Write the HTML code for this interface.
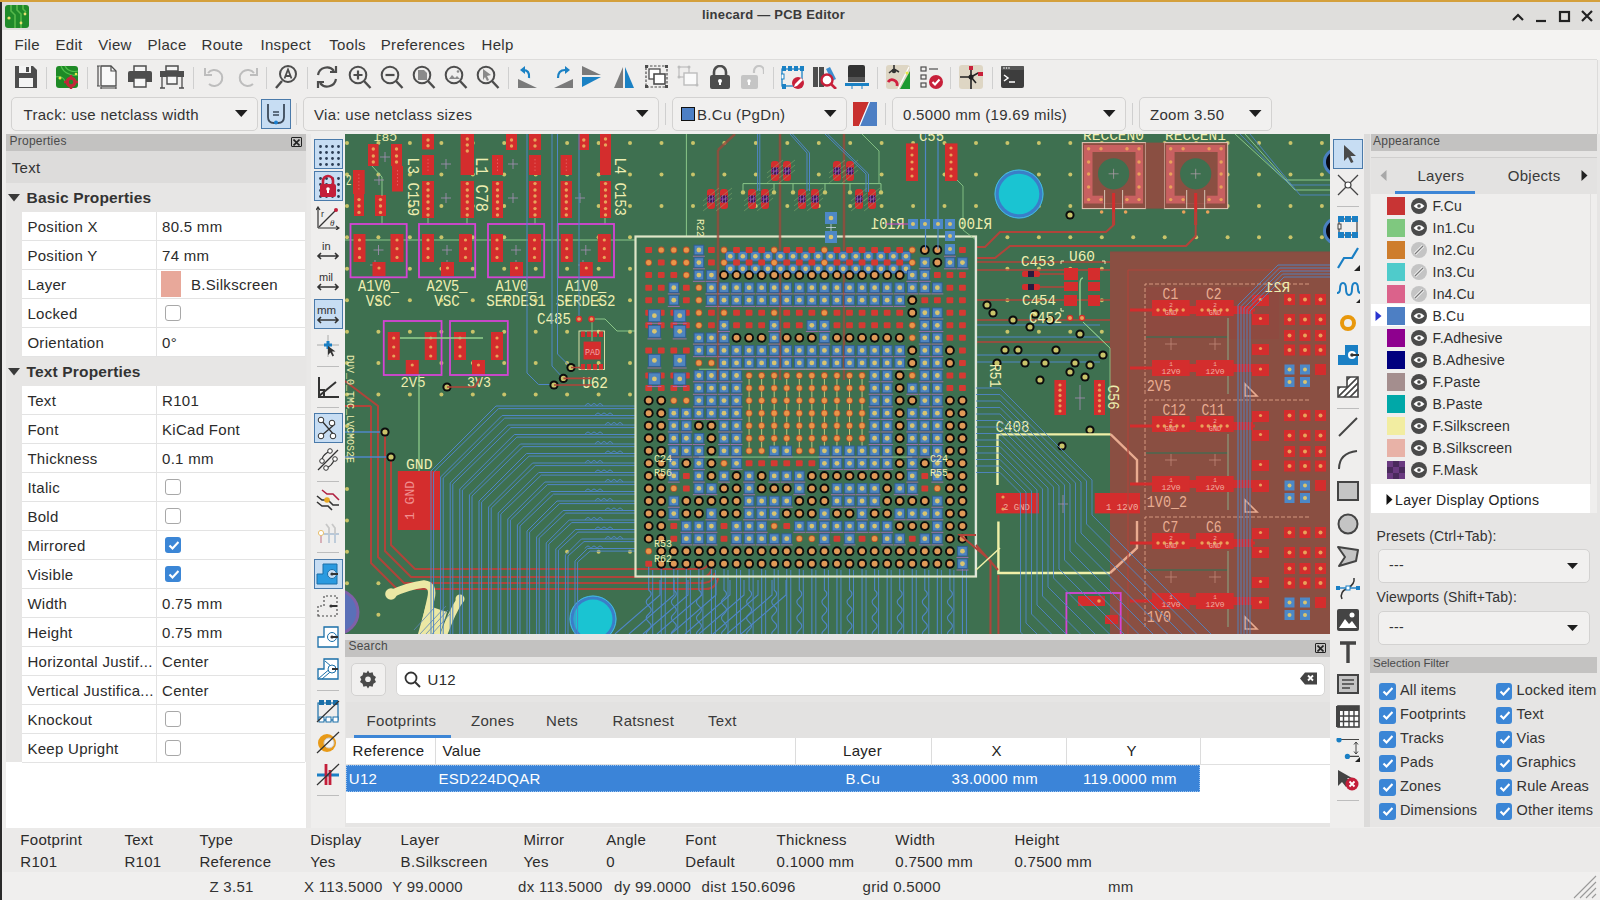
<!DOCTYPE html>
<html><head><meta charset="utf-8">
<style>
*{box-sizing:border-box;margin:0;padding:0}
html,body{width:1600px;height:900px;overflow:hidden;background:#efeeed;font-family:"Liberation Sans",sans-serif;color:#2e3436;position:relative}
.a{position:absolute}
.t{position:absolute;white-space:nowrap;line-height:1.2}
svg{position:absolute;overflow:hidden}
</style></head><body>

<div class="a" style="left:0px;top:0px;width:1600px;height:2px;background:#d4a03c;"></div>
<div class="a" style="left:0px;top:2px;width:1600px;height:28px;background:#dfdedc;"></div>
<div class="a" style="left:0px;top:2px;width:2px;height:898px;background:#2a2a2a;"></div>
<div class="t" style="left:702px;top:7px;font-size:13px;color:#3a3a3a;font-weight:bold;letter-spacing:0.2px;">linecard — PCB Editor</div>
<svg style="left:5px;top:5px" width="24" height="23" viewBox="0 0 24 23">
<rect x="0" y="0" width="24" height="23" rx="3" fill="#1f8a2a"/>
<path d="M6 0 v6 l4 4 v13 M12 0 v5 l4 4 v14 M18 0 v4 l3 3" stroke="#56b84a" stroke-width="1.6" fill="none"/>
<circle cx="4" cy="13" r="1.6" fill="#e8e070"/><circle cx="20" cy="9" r="1.4" fill="#e8e070"/><circle cx="16" cy="18" r="1.4" fill="#e8e070"/>
</svg>
<svg style="left:1508px;top:8px" width="90" height="18" viewBox="0 0 90 18">
<path d="M5 12 l5 -5 l5 5" stroke="#222" stroke-width="2.2" fill="none"/>
<path d="M28 13 h10" stroke="#222" stroke-width="2.2"/>
<rect x="52" y="4" width="9" height="9" stroke="#222" stroke-width="2.2" fill="none"/>
<path d="M74 3 l10 10 M84 3 l-10 10" stroke="#222" stroke-width="2.2"/>
</svg>
<div class="a" style="left:3px;top:30px;width:1597px;height:30px;background:#f4f3f2;"></div>
<div class="a" style="left:5px;top:59px;width:1592px;height:1px;background:#dddcdb;"></div>
<div class="t" style="left:14.5px;top:36px;font-size:15px;color:#333;font-weight:normal;letter-spacing:0.3px;">File</div>
<div class="t" style="left:55.5px;top:36px;font-size:15px;color:#333;font-weight:normal;letter-spacing:0.3px;">Edit</div>
<div class="t" style="left:98.3px;top:36px;font-size:15px;color:#333;font-weight:normal;letter-spacing:0.3px;">View</div>
<div class="t" style="left:147.5px;top:36px;font-size:15px;color:#333;font-weight:normal;letter-spacing:0.3px;">Place</div>
<div class="t" style="left:201.5px;top:36px;font-size:15px;color:#333;font-weight:normal;letter-spacing:0.3px;">Route</div>
<div class="t" style="left:260.5px;top:36px;font-size:15px;color:#333;font-weight:normal;letter-spacing:0.3px;">Inspect</div>
<div class="t" style="left:329.3px;top:36px;font-size:15px;color:#333;font-weight:normal;letter-spacing:0.3px;">Tools</div>
<div class="t" style="left:380.8px;top:36px;font-size:15px;color:#333;font-weight:normal;letter-spacing:0.3px;">Preferences</div>
<div class="t" style="left:481.5px;top:36px;font-size:15px;color:#333;font-weight:normal;letter-spacing:0.3px;">Help</div>
<div class="a" style="left:5px;top:60px;width:1592px;height:74px;background:#efeeed;"></div>
<div class="a" style="left:46px;top:67px;width:1px;height:22px;background:#cfcfcf;"></div>
<div class="a" style="left:87px;top:67px;width:1px;height:22px;background:#cfcfcf;"></div>
<div class="a" style="left:193px;top:67px;width:1px;height:22px;background:#cfcfcf;"></div>
<div class="a" style="left:266px;top:67px;width:1px;height:22px;background:#cfcfcf;"></div>
<div class="a" style="left:307px;top:67px;width:1px;height:22px;background:#cfcfcf;"></div>
<div class="a" style="left:508px;top:67px;width:1px;height:22px;background:#cfcfcf;"></div>
<div class="a" style="left:773px;top:67px;width:1px;height:22px;background:#cfcfcf;"></div>
<div class="a" style="left:877px;top:67px;width:1px;height:22px;background:#cfcfcf;"></div>
<div class="a" style="left:950px;top:67px;width:1px;height:22px;background:#cfcfcf;"></div>
<div class="a" style="left:992px;top:67px;width:1px;height:22px;background:#cfcfcf;"></div>
<svg style="left:15px;top:65px" width="24" height="24" viewBox="0 0 24 24"><path d="M0 1 h18 l4 4 v18 h-22z" fill="#4d4d4d"/><rect x="4" y="1" width="12" height="7" fill="#f4f4f4"/><rect x="11" y="2" width="3" height="5" fill="#4d4d4d"/><rect x="4" y="13" width="14" height="9" fill="#f4f4f4"/></svg>
<svg style="left:56px;top:65px" width="24" height="24" viewBox="0 0 24 24"><rect x="0" y="1" width="22" height="22" rx="3" fill="#1e8a26"/><path d="M5 1 q2 6 8 8 q4 2 9 1 M9 1 q2 4 6 5 q3 1 7 0 M0 12 q6 -2 9 4" stroke="#4fc04a" stroke-width="1.2" fill="none"/><circle cx="4" cy="13" r="1.5" fill="#e6e64a"/><circle cx="20" cy="9" r="1.3" fill="#e6e64a"/><circle cx="15" cy="17" r="5.5" fill="#c0283a"/><circle cx="15" cy="17" r="2.2" fill="#1e8a26"/><path d="M15 10 v3 M15 21 v3 M8 17 h3 M19 17 h3" stroke="#c0283a" stroke-width="2.5"/></svg>
<svg style="left:97px;top:65px" width="24" height="24" viewBox="0 0 24 24"><path d="M4 1 h10 l5 5 v15 h-15z" fill="#f8f8f8" stroke="#4d4d4d" stroke-width="1.3"/><path d="M14 1 v5 h5" fill="none" stroke="#4d4d4d" stroke-width="1.2"/><path d="M1 1 v20 M0 1 h3 M0 21 h3 M4 23 h15 M4 22 v2 M19 22 v2" stroke="#4d4d4d" stroke-width="1.2"/></svg>
<svg style="left:128px;top:65px" width="24" height="24" viewBox="0 0 24 24"><rect x="6" y="1" width="12" height="6" fill="#f4f4f4" stroke="#4d4d4d" stroke-width="1.5"/><path d="M0 8 q0 -2 2 -2 h20 q2 0 2 2 v9 h-24z" fill="#4d4d4d"/><path d="M6 13 h12 v9 h-12z" fill="#f6f6f6" stroke="#4d4d4d" stroke-width="1.4"/></svg>
<svg style="left:160px;top:65px" width="24" height="24" viewBox="0 0 24 24"><rect x="6" y="1" width="12" height="5" fill="#f4f4f4" stroke="#4d4d4d" stroke-width="1.5"/><path d="M0 6 h24 v6 h-24z" fill="#4d4d4d"/><path d="M7 11 h10 v8 h-10z" fill="#f6f6f6" stroke="#4d4d4d" stroke-width="1.4"/><path d="M2 12 v11 M22 12 v11 M0 23 h5 M19 23 h5" stroke="#4d4d4d" stroke-width="1.3"/></svg>
<svg style="left:202px;top:65px" width="24" height="24" viewBox="0 0 24 24"><path d="M6 8 a8 8 0 1 1 1 11" stroke="#bdbdbd" stroke-width="2" fill="none"/><path d="M3 3 v7 h7" stroke="#bdbdbd" stroke-width="2" fill="none"/></svg>
<svg style="left:236px;top:65px" width="24" height="24" viewBox="0 0 24 24"><path d="M18 8 a8 8 0 1 0 -1 11" stroke="#bdbdbd" stroke-width="2" fill="none"/><path d="M21 3 v7 h-7" stroke="#bdbdbd" stroke-width="2" fill="none"/></svg>
<svg style="left:275px;top:65px" width="24" height="24" viewBox="0 0 24 24"><circle cx="13" cy="9" r="8" fill="none" stroke="#4d4d4d" stroke-width="2"/><path d="M7 16 l-6 7" stroke="#4d4d4d" stroke-width="2.4"/><path d="M9.5 13.5 l3.5 -9 l3.5 9 M10.5 11 h5" stroke="#4d4d4d" stroke-width="1.8" fill="none"/></svg>
<svg style="left:315px;top:65px" width="24" height="24" viewBox="0 0 24 24"><path d="M3 10 a9 9 0 0 1 16 -4 M21 14 a9 9 0 0 1 -16 4" stroke="#4d4d4d" stroke-width="2.2" fill="none"/><path d="M21 1 v6 h-6 M3 23 v-6 h6" stroke="#4d4d4d" stroke-width="2.2" fill="none"/></svg>
<svg style="left:348px;top:65px" width="24" height="24" viewBox="0 0 24 24"><circle cx="10" cy="10" r="8.3" fill="none" stroke="#4d4d4d" stroke-width="2"/><path d="M16 16 l6.5 7" stroke="#4d4d4d" stroke-width="2.4"/><path d="M10 5.5 v9 M5.5 10 h9" stroke="#4d4d4d" stroke-width="2.2"/></svg>
<svg style="left:380px;top:65px" width="24" height="24" viewBox="0 0 24 24"><circle cx="10" cy="10" r="8.3" fill="none" stroke="#4d4d4d" stroke-width="2"/><path d="M16 16 l6.5 7" stroke="#4d4d4d" stroke-width="2.4"/><path d="M5.5 10 h9" stroke="#4d4d4d" stroke-width="2.2"/></svg>
<svg style="left:412px;top:65px" width="24" height="24" viewBox="0 0 24 24"><circle cx="10" cy="10" r="8.3" fill="none" stroke="#4d4d4d" stroke-width="2"/><path d="M16 16 l6.5 7" stroke="#4d4d4d" stroke-width="2.4"/><path d="M6 5 h6 l3 3 v7 h-9z" fill="#8a8a8a"/></svg>
<svg style="left:444px;top:65px" width="24" height="24" viewBox="0 0 24 24"><circle cx="10" cy="10" r="8.3" fill="none" stroke="#4d4d4d" stroke-width="2"/><path d="M16 16 l6.5 7" stroke="#4d4d4d" stroke-width="2.4"/><path d="M5 14 l3 -4 l3 3 l2 -2 l3 3z" fill="#8a8a8a"/><circle cx="14" cy="6.5" r="1.3" fill="#8a8a8a"/></svg>
<svg style="left:476px;top:65px" width="24" height="24" viewBox="0 0 24 24"><circle cx="10" cy="10" r="8.3" fill="none" stroke="#4d4d4d" stroke-width="2"/><path d="M16 16 l6.5 7" stroke="#4d4d4d" stroke-width="2.4"/><path d="M7 4 l8 6 l-4 1 l2 4 l-2 1 l-2 -4 l-2 3z" fill="#8a8a8a"/></svg>
<svg style="left:517px;top:65px" width="24" height="24" viewBox="0 0 24 24"><path d="M1 23 v-9 l19 9z" fill="#7a7a7a"/><path d="M12 13 q1 -8 -6 -8" stroke="#1a81c4" stroke-width="2.2" fill="none"/><path d="M8 1 l-5 4 l5 4z" fill="#1a81c4"/></svg>
<svg style="left:550px;top:65px" width="24" height="24" viewBox="0 0 24 24"><path d="M23 23 v-9 l-19 9z" fill="#7a7a7a"/><path d="M8 13 q0 -8 7 -8" stroke="#1a81c4" stroke-width="2.2" fill="none"/><path d="M15 1 l5 4 l-5 4z" fill="#1a81c4"/></svg>
<svg style="left:582px;top:65px" width="24" height="24" viewBox="0 0 24 24"><path d="M0 1 l19 9 h-19z" fill="#7a7a7a"/><path d="M0 12 h19 l-19 10z" fill="#1a81c4"/></svg>
<svg style="left:614px;top:65px" width="24" height="24" viewBox="0 0 24 24"><path d="M9 2 v21 h-9z" fill="#7a7a7a"/><path d="M11 2 l9 21 h-9z" fill="#1a81c4"/></svg>
<svg style="left:645px;top:65px" width="24" height="24" viewBox="0 0 24 24"><rect x="1" y="1" width="21" height="21" fill="none" stroke="#4d4d4d" stroke-width="1.2" stroke-dasharray="2.5 1.5"/><rect x="0" y="0" width="3" height="3" fill="#4d4d4d"/><rect x="20" y="0" width="3" height="3" fill="#4d4d4d"/><rect x="0" y="20" width="3" height="3" fill="#4d4d4d"/><rect x="20" y="20" width="3" height="3" fill="#4d4d4d"/><rect x="4" y="4" width="11" height="10" fill="#fff" stroke="#4d4d4d" stroke-width="1.3"/><rect x="9" y="9" width="11" height="10" fill="#fff" stroke="#4d4d4d" stroke-width="1.6"/></svg>
<svg style="left:677px;top:65px" width="24" height="24" viewBox="0 0 24 24"><rect x="2" y="2" width="10" height="10" fill="none" stroke="#bdbdbd" stroke-width="1.2"/><rect x="7" y="8" width="13" height="12" fill="#fafafa" stroke="#bdbdbd" stroke-width="1.4"/><circle cx="2" cy="2" r="1.5" fill="#bdbdbd"/><circle cx="12" cy="2" r="1.5" fill="#bdbdbd"/><circle cx="2" cy="12" r="1.5" fill="#bdbdbd"/><circle cx="20" cy="20" r="1.5" fill="#bdbdbd"/></svg>
<svg style="left:709px;top:65px" width="24" height="24" viewBox="0 0 24 24"><path d="M5 11 v-4 a6 6 0 0 1 12 0 v4" stroke="#4d4d4d" stroke-width="2.6" fill="none"/><rect x="1" y="10" width="20" height="14" rx="2" fill="#4d4d4d"/><circle cx="11" cy="16" r="2" fill="#fff"/><rect x="10" y="16" width="2" height="4" fill="#fff"/></svg>
<svg style="left:740px;top:65px" width="24" height="24" viewBox="0 0 24 24"><path d="M14 8 v-2 a5 5 0 0 1 10 0 v3" stroke="#c5c5c5" stroke-width="2.2" fill="none"/><rect x="1" y="10" width="17" height="14" rx="2" fill="#c5c5c5"/><circle cx="9" cy="16" r="1.8" fill="#fff"/><rect x="8" y="16" width="2" height="4" fill="#fff"/></svg>
<svg style="left:781px;top:65px" width="24" height="24" viewBox="0 0 24 24"><rect x="1" y="4" width="20" height="17" fill="none" stroke="#1a81c4" stroke-width="1.3"/><rect x="1" y="1" width="4" height="5" fill="#1a81c4"/><rect x="7" y="1" width="4" height="5" fill="#1a81c4"/><rect x="13" y="1" width="4" height="5" fill="#1a81c4"/><rect x="19" y="1" width="4" height="5" fill="#1a81c4"/><rect x="0" y="9" width="3" height="5" fill="#fff" stroke="#1a81c4"/><rect x="1" y="19" width="4" height="5" fill="#1a81c4"/><circle cx="17" cy="18" r="6" fill="#c8203a"/><path d="M13 22 l1 -3 l6 -6 l2 2 l-6 6z" fill="#fff"/></svg>
<svg style="left:813px;top:65px" width="24" height="24" viewBox="0 0 24 24"><rect x="0" y="2" width="5" height="20" fill="#4d4d4d"/><rect x="6" y="2" width="5" height="20" fill="#4d4d4d"/><path d="M13 4 l4 -2 l6 12 l-4 2z" fill="#3d8fd0"/><circle cx="14" cy="15" r="5.5" fill="#fff" stroke="#c8203a" stroke-width="2.4"/><path d="M18 19 l5 5" stroke="#c8203a" stroke-width="2.6"/></svg>
<svg style="left:845px;top:65px" width="24" height="24" viewBox="0 0 24 24"><rect x="3" y="0" width="17" height="14" rx="2" fill="#333"/><rect x="3" y="12" width="17" height="5" fill="#555"/><rect x="0" y="18" width="24" height="3" fill="#1a81c4"/><path d="M7 21 v3 M17 21 v3" stroke="#1a81c4" stroke-width="1"/></svg>
<svg style="left:886px;top:65px" width="24" height="24" viewBox="0 0 24 24"><rect x="0" y="0" width="24" height="24" rx="3" fill="#ded6c4"/><path d="M14 24 l10 -18 v18z" fill="#1e9a30"/><path d="M12 24 l11 -22" stroke="#fff" stroke-width="1.2"/><circle cx="21" cy="8" r="1.5" fill="#e6e64a"/><path d="M8 0 v4 M3 8 l5 -4 l5 3" stroke="#333" stroke-width="1.6" fill="none"/><circle cx="8" cy="6" r="2.2" fill="#333"/><path d="M2 17 a5 5 0 0 1 9 4" stroke="#d02040" stroke-width="2.8" fill="none"/></svg>
<svg style="left:920px;top:65px" width="24" height="24" viewBox="0 0 24 24"><rect x="1" y="2" width="5" height="4" fill="none" stroke="#4d4d4d" stroke-width="1.2"/><rect x="1" y="10" width="5" height="4" fill="none" stroke="#4d4d4d" stroke-width="1.2"/><rect x="1" y="18" width="5" height="4" fill="none" stroke="#4d4d4d" stroke-width="1.2"/><path d="M9 4 h9" stroke="#4d4d4d" stroke-width="1.2"/><circle cx="16" cy="17" r="7" fill="#c8203a"/><path d="M12.5 17 l2.5 2.5 l4.5 -5" stroke="#fff" stroke-width="2" fill="none"/></svg>
<svg style="left:959px;top:65px" width="24" height="24" viewBox="0 0 24 24"><rect x="0" y="0" width="24" height="24" rx="3" fill="#ded6c4"/><path d="M12 2 v22 M1 12 h11 M12 12 l7 -4 h5 M12 12 l5 6" stroke="#222" stroke-width="1.6" fill="none"/><circle cx="12" cy="12" r="2.5" fill="#222"/><rect x="10" y="1" width="4" height="4" fill="#c8203a"/><rect x="19" y="7" width="5" height="4" fill="#c8203a"/></svg>
<svg style="left:1001px;top:65px" width="24" height="24" viewBox="0 0 24 24"><rect x="0" y="1" width="23" height="22" rx="2" fill="#3d3d3d"/><rect x="0" y="1" width="23" height="4" rx="1" fill="#555"/><circle cx="3" cy="3" r="0.8" fill="#fff"/><circle cx="5.5" cy="3" r="0.8" fill="#fff"/><circle cx="8" cy="3" r="0.8" fill="#fff"/><path d="M3 10 l4 3 l-4 3 M8 17 h6" stroke="#fff" stroke-width="1.5" fill="none"/></svg>
<div class="a" style="left:11px;top:97px;width:247px;height:34px;border:1px solid #d3d2d1;border-radius:5px;background:#f1f0ef"></div>
<div class="t" style="left:23.5px;top:105.8px;font-size:15px;color:#333;font-weight:normal;letter-spacing:0.3px;">Track: use netclass width</div>
<svg style="left:235px;top:110px" width="13" height="8" viewBox="0 0 13 8"><path d="M0 0 h12.5 l-6.25 7z" fill="#1e1e1e"/></svg>
<div class="a" style="left:261px;top:99px;width:30px;height:30px;background:#c7ddf3;border:1px solid #4a7aaa"></div>
<svg style="left:265px;top:103px" width="22" height="24" viewBox="0 0 22 24"><path d="M3 1 v13 q0 6 6 6 h4 q6 0 6 -6 v-13" stroke="#3c4a5a" stroke-width="1.8" fill="none"/><path d="M8 9 h6 M8 12 h6" stroke="#3c4a5a" stroke-width="1.4"/><circle cx="11" cy="19.5" r="2" fill="#1a7fd0"/></svg>
<div class="a" style="left:296px;top:103px;width:1px;height:22px;background:#cfcfcf;"></div>
<div class="a" style="left:303px;top:97px;width:356px;height:34px;border:1px solid #d3d2d1;border-radius:5px;background:#f1f0ef"></div>
<div class="t" style="left:314px;top:105.8px;font-size:15px;color:#333;font-weight:normal;letter-spacing:0.3px;">Via: use netclass sizes</div>
<svg style="left:636px;top:110px" width="13" height="8" viewBox="0 0 13 8"><path d="M0 0 h12.5 l-6.25 7z" fill="#1e1e1e"/></svg>
<div class="a" style="left:665px;top:103px;width:1px;height:22px;background:#cfcfcf;"></div>
<div class="a" style="left:672px;top:97px;width:175px;height:34px;border:1px solid #d3d2d1;border-radius:5px;background:#f1f0ef"></div>
<div class="t" style="left:697px;top:105.8px;font-size:15px;color:#333;font-weight:normal;letter-spacing:0.3px;">B.Cu (PgDn)</div>
<svg style="left:824px;top:110px" width="13" height="8" viewBox="0 0 13 8"><path d="M0 0 h12.5 l-6.25 7z" fill="#1e1e1e"/></svg>
<div class="a" style="left:681px;top:107px;width:14px;height:14px;background:#4d7fc4;border:1px solid #111"></div>
<svg style="left:853px;top:102px" width="24" height="24" viewBox="0 0 24 24"><rect x="0" y="0" width="24" height="24" fill="#4d7fc4"/><path d="M0 0 h16 l-10 24 h-6z" fill="#c8302e"/><path d="M16.5 0 l-10 24" stroke="#fff" stroke-width="1.2"/></svg>
<div class="a" style="left:885px;top:103px;width:1px;height:22px;background:#cfcfcf;"></div>
<div class="a" style="left:892px;top:97px;width:234px;height:34px;border:1px solid #d3d2d1;border-radius:5px;background:#f1f0ef"></div>
<div class="t" style="left:903px;top:105.8px;font-size:15px;color:#333;font-weight:normal;letter-spacing:0.3px;">0.5000 mm (19.69 mils)</div>
<svg style="left:1103px;top:110px" width="13" height="8" viewBox="0 0 13 8"><path d="M0 0 h12.5 l-6.25 7z" fill="#1e1e1e"/></svg>
<div class="a" style="left:1132px;top:103px;width:1px;height:22px;background:#cfcfcf;"></div>
<div class="a" style="left:1139px;top:97px;width:133px;height:34px;border:1px solid #d3d2d1;border-radius:5px;background:#f1f0ef"></div>
<div class="t" style="left:1150px;top:105.8px;font-size:15px;color:#333;font-weight:normal;letter-spacing:0.3px;">Zoom 3.50</div>
<svg style="left:1249px;top:110px" width="13" height="8" viewBox="0 0 13 8"><path d="M0 0 h12.5 l-6.25 7z" fill="#1e1e1e"/></svg>
<div class="a" style="left:1597px;top:60px;width:1px;height:74px;background:#dcdbda;"></div>
<div class="a" style="left:6px;top:134px;width:300px;height:17px;background:#c3c2c1;"></div>
<div class="t" style="left:9.5px;top:133.8px;font-size:12px;color:#4a4a4a;font-weight:normal;letter-spacing:0.25px;">Properties</div>
<div class="a" style="left:291px;top:137px;width:11px;height:10px;border:1.3px solid #222;border-radius:1px"></div>
<svg style="left:293px;top:139px" width="7" height="7" viewBox="0 0 7 7"><path d="M0.5 0.5 l6 6 M6.5 0.5 l-6 6" stroke="#222" stroke-width="1.6"/></svg>
<div class="a" style="left:6px;top:151px;width:300px;height:611px;background:#e7e6e5;"></div>
<div class="a" style="left:6px;top:151px;width:300px;height:31.6px;background:#dddcdb;"></div>
<div class="a" style="left:6px;top:762px;width:300px;height:66px;background:#ffffff;"></div>
<div class="a" style="left:306px;top:134px;width:3px;height:694px;background:#e8e7e6;"></div>
<div class="t" style="left:11.7px;top:159px;font-size:15px;color:#333;font-weight:normal;letter-spacing:0.3px;">Text</div>
<svg style="left:8px;top:193.6px" width="13" height="8" viewBox="0 0 13 8"><path d="M0 0 h12 l-6 7.5z" fill="#3a3a3a"/></svg>
<div class="t" style="left:26.6px;top:188.79999999999998px;font-size:15.5px;color:#333;font-weight:bold;letter-spacing:0.15px;">Basic Properties</div>
<div class="a" style="left:22px;top:211.6px;width:283px;height:29px;background:#ffffff;"></div>
<div class="a" style="left:22px;top:239.6px;width:283px;height:1px;background:#e3e3e3;"></div>
<div class="a" style="left:156px;top:211.6px;width:1px;height:29px;background:#e3e3e3;"></div>
<div class="t" style="left:27.4px;top:217.79999999999998px;font-size:15px;color:#2b2b2b;font-weight:normal;letter-spacing:0.3px;">Position X</div>
<div class="t" style="left:162px;top:217.79999999999998px;font-size:15px;color:#2b2b2b;font-weight:normal;letter-spacing:0.3px;">80.5 mm</div>
<div class="a" style="left:22px;top:240.6px;width:283px;height:29px;background:#ffffff;"></div>
<div class="a" style="left:22px;top:268.6px;width:283px;height:1px;background:#e3e3e3;"></div>
<div class="a" style="left:156px;top:240.6px;width:1px;height:29px;background:#e3e3e3;"></div>
<div class="t" style="left:27.4px;top:246.79999999999998px;font-size:15px;color:#2b2b2b;font-weight:normal;letter-spacing:0.3px;">Position Y</div>
<div class="t" style="left:162px;top:246.79999999999998px;font-size:15px;color:#2b2b2b;font-weight:normal;letter-spacing:0.3px;">74 mm</div>
<div class="a" style="left:22px;top:269.6px;width:283px;height:29px;background:#ffffff;"></div>
<div class="a" style="left:22px;top:297.6px;width:283px;height:1px;background:#e3e3e3;"></div>
<div class="a" style="left:156px;top:269.6px;width:1px;height:29px;background:#e3e3e3;"></div>
<div class="t" style="left:27.4px;top:275.8px;font-size:15px;color:#2b2b2b;font-weight:normal;letter-spacing:0.3px;">Layer</div>
<div class="a" style="left:161px;top:271.1px;width:20px;height:26px;background:#e8a89a;"></div>
<div class="t" style="left:191px;top:275.8px;font-size:15px;color:#2b2b2b;font-weight:normal;letter-spacing:0.3px;">B.Silkscreen</div>
<div class="a" style="left:22px;top:298.6px;width:283px;height:29px;background:#ffffff;"></div>
<div class="a" style="left:22px;top:326.6px;width:283px;height:1px;background:#e3e3e3;"></div>
<div class="a" style="left:156px;top:298.6px;width:1px;height:29px;background:#e3e3e3;"></div>
<div class="t" style="left:27.4px;top:304.8px;font-size:15px;color:#2b2b2b;font-weight:normal;letter-spacing:0.3px;">Locked</div>
<div class="a" style="left:165px;top:305.1px;width:16px;height:16px;border:1px solid #a8a8a8;border-radius:3px;background:#fff"></div>
<div class="a" style="left:22px;top:327.6px;width:283px;height:29px;background:#ffffff;"></div>
<div class="a" style="left:22px;top:355.6px;width:283px;height:1px;background:#e3e3e3;"></div>
<div class="a" style="left:156px;top:327.6px;width:1px;height:29px;background:#e3e3e3;"></div>
<div class="t" style="left:27.4px;top:333.8px;font-size:15px;color:#2b2b2b;font-weight:normal;letter-spacing:0.3px;">Orientation</div>
<div class="t" style="left:162px;top:333.8px;font-size:15px;color:#2b2b2b;font-weight:normal;letter-spacing:0.3px;">0°</div>
<svg style="left:8px;top:367.6px" width="13" height="8" viewBox="0 0 13 8"><path d="M0 0 h12 l-6 7.5z" fill="#3a3a3a"/></svg>
<div class="t" style="left:26.6px;top:362.8px;font-size:15.5px;color:#333;font-weight:bold;letter-spacing:0.15px;">Text Properties</div>
<div class="a" style="left:22px;top:385.6px;width:283px;height:29px;background:#ffffff;"></div>
<div class="a" style="left:22px;top:413.6px;width:283px;height:1px;background:#e3e3e3;"></div>
<div class="a" style="left:156px;top:385.6px;width:1px;height:29px;background:#e3e3e3;"></div>
<div class="t" style="left:27.4px;top:391.8px;font-size:15px;color:#2b2b2b;font-weight:normal;letter-spacing:0.3px;">Text</div>
<div class="t" style="left:162px;top:391.8px;font-size:15px;color:#2b2b2b;font-weight:normal;letter-spacing:0.3px;">R101</div>
<div class="a" style="left:22px;top:414.6px;width:283px;height:29px;background:#ffffff;"></div>
<div class="a" style="left:22px;top:442.6px;width:283px;height:1px;background:#e3e3e3;"></div>
<div class="a" style="left:156px;top:414.6px;width:1px;height:29px;background:#e3e3e3;"></div>
<div class="t" style="left:27.4px;top:420.8px;font-size:15px;color:#2b2b2b;font-weight:normal;letter-spacing:0.3px;">Font</div>
<div class="t" style="left:162px;top:420.8px;font-size:15px;color:#2b2b2b;font-weight:normal;letter-spacing:0.3px;">KiCad Font</div>
<div class="a" style="left:22px;top:443.6px;width:283px;height:29px;background:#ffffff;"></div>
<div class="a" style="left:22px;top:471.6px;width:283px;height:1px;background:#e3e3e3;"></div>
<div class="a" style="left:156px;top:443.6px;width:1px;height:29px;background:#e3e3e3;"></div>
<div class="t" style="left:27.4px;top:449.8px;font-size:15px;color:#2b2b2b;font-weight:normal;letter-spacing:0.3px;">Thickness</div>
<div class="t" style="left:162px;top:449.8px;font-size:15px;color:#2b2b2b;font-weight:normal;letter-spacing:0.3px;">0.1 mm</div>
<div class="a" style="left:22px;top:472.6px;width:283px;height:29px;background:#ffffff;"></div>
<div class="a" style="left:22px;top:500.6px;width:283px;height:1px;background:#e3e3e3;"></div>
<div class="a" style="left:156px;top:472.6px;width:1px;height:29px;background:#e3e3e3;"></div>
<div class="t" style="left:27.4px;top:478.8px;font-size:15px;color:#2b2b2b;font-weight:normal;letter-spacing:0.3px;">Italic</div>
<div class="a" style="left:165px;top:479.1px;width:16px;height:16px;border:1px solid #a8a8a8;border-radius:3px;background:#fff"></div>
<div class="a" style="left:22px;top:501.6px;width:283px;height:29px;background:#ffffff;"></div>
<div class="a" style="left:22px;top:529.6px;width:283px;height:1px;background:#e3e3e3;"></div>
<div class="a" style="left:156px;top:501.6px;width:1px;height:29px;background:#e3e3e3;"></div>
<div class="t" style="left:27.4px;top:507.8px;font-size:15px;color:#2b2b2b;font-weight:normal;letter-spacing:0.3px;">Bold</div>
<div class="a" style="left:165px;top:508.1px;width:16px;height:16px;border:1px solid #a8a8a8;border-radius:3px;background:#fff"></div>
<div class="a" style="left:22px;top:530.6px;width:283px;height:29px;background:#ffffff;"></div>
<div class="a" style="left:22px;top:558.6px;width:283px;height:1px;background:#e3e3e3;"></div>
<div class="a" style="left:156px;top:530.6px;width:1px;height:29px;background:#e3e3e3;"></div>
<div class="t" style="left:27.4px;top:536.8000000000001px;font-size:15px;color:#2b2b2b;font-weight:normal;letter-spacing:0.3px;">Mirrored</div>
<div class="a" style="left:165px;top:537.1px;width:16px;height:16px;border-radius:3px;background:#3b86d6"></div>
<svg style="left:167px;top:539.1px" width="12" height="12" viewBox="0 0 12 12"><path d="M2.5 6.5 l3 3 l6 -6.5" stroke="#fff" stroke-width="2.2" fill="none"/></svg>
<div class="a" style="left:22px;top:559.6px;width:283px;height:29px;background:#ffffff;"></div>
<div class="a" style="left:22px;top:587.6px;width:283px;height:1px;background:#e3e3e3;"></div>
<div class="a" style="left:156px;top:559.6px;width:1px;height:29px;background:#e3e3e3;"></div>
<div class="t" style="left:27.4px;top:565.8000000000001px;font-size:15px;color:#2b2b2b;font-weight:normal;letter-spacing:0.3px;">Visible</div>
<div class="a" style="left:165px;top:566.1px;width:16px;height:16px;border-radius:3px;background:#3b86d6"></div>
<svg style="left:167px;top:568.1px" width="12" height="12" viewBox="0 0 12 12"><path d="M2.5 6.5 l3 3 l6 -6.5" stroke="#fff" stroke-width="2.2" fill="none"/></svg>
<div class="a" style="left:22px;top:588.6px;width:283px;height:29px;background:#ffffff;"></div>
<div class="a" style="left:22px;top:616.6px;width:283px;height:1px;background:#e3e3e3;"></div>
<div class="a" style="left:156px;top:588.6px;width:1px;height:29px;background:#e3e3e3;"></div>
<div class="t" style="left:27.4px;top:594.8000000000001px;font-size:15px;color:#2b2b2b;font-weight:normal;letter-spacing:0.3px;">Width</div>
<div class="t" style="left:162px;top:594.8000000000001px;font-size:15px;color:#2b2b2b;font-weight:normal;letter-spacing:0.3px;">0.75 mm</div>
<div class="a" style="left:22px;top:617.6px;width:283px;height:29px;background:#ffffff;"></div>
<div class="a" style="left:22px;top:645.6px;width:283px;height:1px;background:#e3e3e3;"></div>
<div class="a" style="left:156px;top:617.6px;width:1px;height:29px;background:#e3e3e3;"></div>
<div class="t" style="left:27.4px;top:623.8000000000001px;font-size:15px;color:#2b2b2b;font-weight:normal;letter-spacing:0.3px;">Height</div>
<div class="t" style="left:162px;top:623.8000000000001px;font-size:15px;color:#2b2b2b;font-weight:normal;letter-spacing:0.3px;">0.75 mm</div>
<div class="a" style="left:22px;top:646.6px;width:283px;height:29px;background:#ffffff;"></div>
<div class="a" style="left:22px;top:674.6px;width:283px;height:1px;background:#e3e3e3;"></div>
<div class="a" style="left:156px;top:646.6px;width:1px;height:29px;background:#e3e3e3;"></div>
<div class="t" style="left:27.4px;top:652.8000000000001px;font-size:15px;color:#2b2b2b;font-weight:normal;letter-spacing:0.3px;">Horizontal Justif...</div>
<div class="t" style="left:162px;top:652.8000000000001px;font-size:15px;color:#2b2b2b;font-weight:normal;letter-spacing:0.3px;">Center</div>
<div class="a" style="left:22px;top:675.6px;width:283px;height:29px;background:#ffffff;"></div>
<div class="a" style="left:22px;top:703.6px;width:283px;height:1px;background:#e3e3e3;"></div>
<div class="a" style="left:156px;top:675.6px;width:1px;height:29px;background:#e3e3e3;"></div>
<div class="t" style="left:27.4px;top:681.8000000000001px;font-size:15px;color:#2b2b2b;font-weight:normal;letter-spacing:0.3px;">Vertical Justifica...</div>
<div class="t" style="left:162px;top:681.8000000000001px;font-size:15px;color:#2b2b2b;font-weight:normal;letter-spacing:0.3px;">Center</div>
<div class="a" style="left:22px;top:704.6px;width:283px;height:29px;background:#ffffff;"></div>
<div class="a" style="left:22px;top:732.6px;width:283px;height:1px;background:#e3e3e3;"></div>
<div class="a" style="left:156px;top:704.6px;width:1px;height:29px;background:#e3e3e3;"></div>
<div class="t" style="left:27.4px;top:710.8000000000001px;font-size:15px;color:#2b2b2b;font-weight:normal;letter-spacing:0.3px;">Knockout</div>
<div class="a" style="left:165px;top:711.1px;width:16px;height:16px;border:1px solid #a8a8a8;border-radius:3px;background:#fff"></div>
<div class="a" style="left:22px;top:733.6px;width:283px;height:29px;background:#ffffff;"></div>
<div class="a" style="left:22px;top:761.6px;width:283px;height:1px;background:#e3e3e3;"></div>
<div class="a" style="left:156px;top:733.6px;width:1px;height:29px;background:#e3e3e3;"></div>
<div class="t" style="left:27.4px;top:739.8000000000001px;font-size:15px;color:#2b2b2b;font-weight:normal;letter-spacing:0.3px;">Keep Upright</div>
<div class="a" style="left:165px;top:740.1px;width:16px;height:16px;border:1px solid #a8a8a8;border-radius:3px;background:#fff"></div>
<div class="a" style="left:309px;top:134px;width:36px;height:694px;background:#efeeed;"></div>
<div class="a" style="left:307px;top:134px;width:4px;height:694px;background:#e9e8e7;"></div>
<div class="a" style="left:313.5px;top:139.0px;width:29.5px;height:29.5px;background:#c7ddf3;border:1px solid #4a7aaa"></div>
<div class="a" style="left:313.5px;top:171.0px;width:29.5px;height:29.5px;background:#c7ddf3;border:1px solid #4a7aaa"></div>
<div class="a" style="left:313.5px;top:299.3px;width:29.5px;height:29.5px;background:#c7ddf3;border:1px solid #4a7aaa"></div>
<div class="a" style="left:313.5px;top:413.3px;width:29.5px;height:29.5px;background:#c7ddf3;border:1px solid #4a7aaa"></div>
<div class="a" style="left:313.5px;top:559.3px;width:29.5px;height:29.5px;background:#c7ddf3;border:1px solid #4a7aaa"></div>
<svg style="left:316px;top:141.7px" width="24" height="24" viewBox="0 0 24 24"><g transform="translate(1.5,1.5)"><circle cx="3" cy="3" r="1.4" fill="#2c3e55"/><circle cx="9" cy="3" r="1.4" fill="#2c3e55"/><circle cx="15" cy="3" r="1.4" fill="#2c3e55"/><circle cx="21" cy="3" r="1.4" fill="#2c3e55"/><circle cx="3" cy="9" r="1.4" fill="#2c3e55"/><circle cx="9" cy="9" r="1.4" fill="#2c3e55"/><circle cx="15" cy="9" r="1.4" fill="#2c3e55"/><circle cx="21" cy="9" r="1.4" fill="#2c3e55"/><circle cx="3" cy="15" r="1.4" fill="#2c3e55"/><circle cx="9" cy="15" r="1.4" fill="#2c3e55"/><circle cx="15" cy="15" r="1.4" fill="#2c3e55"/><circle cx="21" cy="15" r="1.4" fill="#2c3e55"/><circle cx="3" cy="21" r="1.4" fill="#2c3e55"/><circle cx="9" cy="21" r="1.4" fill="#2c3e55"/><circle cx="15" cy="21" r="1.4" fill="#2c3e55"/><circle cx="21" cy="21" r="1.4" fill="#2c3e55"/></g></svg>
<svg style="left:316px;top:173.7px" width="24" height="24" viewBox="0 0 24 24"><g transform="translate(1.5,1.5)"><circle cx="3" cy="3" r="1.4" fill="#2c3e55"/><circle cx="9" cy="3" r="1.4" fill="#2c3e55"/><circle cx="15" cy="3" r="1.4" fill="#2c3e55"/><circle cx="21" cy="3" r="1.4" fill="#2c3e55"/><circle cx="3" cy="9" r="1.4" fill="#2c3e55"/><circle cx="9" cy="9" r="1.4" fill="#2c3e55"/><circle cx="15" cy="9" r="1.4" fill="#2c3e55"/><circle cx="21" cy="9" r="1.4" fill="#2c3e55"/><circle cx="3" cy="15" r="1.4" fill="#2c3e55"/><circle cx="9" cy="15" r="1.4" fill="#2c3e55"/><circle cx="15" cy="15" r="1.4" fill="#2c3e55"/><circle cx="21" cy="15" r="1.4" fill="#2c3e55"/><circle cx="3" cy="21" r="1.4" fill="#2c3e55"/><circle cx="9" cy="21" r="1.4" fill="#2c3e55"/><circle cx="15" cy="21" r="1.4" fill="#2c3e55"/><circle cx="21" cy="21" r="1.4" fill="#2c3e55"/></g><path d="M7 11 v-4 a5 5 0 0 1 10 0 v4" stroke="#c41e3a" stroke-width="2.6" fill="none"/><rect x="4" y="10" width="16" height="13" rx="2" fill="#c41e3a"/><circle cx="12" cy="15" r="1.8" fill="#fff"/><rect x="11" y="15" width="2" height="4" fill="#fff"/></svg>
<svg style="left:316px;top:206px" width="24" height="24" viewBox="0 0 24 24"><path d="M2 22 h20 M2 22 v-20 M0 4 l2 -3 l2 3 M20 20 l3 2 l-3 2" stroke="#333" stroke-width="1.2" fill="none"/><path d="M3 21 l17 -17" stroke="#333" stroke-width="1.2"/><circle cx="20" cy="4" r="2" fill="#c41e3a"/><text x="5" y="11" font-size="9" font-family="Liberation Sans" fill="#333">r</text><text x="14" y="20" font-size="9" font-style="italic" font-family="Liberation Serif" fill="#333">θ</text></svg>
<svg style="left:316px;top:238px" width="24" height="24" viewBox="0 0 24 24"><text x="6" y="12" font-size="11" font-family="Liberation Sans" fill="#333">in</text><path d="M2 18 h20 M5 15 l-3 3 l3 3 M19 15 l3 3 l-3 3" stroke="#333" stroke-width="1.6" fill="none"/></svg>
<svg style="left:316px;top:269px" width="24" height="24" viewBox="0 0 24 24"><text x="3" y="12" font-size="11" font-family="Liberation Sans" fill="#333">mil</text><path d="M2 18 h20 M5 15 l-3 3 l3 3 M19 15 l3 3 l-3 3" stroke="#333" stroke-width="1.6" fill="none"/></svg>
<svg style="left:316px;top:302px" width="24" height="24" viewBox="0 0 24 24"><text x="1" y="12" font-size="11.5" font-family="Liberation Sans" fill="#333">mm</text><path d="M2 18 h20 M5 15 l-3 3 l3 3 M19 15 l3 3 l-3 3" stroke="#333" stroke-width="1.6" fill="none"/></svg>
<svg style="left:316px;top:334px" width="24" height="24" viewBox="0 0 24 24"><path d="M12 1 v22 M1 11 h22" stroke="#999" stroke-width="0.8"/><path d="M12 7 v8 M8 11 h8" stroke="#1a7fc4" stroke-width="3"/><path d="M12 12 l0 9 l2.5 -2.5 l2 4 l1.5 -1 l-2 -4 l3.5 0z" fill="#333"/></svg>
<div class="a" style="left:317px;top:366px;width:22px;height:1px;background:#bdbdbd;"></div>
<svg style="left:316px;top:375px" width="24" height="24" viewBox="0 0 24 24"><path d="M3 2 v20 h20 M3 21 l17 -14 M3 15 h5 v6" stroke="#333" stroke-width="2" fill="none"/></svg>
<div class="a" style="left:317px;top:406.6px;width:22px;height:1px;background:#bdbdbd;"></div>
<svg style="left:316px;top:416px" width="24" height="24" viewBox="0 0 24 24"><path d="M5 4 l14 16 M5 20 l14 -12" stroke="#333" stroke-width="1.3"/><circle cx="5" cy="4" r="2.8" fill="#fff" stroke="#333"/><circle cx="16" cy="7" r="2.8" fill="#fff" stroke="#333"/><circle cx="5" cy="20" r="2.8" fill="#fff" stroke="#333"/><circle cx="17" cy="20" r="2.8" fill="#fff" stroke="#333"/></svg>
<svg style="left:316px;top:447.5px" width="24" height="24" viewBox="0 0 24 24"><path d="M2 22 l20 -20" stroke="#333" stroke-width="1.3"/><path d="M6 12 q0 -4 6 -8 M10 20 q6 -2 8 -8" stroke="#333" stroke-width="1.1" fill="none"/><circle cx="6" cy="13" r="2.3" fill="#fff" stroke="#333"/><circle cx="14" cy="3" r="2.3" fill="#fff" stroke="#333"/><circle cx="10" cy="20" r="2.3" fill="#fff" stroke="#333"/><circle cx="19" cy="11" r="2.3" fill="#fff" stroke="#333"/></svg>
<div class="a" style="left:317px;top:481px;width:22px;height:1px;background:#bdbdbd;"></div>
<svg style="left:316px;top:487.3px" width="24" height="24" viewBox="0 0 24 24"><path d="M1 9 l5 4 h6 l5 5 h6 M1 15 l5 4 h6 l4 4" stroke="#333" stroke-width="1.6" fill="none"/><path d="M6 3 l5 4 h6 l6 6" stroke="#b02040" stroke-width="1.6" fill="none"/><circle cx="11" cy="13" r="2.8" fill="#e8a820"/></svg>
<svg style="left:316px;top:521px" width="24" height="24" viewBox="0 0 24 24"><path d="M5 22 v-9 M13 22 v-9 M19 22 v-9 M7 13 h16" stroke="#b9c8d8" stroke-width="1.8" fill="none"/><path d="M13 13 v-6 l-3 -4 M19 13 v-6 l-3 -4" stroke="#c8c8c8" stroke-width="1.8" fill="none"/><path d="M5 22 v-9" stroke="#d8b0b8" stroke-width="2"/><circle cx="5" cy="12" r="2.6" fill="#fff" stroke="#e8c070"/></svg>
<div class="a" style="left:317px;top:552px;width:22px;height:1px;background:#bdbdbd;"></div>
<svg style="left:316px;top:562px" width="24" height="24" viewBox="0 0 24 24"><path d="M1 22 v-10 h6 v-10 h14 v20z" fill="#2a9ae0" stroke="#1a6fa8" stroke-width="1"/><circle cx="16" cy="12" r="4.5" fill="#c7ddf3" stroke="#1a6fa8"/><path d="M16 12 h6" stroke="#333" stroke-width="2"/><circle cx="16" cy="12" r="1.6" fill="#333"/></svg>
<svg style="left:316px;top:593.6px" width="24" height="24" viewBox="0 0 24 24"><path d="M2 22 v-10 h6 v-10 h13 v20z" fill="none" stroke="#444" stroke-width="1.1" stroke-dasharray="2 2"/><path d="M15 12 h6" stroke="#333" stroke-width="2"/><circle cx="15" cy="12" r="1.6" fill="#333"/></svg>
<svg style="left:316px;top:625px" width="24" height="24" viewBox="0 0 24 24"><path d="M2 22 v-10 h6 v-10 h14 v20z" fill="#fff" stroke="#1a6fa8" stroke-width="1.3"/><circle cx="16" cy="12" r="4.5" fill="#fff" stroke="#1a6fa8"/><path d="M16 12 h6" stroke="#333" stroke-width="2"/><circle cx="16" cy="12" r="1.6" fill="#333"/></svg>
<svg style="left:316px;top:657px" width="24" height="24" viewBox="0 0 24 24"><path d="M2 22 v-10 h6 v-10 h14 v20z" fill="#fff" stroke="#1a6fa8" stroke-width="1.3"/><path d="M2 22 l14 -12 M6 22 l14 -12 M9 4 l7 6" stroke="#1a6fa8" stroke-width="1"/><circle cx="16" cy="12" r="4" fill="#fff" stroke="#1a6fa8"/><path d="M16 12 h6" stroke="#333" stroke-width="2"/></svg>
<div class="a" style="left:317px;top:690px;width:22px;height:1px;background:#bdbdbd;"></div>
<svg style="left:316px;top:698.5px" width="24" height="24" viewBox="0 0 24 24"><rect x="2" y="4" width="20" height="17" fill="none" stroke="#1a6fa8" stroke-width="1.2"/><rect x="3" y="1" width="5" height="5" fill="#1a6fa8"/><rect x="10" y="1" width="5" height="5" fill="#1a6fa8"/><rect x="17" y="1" width="5" height="5" fill="#1a6fa8"/><rect x="3" y="18" width="5" height="5" fill="#fff" stroke="#1a6fa8"/><rect x="10" y="18" width="5" height="5" fill="#fff" stroke="#1a6fa8"/><rect x="17" y="18" width="5" height="5" fill="#fff" stroke="#1a6fa8"/><path d="M1 23 l22 -21" stroke="#333" stroke-width="1.2"/></svg>
<svg style="left:316px;top:730px" width="24" height="24" viewBox="0 0 24 24"><circle cx="11" cy="13" r="9" fill="#e89a18"/><circle cx="13" cy="13" r="5" fill="#f4f4f4" stroke="#ccc"/><path d="M1 23 l22 -21" stroke="#333" stroke-width="1.2"/></svg>
<svg style="left:316px;top:762px" width="24" height="24" viewBox="0 0 24 24"><path d="M1 13 h22" stroke="#1a7fc4" stroke-width="3"/><path d="M10 2 v21 M14 8 v15" stroke="#c41e3a" stroke-width="2.8"/><path d="M1 23 l22 -21" stroke="#333" stroke-width="1.2"/></svg>
<div class="a" style="left:317px;top:795px;width:22px;height:1px;background:#bdbdbd;"></div>
<div class="a" style="left:1330px;top:134px;width:35px;height:693px;background:#efeeed;"></div>
<div class="a" style="left:1364px;top:134px;width:6px;height:693px;background:#dcdbda;"></div>
<div class="a" style="left:1333.4px;top:139px;width:29.6px;height:29.6px;background:#c7ddf3;border:1px solid #4a7aaa"></div>
<svg style="left:1336px;top:142px" width="24" height="24" viewBox="0 0 24 24"><path d="M8 3 l0 16 l4 -4 l3 6 l2.5 -1 l-3 -6 l5.5 0z" fill="#4a4a4a"/></svg>
<svg style="left:1336px;top:173px" width="24" height="24" viewBox="0 0 24 24"><path d="M2 2 l20 20 M22 2 l-20 20" stroke="#444" stroke-width="1.3"/><circle cx="12" cy="12" r="3" fill="#fff" stroke="#444" stroke-width="1.2"/></svg>
<div class="a" style="left:1337px;top:206px;width:22px;height:1px;background:#bdbdbd;"></div>
<svg style="left:1336px;top:214.5px" width="24" height="24" viewBox="0 0 24 24"><rect x="3" y="4" width="18" height="16" fill="none" stroke="#444" stroke-width="1.2"/><rect x="2" y="9" width="3" height="5" fill="#efeeed" stroke="#444" stroke-width="1"/><rect x="2" y="1" width="6" height="6" fill="#1a7fc4"/><rect x="2" y="17" width="6" height="6" fill="#1a7fc4"/><rect x="9" y="1" width="6" height="6" fill="#1a7fc4"/><rect x="9" y="17" width="6" height="6" fill="#1a7fc4"/><rect x="16" y="1" width="6" height="6" fill="#1a7fc4"/><rect x="16" y="17" width="6" height="6" fill="#1a7fc4"/></svg>
<svg style="left:1336px;top:247px" width="24" height="24" viewBox="0 0 24 24"><path d="M2 21 l6 -10 h8 l6 -10" stroke="#1a7fc4" stroke-width="2.2" fill="none"/><path d="M24 24 v-6 l-6 6z" fill="#222"/></svg>
<svg style="left:1336px;top:279px" width="24" height="24" viewBox="0 0 24 24"><path d="M1 14 q3 0 3 -4 q0 -6 3 -6 q3 0 3 6 q0 6 3 6 q3 0 3 -6 q0 -6 3 -6 q3 0 3 6 q0 4 3 4" stroke="#1a7fc4" stroke-width="2" fill="none"/><path d="M24 26 v-6 l-6 6z" fill="#222"/></svg>
<svg style="left:1336px;top:311px" width="24" height="24" viewBox="0 0 24 24"><circle cx="12" cy="12" r="6" fill="none" stroke="#e8980c" stroke-width="4"/></svg>
<svg style="left:1336px;top:343px" width="24" height="24" viewBox="0 0 24 24"><path d="M2 22 v-10 h7 v-10 h13 v20z" fill="#1a7fc4"/><circle cx="16" cy="12" r="4" fill="#fff"/><path d="M16 12 h7" stroke="#333" stroke-width="2"/><circle cx="16" cy="12" r="1.8" fill="#333"/></svg>
<svg style="left:1336px;top:375px" width="24" height="24" viewBox="0 0 24 24"><defs><clipPath id="zc"><path d="M2 22 v-10 h9 v-10 h11 v20z"/></clipPath></defs><path d="M2 22 v-10 h9 v-10 h11 v20z" fill="#fff" stroke="#444" stroke-width="1.6"/><g clip-path="url(#zc)" stroke="#444" stroke-width="1.6"><path d="M-4 20 l20 -20 M0 24 l24 -24 M5 25 l20 -20 M10 26 l16 -16 M-6 14 l14 -14"/></g></svg>
<div class="a" style="left:1337px;top:407.5px;width:22px;height:1px;background:#bdbdbd;"></div>
<svg style="left:1336px;top:415px" width="24" height="24" viewBox="0 0 24 24"><path d="M3 21 l18 -18" stroke="#444" stroke-width="2"/></svg>
<svg style="left:1336px;top:447px" width="24" height="24" viewBox="0 0 24 24"><path d="M3 22 q0 -16 18 -18" stroke="#444" stroke-width="2" fill="none"/></svg>
<svg style="left:1336px;top:479px" width="24" height="24" viewBox="0 0 24 24"><rect x="2" y="3" width="20" height="18" fill="#c4c4c4" stroke="#444" stroke-width="2"/></svg>
<svg style="left:1336px;top:512px" width="24" height="24" viewBox="0 0 24 24"><circle cx="12" cy="12" r="9.5" fill="#c4c4c4" stroke="#444" stroke-width="2"/></svg>
<svg style="left:1336px;top:544px" width="24" height="24" viewBox="0 0 24 24"><path d="M2 3 l20 3 l-2 11 l-17 5 l6 -9z" fill="#c4c4c4" stroke="#444" stroke-width="2" stroke-linejoin="round"/></svg>
<svg style="left:1336px;top:576px" width="24" height="24" viewBox="0 0 24 24"><path d="M6 23 q-3 -7 6 -11 q7 -4 6 -10" stroke="#333" stroke-width="1.5" fill="none"/><path d="M2 12 h20" stroke="#1a7fc4" stroke-width="1.4"/><rect x="0" y="10" width="4" height="4" fill="#1a7fc4"/><rect x="20" y="10" width="4" height="4" fill="#1a7fc4"/><rect x="10" y="10" width="4" height="4" fill="#fff" stroke="#1a7fc4"/></svg>
<svg style="left:1336px;top:608px" width="24" height="24" viewBox="0 0 24 24"><rect x="1" y="1" width="22" height="22" rx="2" fill="#444"/><path d="M3 20 l6 -9 l4 5 l3 -3 l5 7z" fill="#fff"/><circle cx="16" cy="7" r="2.5" fill="#fff"/></svg>
<svg style="left:1336px;top:640px" width="24" height="24" viewBox="0 0 24 24"><path d="M4 3 h16 M12 3 v20" stroke="#444" stroke-width="3.4"/></svg>
<svg style="left:1336px;top:672px" width="24" height="24" viewBox="0 0 24 24"><rect x="2" y="3" width="20" height="18" fill="#c4c4c4" stroke="#444" stroke-width="2"/><path d="M6 8 h12 M6 12 h12 M6 16 h8" stroke="#444" stroke-width="1.3"/></svg>
<svg style="left:1336px;top:704px" width="24" height="24" viewBox="0 0 24 24"><rect x="2" y="2" width="21" height="21" fill="#fff" stroke="#444" stroke-width="1.6"/><rect x="2" y="2" width="21" height="5" fill="#444"/><path d="M2 12 h21 M2 17.5 h21 M7.5 2 v21 M13 2 v21 M18 2 v21" stroke="#444" stroke-width="1.4"/><path d="M2 2 v21" stroke="#444" stroke-width="4"/></svg>
<svg style="left:1336px;top:738px" width="24" height="24" viewBox="0 0 24 24"><path d="M3 1.5 h20 M11.4 18.4 h11.6" stroke="#444" stroke-width="1.2" fill="none"/><path d="M20 4 v12 M18 6.5 l2 -2.5 l2 2.5 M18 13.5 l2 2.5 l2 -2.5" stroke="#444" stroke-width="1" fill="none"/><circle cx="3" cy="1.8" r="2.6" fill="#1a7fc4"/><circle cx="11.4" cy="18.4" r="2.6" fill="#1a7fc4"/><path d="M26 17 v8 h-8z" fill="#222"/></svg>
<svg style="left:1336px;top:768px" width="24" height="24" viewBox="0 0 24 24"><path d="M2 2 l0 16 l4 -4 l4 5 l5 -5 l-4 -4 h5z" fill="#444"/><circle cx="16" cy="16" r="6.5" fill="#c41e3a"/><path d="M13.5 13.5 l5 5 M18.5 13.5 l-5 5" stroke="#fff" stroke-width="1.8"/></svg>
<div class="a" style="left:1337px;top:800px;width:22px;height:1px;background:#bdbdbd;"></div>
<div class="a" style="left:1370px;top:134px;width:227px;height:693px;background:#e6e5e4;"></div>
<div class="a" style="left:1371px;top:134px;width:226px;height:17px;background:#c3c2c1;"></div>
<div class="t" style="left:1373px;top:133.8px;font-size:12px;color:#4a4a4a;font-weight:normal;letter-spacing:0.25px;">Appearance</div>
<div class="a" style="left:1371px;top:157px;width:226px;height:1px;background:#d0cfce;"></div>
<div class="a" style="left:1371px;top:158px;width:226px;height:36px;background:#e3e2e1;"></div>
<svg style="left:1380px;top:170px" width="7" height="12" viewBox="0 0 7 12"><path d="M6.5 0 v11 l-6 -5.5z" fill="#a8a8a8"/></svg>
<svg style="left:1581px;top:170px" width="7" height="12" viewBox="0 0 7 12"><path d="M0.5 0 v11 l6 -5.5z" fill="#222"/></svg>
<div class="t" style="left:1417.4px;top:167px;font-size:15px;color:#3a3a3a;font-weight:normal;letter-spacing:0.3px;">Layers</div>
<div class="t" style="left:1507.7px;top:167px;font-size:15px;color:#3a3a3a;font-weight:normal;letter-spacing:0.3px;">Objects</div>
<div class="a" style="left:1395px;top:190.5px;width:80px;height:3px;background:#3d86d6;"></div>
<div class="a" style="left:1371px;top:194px;width:226px;height:319px;background:#efeeed;"></div>
<div class="a" style="left:1590px;top:194px;width:1px;height:290px;background:#e0dfde;"></div>
<div class="a" style="left:1387px;top:196.9px;width:18px;height:18px;background:#c83434;"></div>
<svg style="left:1411px;top:197.9px" width="16" height="16" viewBox="0 0 16 16"><circle cx="8" cy="8" r="8" fill="#4a4a4a"/><path d="M2.5 8 q5.5 -6 11 0 q-5.5 6 -11 0z" fill="#fff"/><circle cx="8" cy="8" r="1.8" fill="#4a4a4a"/></svg>
<div class="t" style="left:1432.6px;top:197.6px;font-size:14px;color:#2e2e2e;font-weight:normal;letter-spacing:0.15px;">F.Cu</div>
<div class="a" style="left:1387px;top:218.9px;width:18px;height:18px;background:#7fc87f;"></div>
<svg style="left:1411px;top:219.9px" width="16" height="16" viewBox="0 0 16 16"><circle cx="8" cy="8" r="8" fill="#4a4a4a"/><path d="M2.5 8 q5.5 -6 11 0 q-5.5 6 -11 0z" fill="#fff"/><circle cx="8" cy="8" r="1.8" fill="#4a4a4a"/></svg>
<div class="t" style="left:1432.6px;top:219.6px;font-size:14px;color:#2e2e2e;font-weight:normal;letter-spacing:0.15px;">In1.Cu</div>
<div class="a" style="left:1387px;top:240.9px;width:18px;height:18px;background:#ce7d2c;"></div>
<svg style="left:1411px;top:241.9px" width="16" height="16" viewBox="0 0 16 16"><circle cx="8" cy="8" r="8" fill="#c4c4c4"/><path d="M4 12 l8 -8" stroke="#fff" stroke-width="3"/><path d="M4 12 l8 -8" stroke="#777" stroke-width="1.2"/></svg>
<div class="t" style="left:1432.6px;top:241.6px;font-size:14px;color:#2e2e2e;font-weight:normal;letter-spacing:0.15px;">In2.Cu</div>
<div class="a" style="left:1387px;top:262.9px;width:18px;height:18px;background:#4fcbcb;"></div>
<svg style="left:1411px;top:263.9px" width="16" height="16" viewBox="0 0 16 16"><circle cx="8" cy="8" r="8" fill="#c4c4c4"/><path d="M4 12 l8 -8" stroke="#fff" stroke-width="3"/><path d="M4 12 l8 -8" stroke="#777" stroke-width="1.2"/></svg>
<div class="t" style="left:1432.6px;top:263.59999999999997px;font-size:14px;color:#2e2e2e;font-weight:normal;letter-spacing:0.15px;">In3.Cu</div>
<div class="a" style="left:1387px;top:284.9px;width:18px;height:18px;background:#db628b;"></div>
<svg style="left:1411px;top:285.9px" width="16" height="16" viewBox="0 0 16 16"><circle cx="8" cy="8" r="8" fill="#c4c4c4"/><path d="M4 12 l8 -8" stroke="#fff" stroke-width="3"/><path d="M4 12 l8 -8" stroke="#777" stroke-width="1.2"/></svg>
<div class="t" style="left:1432.6px;top:285.59999999999997px;font-size:14px;color:#2e2e2e;font-weight:normal;letter-spacing:0.15px;">In4.Cu</div>
<div class="a" style="left:1371px;top:304.4px;width:219px;height:22px;background:#ffffff;"></div>
<svg style="left:1375px;top:310.9px" width="7" height="11" viewBox="0 0 7 11"><path d="M0.5 0 v10 l6 -5z" fill="#2a35d0"/></svg>
<div class="a" style="left:1387px;top:306.9px;width:18px;height:18px;background:#4d7fc4;"></div>
<svg style="left:1411px;top:307.9px" width="16" height="16" viewBox="0 0 16 16"><circle cx="8" cy="8" r="8" fill="#4a4a4a"/><path d="M2.5 8 q5.5 -6 11 0 q-5.5 6 -11 0z" fill="#fff"/><circle cx="8" cy="8" r="1.8" fill="#4a4a4a"/></svg>
<div class="t" style="left:1432.6px;top:307.59999999999997px;font-size:14px;color:#2e2e2e;font-weight:normal;letter-spacing:0.15px;">B.Cu</div>
<div class="a" style="left:1387px;top:328.9px;width:18px;height:18px;background:#8e008e;"></div>
<svg style="left:1411px;top:329.9px" width="16" height="16" viewBox="0 0 16 16"><circle cx="8" cy="8" r="8" fill="#4a4a4a"/><path d="M2.5 8 q5.5 -6 11 0 q-5.5 6 -11 0z" fill="#fff"/><circle cx="8" cy="8" r="1.8" fill="#4a4a4a"/></svg>
<div class="t" style="left:1432.6px;top:329.59999999999997px;font-size:14px;color:#2e2e2e;font-weight:normal;letter-spacing:0.15px;">F.Adhesive</div>
<div class="a" style="left:1387px;top:350.9px;width:18px;height:18px;background:#00007f;"></div>
<svg style="left:1411px;top:351.9px" width="16" height="16" viewBox="0 0 16 16"><circle cx="8" cy="8" r="8" fill="#4a4a4a"/><path d="M2.5 8 q5.5 -6 11 0 q-5.5 6 -11 0z" fill="#fff"/><circle cx="8" cy="8" r="1.8" fill="#4a4a4a"/></svg>
<div class="t" style="left:1432.6px;top:351.59999999999997px;font-size:14px;color:#2e2e2e;font-weight:normal;letter-spacing:0.15px;">B.Adhesive</div>
<div class="a" style="left:1387px;top:372.9px;width:18px;height:18px;background:#a48e8e;"></div>
<svg style="left:1411px;top:373.9px" width="16" height="16" viewBox="0 0 16 16"><circle cx="8" cy="8" r="8" fill="#4a4a4a"/><path d="M2.5 8 q5.5 -6 11 0 q-5.5 6 -11 0z" fill="#fff"/><circle cx="8" cy="8" r="1.8" fill="#4a4a4a"/></svg>
<div class="t" style="left:1432.6px;top:373.59999999999997px;font-size:14px;color:#2e2e2e;font-weight:normal;letter-spacing:0.15px;">F.Paste</div>
<div class="a" style="left:1387px;top:394.9px;width:18px;height:18px;background:#00a8a8;"></div>
<svg style="left:1411px;top:395.9px" width="16" height="16" viewBox="0 0 16 16"><circle cx="8" cy="8" r="8" fill="#4a4a4a"/><path d="M2.5 8 q5.5 -6 11 0 q-5.5 6 -11 0z" fill="#fff"/><circle cx="8" cy="8" r="1.8" fill="#4a4a4a"/></svg>
<div class="t" style="left:1432.6px;top:395.59999999999997px;font-size:14px;color:#2e2e2e;font-weight:normal;letter-spacing:0.15px;">B.Paste</div>
<div class="a" style="left:1387px;top:416.9px;width:18px;height:18px;background:#f2eda1;"></div>
<svg style="left:1411px;top:417.9px" width="16" height="16" viewBox="0 0 16 16"><circle cx="8" cy="8" r="8" fill="#4a4a4a"/><path d="M2.5 8 q5.5 -6 11 0 q-5.5 6 -11 0z" fill="#fff"/><circle cx="8" cy="8" r="1.8" fill="#4a4a4a"/></svg>
<div class="t" style="left:1432.6px;top:417.59999999999997px;font-size:14px;color:#2e2e2e;font-weight:normal;letter-spacing:0.15px;">F.Silkscreen</div>
<div class="a" style="left:1387px;top:438.9px;width:18px;height:18px;background:#e8b2a7;"></div>
<svg style="left:1411px;top:439.9px" width="16" height="16" viewBox="0 0 16 16"><circle cx="8" cy="8" r="8" fill="#4a4a4a"/><path d="M2.5 8 q5.5 -6 11 0 q-5.5 6 -11 0z" fill="#fff"/><circle cx="8" cy="8" r="1.8" fill="#4a4a4a"/></svg>
<div class="t" style="left:1432.6px;top:439.59999999999997px;font-size:14px;color:#2e2e2e;font-weight:normal;letter-spacing:0.15px;">B.Silkscreen</div>
<svg style="left:1387px;top:460.9px" width="18" height="18" viewBox="0 0 18 18"><rect width="18" height="18" fill="#4a2a5c"/><rect x="0" y="0" width="6" height="6" fill="#6a3a80"/><rect x="12" y="0" width="6" height="6" fill="#6a3a80"/><rect x="6" y="6" width="6" height="6" fill="#6a3a80"/><rect x="0" y="12" width="6" height="6" fill="#6a3a80"/><rect x="12" y="12" width="6" height="6" fill="#6a3a80"/></svg>
<svg style="left:1411px;top:461.9px" width="16" height="16" viewBox="0 0 16 16"><circle cx="8" cy="8" r="8" fill="#4a4a4a"/><path d="M2.5 8 q5.5 -6 11 0 q-5.5 6 -11 0z" fill="#fff"/><circle cx="8" cy="8" r="1.8" fill="#4a4a4a"/></svg>
<div class="t" style="left:1432.6px;top:461.59999999999997px;font-size:14px;color:#2e2e2e;font-weight:normal;letter-spacing:0.15px;">F.Mask</div>
<div class="a" style="left:1371px;top:484px;width:219px;height:29px;background:#ffffff;"></div>
<svg style="left:1386px;top:494px" width="7" height="12" viewBox="0 0 7 12"><path d="M0.5 0 v11 l6 -5.5z" fill="#111"/></svg>
<div class="t" style="left:1395px;top:492px;font-size:14px;color:#222;font-weight:normal;letter-spacing:0.35px;">Layer Display Options</div>
<div class="t" style="left:1376.6px;top:527.5px;font-size:14px;color:#333;font-weight:normal;letter-spacing:0.15px;">Presets (Ctrl+Tab):</div>
<div class="a" style="left:1377.5px;top:549px;width:212px;height:34px;border:1px solid #d3d2d1;border-radius:5px;background:#f1f0ef"></div>
<div class="t" style="left:1389px;top:557px;font-size:14px;color:#333;font-weight:normal;letter-spacing:0.3px;">---</div>
<svg style="left:1567px;top:563.0px" width="11" height="7" viewBox="0 0 11 7"><path d="M0 0 h11 l-5.5 6z" fill="#1e1e1e"/></svg>
<div class="t" style="left:1376.6px;top:588.7px;font-size:14px;color:#333;font-weight:normal;letter-spacing:0.15px;">Viewports (Shift+Tab):</div>
<div class="a" style="left:1377.5px;top:611px;width:212px;height:34px;border:1px solid #d3d2d1;border-radius:5px;background:#f1f0ef"></div>
<div class="t" style="left:1389px;top:619px;font-size:14px;color:#333;font-weight:normal;letter-spacing:0.3px;">---</div>
<svg style="left:1567px;top:625.0px" width="11" height="7" viewBox="0 0 11 7"><path d="M0 0 h11 l-5.5 6z" fill="#1e1e1e"/></svg>
<div class="a" style="left:1370px;top:656.7px;width:228px;height:16.5px;background:#c3c2c1;"></div>
<div class="t" style="left:1373px;top:657px;font-size:11.5px;color:#4a4a4a;font-weight:normal;letter-spacing:0px;">Selection Filter</div>
<div class="a" style="left:1370px;top:673px;width:227px;height:154px;background:#e6e5e4;"></div>
<div class="a" style="left:1379px;top:683px;width:16.5px;height:16.5px;border-radius:3px;background:#3b86d6"></div>
<svg style="left:1381px;top:685px" width="12" height="12" viewBox="0 0 12 12"><path d="M2.5 6.5 l3 3 l6 -6.5" stroke="#fff" stroke-width="2.2" fill="none"/></svg>
<div class="t" style="left:1400px;top:681.5px;font-size:14.5px;color:#333;font-weight:normal;letter-spacing:0.15px;">All items</div>
<div class="a" style="left:1495.6px;top:683px;width:16.5px;height:16.5px;border-radius:3px;background:#3b86d6"></div>
<svg style="left:1497.6px;top:685px" width="12" height="12" viewBox="0 0 12 12"><path d="M2.5 6.5 l3 3 l6 -6.5" stroke="#fff" stroke-width="2.2" fill="none"/></svg>
<div class="t" style="left:1516.6px;top:681.5px;font-size:14.5px;color:#333;font-weight:normal;letter-spacing:0.15px;">Locked items</div>
<div class="a" style="left:1379px;top:707px;width:16.5px;height:16.5px;border-radius:3px;background:#3b86d6"></div>
<svg style="left:1381px;top:709px" width="12" height="12" viewBox="0 0 12 12"><path d="M2.5 6.5 l3 3 l6 -6.5" stroke="#fff" stroke-width="2.2" fill="none"/></svg>
<div class="t" style="left:1400px;top:705.5px;font-size:14.5px;color:#333;font-weight:normal;letter-spacing:0.15px;">Footprints</div>
<div class="a" style="left:1495.6px;top:707px;width:16.5px;height:16.5px;border-radius:3px;background:#3b86d6"></div>
<svg style="left:1497.6px;top:709px" width="12" height="12" viewBox="0 0 12 12"><path d="M2.5 6.5 l3 3 l6 -6.5" stroke="#fff" stroke-width="2.2" fill="none"/></svg>
<div class="t" style="left:1516.6px;top:705.5px;font-size:14.5px;color:#333;font-weight:normal;letter-spacing:0.15px;">Text</div>
<div class="a" style="left:1379px;top:731px;width:16.5px;height:16.5px;border-radius:3px;background:#3b86d6"></div>
<svg style="left:1381px;top:733px" width="12" height="12" viewBox="0 0 12 12"><path d="M2.5 6.5 l3 3 l6 -6.5" stroke="#fff" stroke-width="2.2" fill="none"/></svg>
<div class="t" style="left:1400px;top:729.5px;font-size:14.5px;color:#333;font-weight:normal;letter-spacing:0.15px;">Tracks</div>
<div class="a" style="left:1495.6px;top:731px;width:16.5px;height:16.5px;border-radius:3px;background:#3b86d6"></div>
<svg style="left:1497.6px;top:733px" width="12" height="12" viewBox="0 0 12 12"><path d="M2.5 6.5 l3 3 l6 -6.5" stroke="#fff" stroke-width="2.2" fill="none"/></svg>
<div class="t" style="left:1516.6px;top:729.5px;font-size:14.5px;color:#333;font-weight:normal;letter-spacing:0.15px;">Vias</div>
<div class="a" style="left:1379px;top:755px;width:16.5px;height:16.5px;border-radius:3px;background:#3b86d6"></div>
<svg style="left:1381px;top:757px" width="12" height="12" viewBox="0 0 12 12"><path d="M2.5 6.5 l3 3 l6 -6.5" stroke="#fff" stroke-width="2.2" fill="none"/></svg>
<div class="t" style="left:1400px;top:753.5px;font-size:14.5px;color:#333;font-weight:normal;letter-spacing:0.15px;">Pads</div>
<div class="a" style="left:1495.6px;top:755px;width:16.5px;height:16.5px;border-radius:3px;background:#3b86d6"></div>
<svg style="left:1497.6px;top:757px" width="12" height="12" viewBox="0 0 12 12"><path d="M2.5 6.5 l3 3 l6 -6.5" stroke="#fff" stroke-width="2.2" fill="none"/></svg>
<div class="t" style="left:1516.6px;top:753.5px;font-size:14.5px;color:#333;font-weight:normal;letter-spacing:0.15px;">Graphics</div>
<div class="a" style="left:1379px;top:779px;width:16.5px;height:16.5px;border-radius:3px;background:#3b86d6"></div>
<svg style="left:1381px;top:781px" width="12" height="12" viewBox="0 0 12 12"><path d="M2.5 6.5 l3 3 l6 -6.5" stroke="#fff" stroke-width="2.2" fill="none"/></svg>
<div class="t" style="left:1400px;top:777.5px;font-size:14.5px;color:#333;font-weight:normal;letter-spacing:0.15px;">Zones</div>
<div class="a" style="left:1495.6px;top:779px;width:16.5px;height:16.5px;border-radius:3px;background:#3b86d6"></div>
<svg style="left:1497.6px;top:781px" width="12" height="12" viewBox="0 0 12 12"><path d="M2.5 6.5 l3 3 l6 -6.5" stroke="#fff" stroke-width="2.2" fill="none"/></svg>
<div class="t" style="left:1516.6px;top:777.5px;font-size:14.5px;color:#333;font-weight:normal;letter-spacing:0.15px;">Rule Areas</div>
<div class="a" style="left:1379px;top:803px;width:16.5px;height:16.5px;border-radius:3px;background:#3b86d6"></div>
<svg style="left:1381px;top:805px" width="12" height="12" viewBox="0 0 12 12"><path d="M2.5 6.5 l3 3 l6 -6.5" stroke="#fff" stroke-width="2.2" fill="none"/></svg>
<div class="t" style="left:1400px;top:801.5px;font-size:14.5px;color:#333;font-weight:normal;letter-spacing:0.15px;">Dimensions</div>
<div class="a" style="left:1495.6px;top:803px;width:16.5px;height:16.5px;border-radius:3px;background:#3b86d6"></div>
<svg style="left:1497.6px;top:805px" width="12" height="12" viewBox="0 0 12 12"><path d="M2.5 6.5 l3 3 l6 -6.5" stroke="#fff" stroke-width="2.2" fill="none"/></svg>
<div class="t" style="left:1516.6px;top:801.5px;font-size:14.5px;color:#333;font-weight:normal;letter-spacing:0.15px;">Other items</div>
<div class="a" style="left:1597px;top:134px;width:3px;height:693px;background:#e6e5e4;"></div>
<div class="a" style="left:345px;top:634px;width:985px;height:193px;background:#e6e5e4;"></div>
<div class="a" style="left:345px;top:640px;width:985px;height:16.5px;background:#c3c2c1;"></div>
<div class="t" style="left:348.4px;top:639px;font-size:12px;color:#4a4a4a;font-weight:normal;letter-spacing:0.25px;">Search</div>
<div class="a" style="left:1315px;top:642.5px;width:11px;height:10px;border:1.3px solid #222;border-radius:1px"></div>
<svg style="left:1317px;top:644.5px" width="7" height="7" viewBox="0 0 7 7"><path d="M0.5 0.5 l6 6 M6.5 0.5 l-6 6" stroke="#222" stroke-width="1.6"/></svg>
<div class="a" style="left:351px;top:663px;width:34.5px;height:33px;border:1px solid #d3d2d1;border-radius:5px;background:#f1f0ef"></div>
<svg style="left:359px;top:670px" width="18" height="19" viewBox="0 0 18 19"><path d="M9 0.5 l1.6 2.6 l3 -0.8 l0.8 3 l2.6 1.6 l-1.3 2.6 l1.3 2.6 l-2.6 1.6 l-0.8 3 l-3 -0.8 l-1.6 2.6 l-1.6 -2.6 l-3 0.8 l-0.8 -3 l-2.6 -1.6 l1.3 -2.6 l-1.3 -2.6 l2.6 -1.6 l0.8 -3 l3 0.8z" fill="#4a4a4a"/><circle cx="9" cy="9.3" r="2.8" fill="#f1f0ef"/></svg>
<div class="a" style="left:396px;top:663px;width:929px;height:33px;border:1px solid #d8d7d6;border-radius:5px;background:#ffffff"></div>
<svg style="left:404px;top:671px" width="18" height="18" viewBox="0 0 18 18"><circle cx="7" cy="7" r="5.5" fill="none" stroke="#333" stroke-width="1.8"/><path d="M11 11 l5 5" stroke="#333" stroke-width="2"/></svg>
<div class="t" style="left:427.5px;top:670.5px;font-size:15px;color:#2b2b2b;font-weight:normal;letter-spacing:0.3px;">U12</div>
<svg style="left:1300px;top:672px" width="18" height="14" viewBox="0 0 18 14"><path d="M0 6.5 l5 -6 h12 v12 h-12z" fill="#444"/><path d="M8 3.5 l5 5 M13 3.5 l-5 5" stroke="#fff" stroke-width="1.8"/></svg>
<div class="a" style="left:345.6px;top:702px;width:984.4px;height:36px;background:#e3e2e1;"></div>
<div class="t" style="left:366.6px;top:711.8px;font-size:15px;color:#3a3a3a;font-weight:normal;letter-spacing:0.3px;">Footprints</div>
<div class="t" style="left:471px;top:711.8px;font-size:15px;color:#3a3a3a;font-weight:normal;letter-spacing:0.3px;">Zones</div>
<div class="t" style="left:546px;top:711.8px;font-size:15px;color:#3a3a3a;font-weight:normal;letter-spacing:0.3px;">Nets</div>
<div class="t" style="left:612.5px;top:711.8px;font-size:15px;color:#3a3a3a;font-weight:normal;letter-spacing:0.3px;">Ratsnest</div>
<div class="t" style="left:708px;top:711.8px;font-size:15px;color:#3a3a3a;font-weight:normal;letter-spacing:0.3px;">Text</div>
<div class="a" style="left:354px;top:734.7px;width:97px;height:3.1px;background:#3d86d6;"></div>
<div class="a" style="left:345.6px;top:737.8px;width:984.4px;height:85.5px;background:#ffffff;"></div>
<div class="a" style="left:345.6px;top:763.5px;width:984.4px;height:1px;background:#e0e0e0;"></div>
<div class="a" style="left:435.3px;top:738px;width:1px;height:25.5px;background:#dcdcdc;"></div>
<div class="a" style="left:795.3px;top:738px;width:1px;height:25.5px;background:#dcdcdc;"></div>
<div class="a" style="left:930.6px;top:738px;width:1px;height:25.5px;background:#dcdcdc;"></div>
<div class="a" style="left:1065.6px;top:738px;width:1px;height:25.5px;background:#dcdcdc;"></div>
<div class="a" style="left:1200.3px;top:738px;width:1px;height:25.5px;background:#dcdcdc;"></div>
<div class="t" style="left:352.5px;top:742.4px;font-size:15px;color:#222;font-weight:normal;letter-spacing:0.3px;">Reference</div>
<div class="t" style="left:442.5px;top:742.4px;font-size:15px;color:#222;font-weight:normal;letter-spacing:0.3px;">Value</div>
<div class="t" style="left:843px;top:742.4px;font-size:15px;color:#222;font-weight:normal;letter-spacing:0.3px;">Layer</div>
<div class="t" style="left:991.5px;top:742.4px;font-size:15px;color:#222;font-weight:normal;letter-spacing:0.3px;">X</div>
<div class="t" style="left:1126.5px;top:742.4px;font-size:15px;color:#222;font-weight:normal;letter-spacing:0.3px;">Y</div>
<div class="a" style="left:346px;top:765px;width:854.3px;height:26.5px;background:#3b84d8;border:1px dotted #9cc4ef"></div>
<div class="t" style="left:348.75px;top:769.5px;font-size:15px;color:#ffffff;font-weight:normal;letter-spacing:0.3px;">U12</div>
<div class="t" style="left:438.4px;top:769.5px;font-size:15px;color:#ffffff;font-weight:normal;letter-spacing:0.3px;">ESD224DQAR</div>
<div class="t" style="left:845.6px;top:769.5px;font-size:15px;color:#ffffff;font-weight:normal;letter-spacing:0.3px;">B.Cu</div>
<div class="t" style="left:951.6px;top:769.5px;font-size:15px;color:#ffffff;font-weight:normal;letter-spacing:0.3px;">33.0000 mm</div>
<div class="t" style="left:1083px;top:769.5px;font-size:15px;color:#ffffff;font-weight:normal;letter-spacing:0.3px;">119.0000 mm</div>
<div class="a" style="left:345px;top:823.3px;width:985px;height:4px;background:#e6e5e4;"></div>
<div class="a" style="left:3px;top:828px;width:1597px;height:44px;background:#ebeae9;"></div>
<div class="a" style="left:3px;top:872px;width:1597px;height:28px;background:#f0efee;"></div>
<div class="t" style="left:20.3px;top:831.4px;font-size:15px;color:#2b2b2b;font-weight:normal;letter-spacing:0.3px;">Footprint</div>
<div class="t" style="left:20.3px;top:853.3px;font-size:15px;color:#2b2b2b;font-weight:normal;letter-spacing:0.3px;">R101</div>
<div class="t" style="left:124.4px;top:831.4px;font-size:15px;color:#2b2b2b;font-weight:normal;letter-spacing:0.3px;">Text</div>
<div class="t" style="left:124.4px;top:853.3px;font-size:15px;color:#2b2b2b;font-weight:normal;letter-spacing:0.3px;">R101</div>
<div class="t" style="left:199.4px;top:831.4px;font-size:15px;color:#2b2b2b;font-weight:normal;letter-spacing:0.3px;">Type</div>
<div class="t" style="left:199.4px;top:853.3px;font-size:15px;color:#2b2b2b;font-weight:normal;letter-spacing:0.3px;">Reference</div>
<div class="t" style="left:310.3px;top:831.4px;font-size:15px;color:#2b2b2b;font-weight:normal;letter-spacing:0.3px;">Display</div>
<div class="t" style="left:310.3px;top:853.3px;font-size:15px;color:#2b2b2b;font-weight:normal;letter-spacing:0.3px;">Yes</div>
<div class="t" style="left:400.6px;top:831.4px;font-size:15px;color:#2b2b2b;font-weight:normal;letter-spacing:0.3px;">Layer</div>
<div class="t" style="left:400.6px;top:853.3px;font-size:15px;color:#2b2b2b;font-weight:normal;letter-spacing:0.3px;">B.Silkscreen</div>
<div class="t" style="left:523.4px;top:831.4px;font-size:15px;color:#2b2b2b;font-weight:normal;letter-spacing:0.3px;">Mirror</div>
<div class="t" style="left:523.4px;top:853.3px;font-size:15px;color:#2b2b2b;font-weight:normal;letter-spacing:0.3px;">Yes</div>
<div class="t" style="left:606.25px;top:831.4px;font-size:15px;color:#2b2b2b;font-weight:normal;letter-spacing:0.3px;">Angle</div>
<div class="t" style="left:606.25px;top:853.3px;font-size:15px;color:#2b2b2b;font-weight:normal;letter-spacing:0.3px;">0</div>
<div class="t" style="left:685.3px;top:831.4px;font-size:15px;color:#2b2b2b;font-weight:normal;letter-spacing:0.3px;">Font</div>
<div class="t" style="left:685.3px;top:853.3px;font-size:15px;color:#2b2b2b;font-weight:normal;letter-spacing:0.3px;">Default</div>
<div class="t" style="left:776.6px;top:831.4px;font-size:15px;color:#2b2b2b;font-weight:normal;letter-spacing:0.3px;">Thickness</div>
<div class="t" style="left:776.6px;top:853.3px;font-size:15px;color:#2b2b2b;font-weight:normal;letter-spacing:0.3px;">0.1000 mm</div>
<div class="t" style="left:895.3px;top:831.4px;font-size:15px;color:#2b2b2b;font-weight:normal;letter-spacing:0.3px;">Width</div>
<div class="t" style="left:895.3px;top:853.3px;font-size:15px;color:#2b2b2b;font-weight:normal;letter-spacing:0.3px;">0.7500 mm</div>
<div class="t" style="left:1014.4px;top:831.4px;font-size:15px;color:#2b2b2b;font-weight:normal;letter-spacing:0.3px;">Height</div>
<div class="t" style="left:1014.4px;top:853.3px;font-size:15px;color:#2b2b2b;font-weight:normal;letter-spacing:0.3px;">0.7500 mm</div>
<div class="t" style="left:209.4px;top:878.3px;font-size:15px;color:#333;font-weight:normal;letter-spacing:0.3px;">Z 3.51</div>
<div class="t" style="left:304px;top:878.3px;font-size:15px;color:#333;font-weight:normal;letter-spacing:0.3px;">X 113.5000</div>
<div class="t" style="left:392.2px;top:878.3px;font-size:15px;color:#333;font-weight:normal;letter-spacing:0.3px;">Y 99.0000</div>
<div class="t" style="left:518px;top:878.3px;font-size:15px;color:#333;font-weight:normal;letter-spacing:0.3px;">dx 113.5000</div>
<div class="t" style="left:614px;top:878.3px;font-size:15px;color:#333;font-weight:normal;letter-spacing:0.3px;">dy 99.0000</div>
<div class="t" style="left:701.6px;top:878.3px;font-size:15px;color:#333;font-weight:normal;letter-spacing:0.3px;">dist 150.6096</div>
<div class="t" style="left:862.5px;top:878.3px;font-size:15px;color:#333;font-weight:normal;letter-spacing:0.3px;">grid 0.5000</div>
<div class="t" style="left:1108px;top:878.3px;font-size:15px;color:#333;font-weight:normal;letter-spacing:0.3px;">mm</div>
<svg style="left:1572px;top:874px" width="25" height="25" viewBox="0 0 25 25"><path d="M24 2 l-22 22 M24 8 l-16 16 M24 14 l-10 10 M24 20 l-4 4" stroke="#9a9a9a" stroke-width="1.1"/></svg>
<svg style="left:345px;top:134px" width="985" height="500" viewBox="345 134 985 500"><rect x="345" y="134" width="985" height="500" fill="#3e7050"/><path d="M1110 252 H1330 V634 H1110z" fill="#8a4f42"/><rect x="1146" y="287" width="133" height="52" fill="#8e4a40"/><circle cx="347.0" cy="143.0" r="2" fill="#c9c46a"/><circle cx="347.0" cy="174.4" r="2" fill="#c9c46a"/><circle cx="347.0" cy="205.9" r="2" fill="#c9c46a"/><circle cx="347.0" cy="237.3" r="2" fill="#c9c46a"/><circle cx="347.0" cy="268.8" r="2" fill="#c9c46a"/><circle cx="347.0" cy="300.2" r="2" fill="#c9c46a"/><circle cx="347.0" cy="331.7" r="2" fill="#c9c46a"/><circle cx="347.0" cy="363.1" r="2" fill="#c9c46a"/><circle cx="347.0" cy="394.6" r="2" fill="#c9c46a"/><circle cx="347.0" cy="426.1" r="2" fill="#c9c46a"/><circle cx="347.0" cy="457.5" r="2" fill="#c9c46a"/><circle cx="347.0" cy="488.9" r="2" fill="#c9c46a"/><circle cx="347.0" cy="520.4" r="2" fill="#c9c46a"/><circle cx="347.0" cy="551.8" r="2" fill="#c9c46a"/><circle cx="347.0" cy="583.3" r="2" fill="#c9c46a"/><circle cx="347.0" cy="614.8" r="2" fill="#c9c46a"/><circle cx="378.4" cy="143.0" r="2" fill="#c9c46a"/><circle cx="378.4" cy="174.4" r="2" fill="#c9c46a"/><circle cx="378.4" cy="205.9" r="2" fill="#c9c46a"/><circle cx="378.4" cy="237.3" r="2" fill="#c9c46a"/><circle cx="378.4" cy="268.8" r="2" fill="#c9c46a"/><circle cx="378.4" cy="300.2" r="2" fill="#c9c46a"/><circle cx="378.4" cy="331.7" r="2" fill="#c9c46a"/><circle cx="378.4" cy="363.1" r="2" fill="#c9c46a"/><circle cx="378.4" cy="394.6" r="2" fill="#c9c46a"/><circle cx="378.4" cy="583.3" r="2" fill="#c9c46a"/><circle cx="378.4" cy="614.8" r="2" fill="#c9c46a"/><circle cx="409.9" cy="143.0" r="2" fill="#c9c46a"/><circle cx="409.9" cy="174.4" r="2" fill="#c9c46a"/><circle cx="409.9" cy="205.9" r="2" fill="#c9c46a"/><circle cx="409.9" cy="237.3" r="2" fill="#c9c46a"/><circle cx="409.9" cy="268.8" r="2" fill="#c9c46a"/><circle cx="409.9" cy="300.2" r="2" fill="#c9c46a"/><circle cx="409.9" cy="331.7" r="2" fill="#c9c46a"/><circle cx="409.9" cy="363.1" r="2" fill="#c9c46a"/><circle cx="409.9" cy="394.6" r="2" fill="#c9c46a"/><circle cx="441.4" cy="143.0" r="2" fill="#c9c46a"/><circle cx="441.4" cy="174.4" r="2" fill="#c9c46a"/><circle cx="441.4" cy="205.9" r="2" fill="#c9c46a"/><circle cx="441.4" cy="237.3" r="2" fill="#c9c46a"/><circle cx="441.4" cy="268.8" r="2" fill="#c9c46a"/><circle cx="441.4" cy="300.2" r="2" fill="#c9c46a"/><circle cx="441.4" cy="331.7" r="2" fill="#c9c46a"/><circle cx="441.4" cy="363.1" r="2" fill="#c9c46a"/><circle cx="441.4" cy="394.6" r="2" fill="#c9c46a"/><circle cx="472.8" cy="143.0" r="2" fill="#c9c46a"/><circle cx="472.8" cy="174.4" r="2" fill="#c9c46a"/><circle cx="472.8" cy="205.9" r="2" fill="#c9c46a"/><circle cx="472.8" cy="237.3" r="2" fill="#c9c46a"/><circle cx="472.8" cy="268.8" r="2" fill="#c9c46a"/><circle cx="472.8" cy="300.2" r="2" fill="#c9c46a"/><circle cx="472.8" cy="331.7" r="2" fill="#c9c46a"/><circle cx="472.8" cy="363.1" r="2" fill="#c9c46a"/><circle cx="472.8" cy="394.6" r="2" fill="#c9c46a"/><circle cx="504.2" cy="143.0" r="2" fill="#c9c46a"/><circle cx="504.2" cy="174.4" r="2" fill="#c9c46a"/><circle cx="504.2" cy="205.9" r="2" fill="#c9c46a"/><circle cx="504.2" cy="237.3" r="2" fill="#c9c46a"/><circle cx="504.2" cy="268.8" r="2" fill="#c9c46a"/><circle cx="504.2" cy="300.2" r="2" fill="#c9c46a"/><circle cx="504.2" cy="331.7" r="2" fill="#c9c46a"/><circle cx="504.2" cy="363.1" r="2" fill="#c9c46a"/><circle cx="504.2" cy="394.6" r="2" fill="#c9c46a"/><circle cx="535.7" cy="143.0" r="2" fill="#c9c46a"/><circle cx="535.7" cy="174.4" r="2" fill="#c9c46a"/><circle cx="535.7" cy="205.9" r="2" fill="#c9c46a"/><circle cx="535.7" cy="237.3" r="2" fill="#c9c46a"/><circle cx="535.7" cy="268.8" r="2" fill="#c9c46a"/><circle cx="535.7" cy="300.2" r="2" fill="#c9c46a"/><circle cx="535.7" cy="331.7" r="2" fill="#c9c46a"/><circle cx="535.7" cy="363.1" r="2" fill="#c9c46a"/><circle cx="535.7" cy="394.6" r="2" fill="#c9c46a"/><circle cx="567.1" cy="143.0" r="2" fill="#c9c46a"/><circle cx="567.1" cy="174.4" r="2" fill="#c9c46a"/><circle cx="567.1" cy="205.9" r="2" fill="#c9c46a"/><circle cx="567.1" cy="237.3" r="2" fill="#c9c46a"/><circle cx="567.1" cy="268.8" r="2" fill="#c9c46a"/><circle cx="567.1" cy="300.2" r="2" fill="#c9c46a"/><circle cx="567.1" cy="331.7" r="2" fill="#c9c46a"/><circle cx="567.1" cy="363.1" r="2" fill="#c9c46a"/><circle cx="567.1" cy="394.6" r="2" fill="#c9c46a"/><circle cx="567.1" cy="551.8" r="2" fill="#c9c46a"/><circle cx="598.6" cy="143.0" r="2" fill="#c9c46a"/><circle cx="598.6" cy="174.4" r="2" fill="#c9c46a"/><circle cx="598.6" cy="205.9" r="2" fill="#c9c46a"/><circle cx="598.6" cy="237.3" r="2" fill="#c9c46a"/><circle cx="598.6" cy="268.8" r="2" fill="#c9c46a"/><circle cx="598.6" cy="300.2" r="2" fill="#c9c46a"/><circle cx="598.6" cy="331.7" r="2" fill="#c9c46a"/><circle cx="598.6" cy="363.1" r="2" fill="#c9c46a"/><circle cx="598.6" cy="394.6" r="2" fill="#c9c46a"/><circle cx="598.6" cy="551.8" r="2" fill="#c9c46a"/><circle cx="630.0" cy="143.0" r="2" fill="#c9c46a"/><circle cx="630.0" cy="174.4" r="2" fill="#c9c46a"/><circle cx="630.0" cy="205.9" r="2" fill="#c9c46a"/><circle cx="630.0" cy="237.3" r="2" fill="#c9c46a"/><circle cx="630.0" cy="268.8" r="2" fill="#c9c46a"/><circle cx="630.0" cy="300.2" r="2" fill="#c9c46a"/><circle cx="630.0" cy="331.7" r="2" fill="#c9c46a"/><circle cx="630.0" cy="363.1" r="2" fill="#c9c46a"/><circle cx="630.0" cy="394.6" r="2" fill="#c9c46a"/><circle cx="630.0" cy="551.8" r="2" fill="#c9c46a"/><circle cx="661.5" cy="143.0" r="2" fill="#c9c46a"/><circle cx="661.5" cy="174.4" r="2" fill="#c9c46a"/><circle cx="661.5" cy="205.9" r="2" fill="#c9c46a"/><circle cx="693.0" cy="143.0" r="2" fill="#c9c46a"/><circle cx="693.0" cy="174.4" r="2" fill="#c9c46a"/><circle cx="693.0" cy="205.9" r="2" fill="#c9c46a"/><circle cx="724.4" cy="143.0" r="2" fill="#c9c46a"/><circle cx="724.4" cy="174.4" r="2" fill="#c9c46a"/><circle cx="724.4" cy="205.9" r="2" fill="#c9c46a"/><circle cx="755.8" cy="143.0" r="2" fill="#c9c46a"/><circle cx="755.8" cy="174.4" r="2" fill="#c9c46a"/><circle cx="755.8" cy="205.9" r="2" fill="#c9c46a"/><circle cx="787.3" cy="143.0" r="2" fill="#c9c46a"/><circle cx="787.3" cy="174.4" r="2" fill="#c9c46a"/><circle cx="787.3" cy="205.9" r="2" fill="#c9c46a"/><circle cx="818.8" cy="143.0" r="2" fill="#c9c46a"/><circle cx="818.8" cy="174.4" r="2" fill="#c9c46a"/><circle cx="818.8" cy="205.9" r="2" fill="#c9c46a"/><circle cx="850.2" cy="143.0" r="2" fill="#c9c46a"/><circle cx="850.2" cy="174.4" r="2" fill="#c9c46a"/><circle cx="850.2" cy="205.9" r="2" fill="#c9c46a"/><circle cx="881.6" cy="143.0" r="2" fill="#c9c46a"/><circle cx="881.6" cy="174.4" r="2" fill="#c9c46a"/><circle cx="881.6" cy="205.9" r="2" fill="#c9c46a"/><circle cx="913.1" cy="143.0" r="2" fill="#c9c46a"/><circle cx="913.1" cy="174.4" r="2" fill="#c9c46a"/><circle cx="913.1" cy="205.9" r="2" fill="#c9c46a"/><circle cx="944.5" cy="143.0" r="2" fill="#c9c46a"/><circle cx="944.5" cy="174.4" r="2" fill="#c9c46a"/><circle cx="944.5" cy="205.9" r="2" fill="#c9c46a"/><circle cx="976.0" cy="143.0" r="2" fill="#c9c46a"/><circle cx="976.0" cy="174.4" r="2" fill="#c9c46a"/><circle cx="976.0" cy="205.9" r="2" fill="#c9c46a"/><circle cx="1007.4" cy="143.0" r="2" fill="#c9c46a"/><circle cx="1007.4" cy="174.4" r="2" fill="#c9c46a"/><circle cx="1007.4" cy="205.9" r="2" fill="#c9c46a"/><circle cx="1007.4" cy="237.3" r="2" fill="#c9c46a"/><circle cx="1007.4" cy="268.8" r="2" fill="#c9c46a"/><circle cx="1007.4" cy="300.2" r="2" fill="#c9c46a"/><circle cx="1007.4" cy="331.7" r="2" fill="#c9c46a"/><circle cx="1038.9" cy="143.0" r="2" fill="#c9c46a"/><circle cx="1038.9" cy="174.4" r="2" fill="#c9c46a"/><circle cx="1038.9" cy="205.9" r="2" fill="#c9c46a"/><circle cx="1038.9" cy="237.3" r="2" fill="#c9c46a"/><circle cx="1038.9" cy="268.8" r="2" fill="#c9c46a"/><circle cx="1038.9" cy="300.2" r="2" fill="#c9c46a"/><circle cx="1038.9" cy="331.7" r="2" fill="#c9c46a"/><circle cx="1070.3" cy="143.0" r="2" fill="#c9c46a"/><circle cx="1070.3" cy="174.4" r="2" fill="#c9c46a"/><circle cx="1070.3" cy="205.9" r="2" fill="#c9c46a"/><circle cx="1070.3" cy="237.3" r="2" fill="#c9c46a"/><circle cx="1070.3" cy="268.8" r="2" fill="#c9c46a"/><circle cx="1070.3" cy="300.2" r="2" fill="#c9c46a"/><circle cx="1070.3" cy="331.7" r="2" fill="#c9c46a"/><circle cx="1101.8" cy="143.0" r="2" fill="#c9c46a"/><circle cx="1101.8" cy="174.4" r="2" fill="#c9c46a"/><circle cx="1101.8" cy="205.9" r="2" fill="#c9c46a"/><circle cx="1101.8" cy="237.3" r="2" fill="#c9c46a"/><circle cx="1101.8" cy="268.8" r="2" fill="#c9c46a"/><circle cx="1101.8" cy="300.2" r="2" fill="#c9c46a"/><circle cx="1101.8" cy="331.7" r="2" fill="#c9c46a"/><circle cx="1133.2" cy="143.0" r="2" fill="#c9c46a"/><circle cx="1133.2" cy="174.4" r="2" fill="#c9c46a"/><circle cx="1133.2" cy="205.9" r="2" fill="#c9c46a"/><circle cx="1133.2" cy="237.3" r="2" fill="#c9c46a"/><circle cx="1164.7" cy="143.0" r="2" fill="#c9c46a"/><circle cx="1164.7" cy="174.4" r="2" fill="#c9c46a"/><circle cx="1164.7" cy="205.9" r="2" fill="#c9c46a"/><circle cx="1164.7" cy="237.3" r="2" fill="#c9c46a"/><circle cx="1196.2" cy="143.0" r="2" fill="#c9c46a"/><circle cx="1196.2" cy="174.4" r="2" fill="#c9c46a"/><circle cx="1196.2" cy="205.9" r="2" fill="#c9c46a"/><circle cx="1196.2" cy="237.3" r="2" fill="#c9c46a"/><circle cx="1227.6" cy="143.0" r="2" fill="#c9c46a"/><circle cx="1227.6" cy="174.4" r="2" fill="#c9c46a"/><circle cx="1227.6" cy="205.9" r="2" fill="#c9c46a"/><circle cx="1227.6" cy="237.3" r="2" fill="#c9c46a"/><circle cx="1259.0" cy="143.0" r="2" fill="#c9c46a"/><circle cx="1259.0" cy="174.4" r="2" fill="#c9c46a"/><circle cx="1259.0" cy="205.9" r="2" fill="#c9c46a"/><circle cx="1259.0" cy="237.3" r="2" fill="#c9c46a"/><circle cx="1290.5" cy="143.0" r="2" fill="#c9c46a"/><circle cx="1290.5" cy="174.4" r="2" fill="#c9c46a"/><circle cx="1290.5" cy="205.9" r="2" fill="#c9c46a"/><circle cx="1290.5" cy="237.3" r="2" fill="#c9c46a"/><circle cx="1321.9" cy="143.0" r="2" fill="#c9c46a"/><circle cx="1321.9" cy="174.4" r="2" fill="#c9c46a"/><circle cx="1321.9" cy="205.9" r="2" fill="#c9c46a"/><circle cx="1321.9" cy="237.3" r="2" fill="#c9c46a"/><rect x="1082.3" y="142.6" width="63.3" height="66" fill="#8a4f42" stroke="#e8c8b8" stroke-width="1"/><rect x="1084.0" y="145" width="59" height="58.5" fill="#c86060"/><rect x="1092.5" y="152" width="43" height="43.7" fill="#8a4f42"/><rect x="1103.0" y="195" width="21.5" height="8.5" fill="#8a4f42"/><circle cx="1113.6" cy="173.8" r="15.6" fill="#3e7050"/><path d="M1108.6 173.8 h10 M1113.6 168.8 v10" stroke="#b8a0b0" stroke-width="0.7"/><circle cx="1088.6" cy="148.8" r="1.7" fill="#e9a25a"/><circle cx="1101.0" cy="148.8" r="1.7" fill="#e9a25a"/><circle cx="1127.0" cy="148.8" r="1.7" fill="#e9a25a"/><circle cx="1139.0" cy="148.8" r="1.7" fill="#e9a25a"/><circle cx="1088.6" cy="162" r="1.7" fill="#e9a25a"/><circle cx="1139.0" cy="162" r="1.7" fill="#e9a25a"/><circle cx="1088.6" cy="174" r="1.7" fill="#e9a25a"/><circle cx="1139.0" cy="174" r="1.7" fill="#e9a25a"/><circle cx="1088.6" cy="187" r="1.7" fill="#e9a25a"/><circle cx="1139.0" cy="187" r="1.7" fill="#e9a25a"/><circle cx="1088.6" cy="199.6" r="1.7" fill="#e9a25a"/><circle cx="1101.0" cy="199.6" r="1.7" fill="#e9a25a"/><circle cx="1127.0" cy="199.6" r="1.7" fill="#e9a25a"/><circle cx="1139.0" cy="199.6" r="1.7" fill="#e9a25a"/><path d="M1104.6 190 v19 M1122.6 190 v19" stroke="#e8e0d0" stroke-width="0.8"/><rect x="1112.1" y="193" width="3" height="32" fill="#d42d2d"/><circle cx="1101.6" cy="212" r="1.8" fill="#e9a25a"/><circle cx="1125.6" cy="212" r="1.8" fill="#e9a25a"/><rect x="1164.4" y="142.6" width="63.3" height="66" fill="#8a4f42" stroke="#e8c8b8" stroke-width="1"/><rect x="1166.1000000000001" y="145" width="59" height="58.5" fill="#c86060"/><rect x="1174.6000000000001" y="152" width="43" height="43.7" fill="#8a4f42"/><rect x="1185.1000000000001" y="195" width="21.5" height="8.5" fill="#8a4f42"/><circle cx="1195.7" cy="173.8" r="15.6" fill="#3e7050"/><path d="M1190.7 173.8 h10 M1195.7 168.8 v10" stroke="#b8a0b0" stroke-width="0.7"/><circle cx="1170.7" cy="148.8" r="1.7" fill="#e9a25a"/><circle cx="1183.1000000000001" cy="148.8" r="1.7" fill="#e9a25a"/><circle cx="1209.1000000000001" cy="148.8" r="1.7" fill="#e9a25a"/><circle cx="1221.1000000000001" cy="148.8" r="1.7" fill="#e9a25a"/><circle cx="1170.7" cy="162" r="1.7" fill="#e9a25a"/><circle cx="1221.1000000000001" cy="162" r="1.7" fill="#e9a25a"/><circle cx="1170.7" cy="174" r="1.7" fill="#e9a25a"/><circle cx="1221.1000000000001" cy="174" r="1.7" fill="#e9a25a"/><circle cx="1170.7" cy="187" r="1.7" fill="#e9a25a"/><circle cx="1221.1000000000001" cy="187" r="1.7" fill="#e9a25a"/><circle cx="1170.7" cy="199.6" r="1.7" fill="#e9a25a"/><circle cx="1183.1000000000001" cy="199.6" r="1.7" fill="#e9a25a"/><circle cx="1209.1000000000001" cy="199.6" r="1.7" fill="#e9a25a"/><circle cx="1221.1000000000001" cy="199.6" r="1.7" fill="#e9a25a"/><path d="M1186.7 190 v19 M1204.7 190 v19" stroke="#e8e0d0" stroke-width="0.8"/><rect x="1194.2" y="193" width="3" height="32" fill="#d42d2d"/><circle cx="1183.7" cy="212" r="1.8" fill="#e9a25a"/><circle cx="1207.7" cy="212" r="1.8" fill="#e9a25a"/><rect x="1145.6" y="142.6" width="18.8" height="66" fill="#8a4f42"/><text x="1083" y="139.5" font-family="Liberation Mono" font-size="14.4" fill="#eeeeb0" textLength="61" lengthAdjust="spacingAndGlyphs">RECCEN0</text><text x="1165" y="139.5" font-family="Liberation Mono" font-size="14.4" fill="#eeeeb0" textLength="61" lengthAdjust="spacingAndGlyphs">RECCEN1</text><path d="M1113.6 212 V225 L1106 232 H1000 L985 247 H976" stroke="#b0443a" stroke-width="2" fill="none"/><path d="M1195.7 212 V236 L1186 246 H1010 L995 258 H976" stroke="#b0443a" stroke-width="2" fill="none"/><circle cx="1019" cy="194" r="24.5" fill="#3a7ec8"/><circle cx="1019" cy="194" r="24" fill="none" stroke="#44d0e0" stroke-width="0.8"/><circle cx="1019" cy="194" r="20.3" fill="#1ac4d2"/><circle cx="593" cy="619" r="23.5" fill="#3a7ec8"/><circle cx="593" cy="619" r="23" fill="none" stroke="#44d0e0" stroke-width="0.8"/><circle cx="593" cy="619" r="19.5" fill="#1ac4d2"/><circle cx="1337" cy="162" r="14" fill="#4a80c0"/><circle cx="1337" cy="162" r="11" fill="#0a0a14"/><circle cx="1337" cy="231" r="14" fill="#4a80c0"/><circle cx="1337" cy="231" r="11" fill="#0a0a14"/><circle cx="336" cy="612" r="22" fill="#5a70b8" stroke="#8060a8" stroke-width="3"/><rect x="368" y="144" width="10.600000000000023" height="22" fill="#d42d2d"/><circle cx="373.3" cy="149" r="1.7" fill="#e9a25a"/><circle cx="373.3" cy="156" r="1.7" fill="#e9a25a"/><circle cx="373.3" cy="162" r="1.7" fill="#e9a25a"/><rect x="391" y="144" width="11" height="22" fill="#d42d2d"/><circle cx="396.5" cy="149" r="1.7" fill="#e9a25a"/><circle cx="396.5" cy="156" r="1.7" fill="#e9a25a"/><circle cx="396.5" cy="162" r="1.7" fill="#e9a25a"/><rect x="392" y="166" width="11" height="25.5" fill="#d42d2d"/><path d="M397.5 170 V187.5" stroke="#f08080" stroke-width="0.6" stroke-dasharray="1.5 2"/><rect x="353" y="170" width="11.699999999999989" height="24" fill="#d42d2d"/><path d="M358.85 174 V190" stroke="#f08080" stroke-width="0.6" stroke-dasharray="1.5 2"/><rect x="354" y="194" width="10" height="22" fill="#d42d2d"/><circle cx="359.0" cy="199.6" r="1.7" fill="#e9a25a"/><circle cx="359.0" cy="206" r="1.7" fill="#e9a25a"/><circle cx="359.0" cy="212.4" r="1.7" fill="#e9a25a"/><rect x="375" y="195" width="11" height="21" fill="#d42d2d"/><circle cx="380.5" cy="199.6" r="1.7" fill="#e9a25a"/><circle cx="380.5" cy="206" r="1.7" fill="#e9a25a"/><circle cx="380.5" cy="212.4" r="1.7" fill="#e9a25a"/><rect x="422" y="134" width="12" height="15.5" fill="#d42d2d"/><circle cx="428.0" cy="140" r="1.7" fill="#e9a25a"/><circle cx="428.0" cy="145.7" r="1.7" fill="#e9a25a"/><rect x="422" y="155" width="12" height="20" fill="#d42d2d"/><path d="M428.0 159 V171" stroke="#f08080" stroke-width="0.6" stroke-dasharray="1.5 2"/><rect x="422" y="181" width="12" height="37" fill="#d42d2d"/><circle cx="428.0" cy="183.6" r="1.7" fill="#e9a25a"/><circle cx="428.0" cy="190" r="1.7" fill="#e9a25a"/><circle cx="428.0" cy="196" r="1.7" fill="#e9a25a"/><circle cx="428.0" cy="202" r="1.7" fill="#e9a25a"/><circle cx="428.0" cy="208.6" r="1.7" fill="#e9a25a"/><circle cx="428.0" cy="215" r="1.7" fill="#e9a25a"/><rect x="460.6" y="134" width="13.399999999999977" height="41" fill="#d42d2d"/><circle cx="467.3" cy="139" r="1.7" fill="#e9a25a"/><circle cx="467.3" cy="145" r="1.7" fill="#e9a25a"/><circle cx="467.3" cy="151" r="1.7" fill="#e9a25a"/><rect x="460.6" y="181" width="13.399999999999977" height="37" fill="#d42d2d"/><circle cx="467.3" cy="183.6" r="1.7" fill="#e9a25a"/><circle cx="467.3" cy="190" r="1.7" fill="#e9a25a"/><circle cx="467.3" cy="196" r="1.7" fill="#e9a25a"/><circle cx="467.3" cy="202" r="1.7" fill="#e9a25a"/><circle cx="467.3" cy="208.6" r="1.7" fill="#e9a25a"/><circle cx="467.3" cy="215" r="1.7" fill="#e9a25a"/><rect x="492" y="155" width="11" height="20" fill="#d42d2d"/><path d="M497.5 159 V171" stroke="#f08080" stroke-width="0.6" stroke-dasharray="1.5 2"/><rect x="492" y="181" width="11" height="37" fill="#d42d2d"/><circle cx="497.5" cy="183.6" r="1.7" fill="#e9a25a"/><circle cx="497.5" cy="190" r="1.7" fill="#e9a25a"/><circle cx="497.5" cy="196" r="1.7" fill="#e9a25a"/><circle cx="497.5" cy="202" r="1.7" fill="#e9a25a"/><circle cx="497.5" cy="208.6" r="1.7" fill="#e9a25a"/><circle cx="497.5" cy="215" r="1.7" fill="#e9a25a"/><rect x="506" y="134" width="11" height="16" fill="#d42d2d"/><circle cx="511.5" cy="140" r="1.7" fill="#e9a25a"/><circle cx="511.5" cy="146" r="1.7" fill="#e9a25a"/><rect x="529" y="134" width="12" height="16" fill="#d42d2d"/><circle cx="535.0" cy="140" r="1.7" fill="#e9a25a"/><circle cx="535.0" cy="146" r="1.7" fill="#e9a25a"/><rect x="529" y="155" width="12" height="20" fill="#d42d2d"/><path d="M535.0 159 V171" stroke="#f08080" stroke-width="0.6" stroke-dasharray="1.5 2"/><rect x="529" y="181" width="12" height="37" fill="#d42d2d"/><circle cx="535.0" cy="183.6" r="1.7" fill="#e9a25a"/><circle cx="535.0" cy="190" r="1.7" fill="#e9a25a"/><circle cx="535.0" cy="196" r="1.7" fill="#e9a25a"/><circle cx="535.0" cy="202" r="1.7" fill="#e9a25a"/><circle cx="535.0" cy="208.6" r="1.7" fill="#e9a25a"/><circle cx="535.0" cy="215" r="1.7" fill="#e9a25a"/><rect x="560.6" y="155" width="11.399999999999977" height="20" fill="#d42d2d"/><path d="M566.3 159 V171" stroke="#f08080" stroke-width="0.6" stroke-dasharray="1.5 2"/><rect x="560.6" y="181" width="11.399999999999977" height="37" fill="#d42d2d"/><circle cx="566.3" cy="183.6" r="1.7" fill="#e9a25a"/><circle cx="566.3" cy="190" r="1.7" fill="#e9a25a"/><circle cx="566.3" cy="196" r="1.7" fill="#e9a25a"/><circle cx="566.3" cy="202" r="1.7" fill="#e9a25a"/><circle cx="566.3" cy="208.6" r="1.7" fill="#e9a25a"/><circle cx="566.3" cy="215" r="1.7" fill="#e9a25a"/><rect x="578.6" y="134" width="10.399999999999977" height="16" fill="#d42d2d"/><circle cx="583.8" cy="140" r="1.7" fill="#e9a25a"/><circle cx="583.8" cy="146" r="1.7" fill="#e9a25a"/><rect x="600" y="134" width="11" height="41" fill="#d42d2d"/><circle cx="605.5" cy="139" r="1.7" fill="#e9a25a"/><circle cx="605.5" cy="145" r="1.7" fill="#e9a25a"/><rect x="600" y="181" width="11" height="37" fill="#d42d2d"/><circle cx="605.5" cy="183.6" r="1.7" fill="#e9a25a"/><circle cx="605.5" cy="190" r="1.7" fill="#e9a25a"/><circle cx="605.5" cy="196" r="1.7" fill="#e9a25a"/><circle cx="605.5" cy="202" r="1.7" fill="#e9a25a"/><circle cx="605.5" cy="208.6" r="1.7" fill="#e9a25a"/><circle cx="605.5" cy="215" r="1.7" fill="#e9a25a"/><path d="M372 166 L382 177 V196 M382 216 V224 M428 218 V224 M467 218 V224 M535 218 V224 M605 218 V224" stroke="#93d08e" stroke-width="0.9" fill="none"/><text x="373.8" y="141" font-family="Liberation Mono" font-size="10.6" fill="#eeeeb0" textLength="23.19999999999999" lengthAdjust="spacingAndGlyphs" transform="translate(770.8,0) scale(-1,1)">C81</text><text x="346" y="184.6" font-family="Liberation Mono" font-size="14.6" fill="#eeeeb0" textLength="5.5" lengthAdjust="spacingAndGlyphs">2</text><text transform="translate(407.5,157.4) rotate(90)" x="0" y="0" font-family="Liberation Mono" font-size="16.5" fill="#eeeeb0" textLength="58.599999999999994" lengthAdjust="spacingAndGlyphs">L3 C159</text><text transform="translate(476,157) rotate(90)" x="0" y="0" font-family="Liberation Mono" font-size="18.2" fill="#eeeeb0" textLength="55" lengthAdjust="spacingAndGlyphs">L1 C78</text><text transform="translate(615,157.4) rotate(90)" x="0" y="0" font-family="Liberation Mono" font-size="16.7" fill="#eeeeb0" textLength="58.599999999999994" lengthAdjust="spacingAndGlyphs">L4 C153</text><path d="M380 157 h10 M385 152 v10" stroke="#a890b8" stroke-width="0.8"/><path d="M441 164 h10 M446 159 v10" stroke="#a890b8" stroke-width="0.8"/><path d="M441 198 h10 M446 193 v10" stroke="#a890b8" stroke-width="0.8"/><path d="M508 164 h10 M513 159 v10" stroke="#a890b8" stroke-width="0.8"/><path d="M508 198 h10 M513 193 v10" stroke="#a890b8" stroke-width="0.8"/><path d="M575 198 h10 M580 193 v10" stroke="#a890b8" stroke-width="0.8"/><path d="M374 180 h10 M379 175 v10" stroke="#a890b8" stroke-width="0.8"/><path d="M370 265 h10 M375 260 v10" stroke="#a890b8" stroke-width="0.8"/><path d="M442 265 h10 M447 260 v10" stroke="#a890b8" stroke-width="0.8"/><path d="M511 265 h10 M516 260 v10" stroke="#a890b8" stroke-width="0.8"/><path d="M578 265 h10 M583 260 v10" stroke="#a890b8" stroke-width="0.8"/><path d="M345 240 H636" stroke="#93d08e" stroke-width="0.9"/><path d="M686.4 134 V237" stroke="#93d08e" stroke-width="0.9"/><rect x="350.5" y="224" width="56.2" height="53.3" fill="none" stroke="#d544d5" stroke-width="1.8"/><rect x="353.5" y="234" width="12.0" height="28" fill="#d42d2d"/><rect x="390.5" y="234" width="13.0" height="28" fill="#d42d2d"/><rect x="372.5" y="262" width="13.0" height="14" fill="#d42d2d"/><circle cx="359.5" cy="240.0" r="1.6" fill="#e9a25a"/><circle cx="359.5" cy="248.7" r="1.6" fill="#e9a25a"/><circle cx="359.5" cy="257.4" r="1.6" fill="#e9a25a"/><circle cx="397.0" cy="240.0" r="1.6" fill="#e9a25a"/><circle cx="397.0" cy="248.7" r="1.6" fill="#e9a25a"/><circle cx="397.0" cy="257.4" r="1.6" fill="#e9a25a"/><circle cx="379.0" cy="268.0" r="1.6" fill="#e9a25a"/><path d="M373.5 250 h10 M378.5 245 v10" stroke="#a890b8" stroke-width="0.8"/><rect x="419" y="224" width="56.2" height="53.3" fill="none" stroke="#d544d5" stroke-width="1.8"/><rect x="422" y="234" width="12" height="28" fill="#d42d2d"/><rect x="459" y="234" width="13" height="28" fill="#d42d2d"/><rect x="441" y="262" width="13" height="14" fill="#d42d2d"/><circle cx="428" cy="240.0" r="1.6" fill="#e9a25a"/><circle cx="428" cy="248.7" r="1.6" fill="#e9a25a"/><circle cx="428" cy="257.4" r="1.6" fill="#e9a25a"/><circle cx="465.5" cy="240.0" r="1.6" fill="#e9a25a"/><circle cx="465.5" cy="248.7" r="1.6" fill="#e9a25a"/><circle cx="465.5" cy="257.4" r="1.6" fill="#e9a25a"/><circle cx="447.5" cy="268.0" r="1.6" fill="#e9a25a"/><path d="M442 250 h10 M447 245 v10" stroke="#a890b8" stroke-width="0.8"/><rect x="488" y="224" width="56.2" height="53.3" fill="none" stroke="#d544d5" stroke-width="1.8"/><rect x="491" y="234" width="12" height="28" fill="#d42d2d"/><rect x="528" y="234" width="13" height="28" fill="#d42d2d"/><rect x="510" y="262" width="13" height="14" fill="#d42d2d"/><circle cx="497" cy="240.0" r="1.6" fill="#e9a25a"/><circle cx="497" cy="248.7" r="1.6" fill="#e9a25a"/><circle cx="497" cy="257.4" r="1.6" fill="#e9a25a"/><circle cx="534.5" cy="240.0" r="1.6" fill="#e9a25a"/><circle cx="534.5" cy="248.7" r="1.6" fill="#e9a25a"/><circle cx="534.5" cy="257.4" r="1.6" fill="#e9a25a"/><circle cx="516.5" cy="268.0" r="1.6" fill="#e9a25a"/><path d="M511 250 h10 M516 245 v10" stroke="#a890b8" stroke-width="0.8"/><rect x="557.8" y="224" width="56.2" height="53.3" fill="none" stroke="#d544d5" stroke-width="1.8"/><rect x="560.8" y="234" width="12.0" height="28" fill="#d42d2d"/><rect x="597.8" y="234" width="13.0" height="28" fill="#d42d2d"/><rect x="579.8" y="262" width="13.0" height="14" fill="#d42d2d"/><circle cx="566.8" cy="240.0" r="1.6" fill="#e9a25a"/><circle cx="566.8" cy="248.7" r="1.6" fill="#e9a25a"/><circle cx="566.8" cy="257.4" r="1.6" fill="#e9a25a"/><circle cx="604.3" cy="240.0" r="1.6" fill="#e9a25a"/><circle cx="604.3" cy="248.7" r="1.6" fill="#e9a25a"/><circle cx="604.3" cy="257.4" r="1.6" fill="#e9a25a"/><circle cx="586.3" cy="268.0" r="1.6" fill="#e9a25a"/><path d="M580.8 250 h10 M585.8 245 v10" stroke="#a890b8" stroke-width="0.8"/><text x="358.0" y="291" font-family="Liberation Mono" font-size="15.9" fill="#eeeeb0" textLength="41.0" lengthAdjust="spacingAndGlyphs">A1V0_</text><text x="365.75" y="305.5" font-family="Liberation Mono" font-size="15.9" fill="#eeeeb0" textLength="25.5" lengthAdjust="spacingAndGlyphs">VSC</text><text x="426.5" y="291" font-family="Liberation Mono" font-size="15.9" fill="#eeeeb0" textLength="41.0" lengthAdjust="spacingAndGlyphs">A2V5_</text><text x="434.25" y="305.5" font-family="Liberation Mono" font-size="15.9" fill="#eeeeb0" textLength="25.5" lengthAdjust="spacingAndGlyphs">VSC</text><text x="495.5" y="291" font-family="Liberation Mono" font-size="15.9" fill="#eeeeb0" textLength="41.0" lengthAdjust="spacingAndGlyphs">A1V0_</text><text x="486.25" y="305.5" font-family="Liberation Mono" font-size="15.9" fill="#eeeeb0" textLength="59.5" lengthAdjust="spacingAndGlyphs">SERDES1</text><text x="565.3" y="291" font-family="Liberation Mono" font-size="15.9" fill="#eeeeb0" textLength="41.0" lengthAdjust="spacingAndGlyphs">A1V0_</text><text x="556.05" y="305.5" font-family="Liberation Mono" font-size="15.9" fill="#eeeeb0" textLength="59.5" lengthAdjust="spacingAndGlyphs">SERDES2</text><rect x="383.75" y="321" width="57.8" height="54" fill="none" stroke="#d544d5" stroke-width="1.8"/><rect x="387.75" y="332" width="12.0" height="28" fill="#d42d2d"/><rect x="424.75" y="332" width="12.0" height="28" fill="#d42d2d"/><rect x="405.75" y="360" width="13.0" height="14" fill="#d42d2d"/><circle cx="393.75" cy="338.0" r="1.6" fill="#e9a25a"/><circle cx="393.75" cy="347.0" r="1.6" fill="#e9a25a"/><circle cx="393.75" cy="356.0" r="1.6" fill="#e9a25a"/><circle cx="430.75" cy="338.0" r="1.6" fill="#e9a25a"/><circle cx="430.75" cy="347.0" r="1.6" fill="#e9a25a"/><circle cx="430.75" cy="356.0" r="1.6" fill="#e9a25a"/><circle cx="412.25" cy="365.0" r="1.6" fill="#e9a25a"/><rect x="450" y="321" width="57.8" height="54" fill="none" stroke="#d544d5" stroke-width="1.8"/><rect x="454" y="332" width="12" height="28" fill="#d42d2d"/><rect x="491" y="332" width="12" height="28" fill="#d42d2d"/><rect x="472" y="360" width="13" height="14" fill="#d42d2d"/><circle cx="460" cy="338.0" r="1.6" fill="#e9a25a"/><circle cx="460" cy="347.0" r="1.6" fill="#e9a25a"/><circle cx="460" cy="356.0" r="1.6" fill="#e9a25a"/><circle cx="497" cy="338.0" r="1.6" fill="#e9a25a"/><circle cx="497" cy="347.0" r="1.6" fill="#e9a25a"/><circle cx="497" cy="356.0" r="1.6" fill="#e9a25a"/><circle cx="478.5" cy="365.0" r="1.6" fill="#e9a25a"/><path d="M400 338 H483" stroke="#93d08e" stroke-width="1.4"/><text x="400.5" y="386.7" font-family="Liberation Mono" font-size="14.7" fill="#eeeeb0" textLength="25.0" lengthAdjust="spacingAndGlyphs">2V5</text><text x="467" y="386.7" font-family="Liberation Mono" font-size="14.7" fill="#eeeeb0" textLength="24" lengthAdjust="spacingAndGlyphs">3V3</text><text x="537" y="324" font-family="Liberation Mono" font-size="16.7" fill="#eeeeb0" textLength="34" lengthAdjust="spacingAndGlyphs">C485</text><text x="582" y="388" font-family="Liberation Mono" font-size="16.7" fill="#eeeeb0" textLength="26" lengthAdjust="spacingAndGlyphs">U62</text><rect x="579" y="331" width="25.5" height="38.5" fill="none" stroke="#e8e8b0" stroke-width="0.9"/><rect x="583.6" y="341.6" width="17.399999999999977" height="17.899999999999977" fill="#d42d2d"/><rect x="581" y="331.5" width="4" height="5.5" fill="#d42d2d"/><rect x="581" y="364" width="4" height="5.5" fill="#d42d2d"/><rect x="587" y="331.5" width="4" height="5.5" fill="#d42d2d"/><rect x="587" y="364" width="4" height="5.5" fill="#d42d2d"/><rect x="593" y="331.5" width="4" height="5.5" fill="#d42d2d"/><rect x="593" y="364" width="4" height="5.5" fill="#d42d2d"/><rect x="599" y="331.5" width="4" height="5.5" fill="#d42d2d"/><rect x="599" y="364" width="4" height="5.5" fill="#d42d2d"/><path d="M592 319 H605 L617 331 H636" stroke="#93d08e" stroke-width="0.9" fill="none"/><path d="M592 319 V341" stroke="#93d08e" stroke-width="0.8"/><path d="M527 134 V373 L538.5 384.5 H554 M552 134 V366 L563.4 378.4 M557.5 134 V354 L571 367.5 M579 134 V319" stroke="#4f86c6" stroke-width="1" fill="none"/><text x="585" y="355" font-family="Liberation Mono" font-size="9" fill="#f0a8a8" textLength="15" lengthAdjust="spacingAndGlyphs">PAD</text><circle cx="579" cy="319" r="2.6" fill="#e9a25a" stroke="#d42d2d" stroke-width="1.5"/><circle cx="591.5" cy="319" r="2.6" fill="#e9a25a" stroke="#d42d2d" stroke-width="1.5"/><path d="M345 381 L378 406 V500" stroke="#b0443a" stroke-width="2" fill="none"/><path d="M371 406 V563 L397 589 H706 Q716 589 718 578" stroke="#b0443a" stroke-width="2" fill="none"/><path d="M345 406 H371" stroke="#b0443a" stroke-width="2" fill="none"/><path d="M378 500 V557 L404 583 H704 Q713 583 715 573" stroke="#b0443a" stroke-width="2" fill="none"/><path d="M385 432 V551 L411 577 H702 Q710 577 712 568" stroke="#b0443a" stroke-width="2" fill="none"/><path d="M391 457 V545 L415 569 H700 Q707 569 709 562" stroke="#b0443a" stroke-width="2" fill="none"/><path d="M345 432 H385 M345 457 H391" stroke="#4f86c6" stroke-width="1.4"/><path d="M419 375 V472" stroke="#93d08e" stroke-width="1.2"/><text x="406" y="469" font-family="Liberation Mono" font-size="15.2" fill="#eeeeb0" textLength="26.5" lengthAdjust="spacingAndGlyphs">GND</text><rect x="397.8" y="471" width="42.19999999999999" height="59" fill="#d42d2d"/><text transform="translate(414,520) rotate(-90)" font-family="Liberation Mono" font-size="13" fill="#f09090">1 GND</text><text transform="translate(347,355) rotate(90)" font-family="Liberation Mono" font-size="10" fill="#eeeeb0">DUV_0_TMC_LVCMOS2E</text><circle cx="385" cy="432" r="4.6" fill="#0c0c0c"/><circle cx="385" cy="432" r="2.6" fill="#c9c46a"/><circle cx="391" cy="457" r="4.6" fill="#0c0c0c"/><circle cx="391" cy="457" r="2.6" fill="#c9c46a"/><circle cx="447" cy="387" r="4.6" fill="#0c0c0c"/><circle cx="447" cy="387" r="2.6" fill="#c9c46a"/><circle cx="554" cy="385" r="4.6" fill="#0c0c0c"/><circle cx="554" cy="385" r="2.6" fill="#c9c46a"/><circle cx="563.4" cy="378.4" r="4.6" fill="#0c0c0c"/><circle cx="563.4" cy="378.4" r="2.6" fill="#c9c46a"/><circle cx="571" cy="367.5" r="4.6" fill="#0c0c0c"/><circle cx="571" cy="367.5" r="2.6" fill="#c9c46a"/><path d="M447 387 H475 L480 378 M554 385 H592 M563.4 378.4 H592 M571 367.5 H582" stroke="#b0443a" stroke-width="1.6" fill="none"/><circle cx="391" cy="594" r="5.8" fill="#ece8a4"/><path d="M391 594 Q408 586 424 584 Q434 585 431 598 L423 634" stroke="#ece8a4" stroke-width="7.5" fill="none" stroke-linecap="round"/><path d="M418 634 L426 605 L447 612 L440 634z" fill="#ece8a4"/><path d="M460 600 Q452 612 444 634" stroke="#ece8a4" stroke-width="7" fill="none" stroke-linecap="round"/><circle cx="460" cy="599" r="4.5" fill="#ece8a4"/><path d="M420 634 l26 -28 M426 634 l22 -24 M432 634 l18 -20 M414 630 l20 -22" stroke="#5a86b8" stroke-width="0.8"/><path d="M431.0 634 V471.0 L496.0 406.0 H636" stroke="#4f86c6" stroke-width="1" fill="none"/><path d="M433.6 634 V472.066 L498.6 408.6 H636" stroke="#4f86c6" stroke-width="1" fill="none"/><path d="M440.6 634 V477.0 L502.1 415.5 H636" stroke="#4f86c6" stroke-width="1" fill="none"/><path d="M443.20000000000005 634 V478.066 L504.70000000000005 418.1 H636" stroke="#4f86c6" stroke-width="1" fill="none"/><path d="M450.2 634 V483.0 L508.2 425.0 H636" stroke="#4f86c6" stroke-width="1" fill="none"/><path d="M452.8 634 V484.066 L510.8 427.6 H636" stroke="#4f86c6" stroke-width="1" fill="none"/><path d="M459.8 634 V489.0 L514.3 434.5 H636" stroke="#4f86c6" stroke-width="1" fill="none"/><path d="M462.40000000000003 634 V490.066 L516.9 437.1 H636" stroke="#4f86c6" stroke-width="1" fill="none"/><path d="M469.4 634 V495.0 L520.4 444.0 H636" stroke="#4f86c6" stroke-width="1" fill="none"/><path d="M472.0 634 V496.066 L523.0 446.6 H636" stroke="#4f86c6" stroke-width="1" fill="none"/><path d="M479.0 634 V501.0 L526.5 453.5 H636" stroke="#4f86c6" stroke-width="1" fill="none"/><path d="M481.6 634 V502.066 L529.1 456.1 H636" stroke="#4f86c6" stroke-width="1" fill="none"/><path d="M488.6 634 V507.0 L532.6 463.0 H636" stroke="#4f86c6" stroke-width="1" fill="none"/><path d="M491.20000000000005 634 V508.066 L535.2 465.6 H636" stroke="#4f86c6" stroke-width="1" fill="none"/><path d="M498.2 634 V513.0 L538.7 472.5 H636" stroke="#4f86c6" stroke-width="1" fill="none"/><path d="M500.8 634 V514.066 L541.3000000000001 475.1 H636" stroke="#4f86c6" stroke-width="1" fill="none"/><path d="M507.8 634 V519.0 L544.8 482.0 H636" stroke="#4f86c6" stroke-width="1" fill="none"/><path d="M510.40000000000003 634 V520.066 L547.4 484.6 H636" stroke="#4f86c6" stroke-width="1" fill="none"/><path d="M517.4 634 V525.0 L550.9 491.5 H636" stroke="#4f86c6" stroke-width="1" fill="none"/><path d="M520.0 634 V526.066 L553.5 494.1 H636" stroke="#4f86c6" stroke-width="1" fill="none"/><path d="M527.0 634 V531.0 L557.0 501.0 H636" stroke="#4f86c6" stroke-width="1" fill="none"/><path d="M529.6 634 V532.066 L559.6 503.6 H636" stroke="#4f86c6" stroke-width="1" fill="none"/><path d="M536.6 634 V537.0 L563.1 510.5 H636" stroke="#4f86c6" stroke-width="1" fill="none"/><path d="M539.2 634 V538.066 L565.7 513.1 H636" stroke="#4f86c6" stroke-width="1" fill="none"/><path d="M546.2 634 V543.0 L569.2 520.0 H636" stroke="#4f86c6" stroke-width="1" fill="none"/><path d="M548.8000000000001 634 V544.066 L571.8000000000001 522.6 H636" stroke="#4f86c6" stroke-width="1" fill="none"/><path d="M555.8 634 V549.0 L575.3 529.5 H636" stroke="#4f86c6" stroke-width="1" fill="none"/><path d="M558.4 634 V550.066 L577.9 532.1 H636" stroke="#4f86c6" stroke-width="1" fill="none"/><path d="M565.4 634 V555.0 L581.4 539.0 H636" stroke="#4f86c6" stroke-width="1" fill="none"/><path d="M568.0 634 V556.066 L584.0 541.6 H636" stroke="#4f86c6" stroke-width="1" fill="none"/><path d="M575.0 634 V561.0 L587.5 548.5 H636" stroke="#4f86c6" stroke-width="1" fill="none"/><path d="M577.6 634 V562.066 L590.1 551.1 H636" stroke="#4f86c6" stroke-width="1" fill="none"/><path d="M585 406.0 q3 -5 6 0 q3 -5 6 0 q3 -5 6 0" stroke="#4f86c6" stroke-width="1" fill="none"/><path d="M595 415.5 q3 -5 6 0 q3 -5 6 0 q3 -5 6 0" stroke="#4f86c6" stroke-width="1" fill="none"/><path d="M605 425.0 q3 -5 6 0 q3 -5 6 0 q3 -5 6 0" stroke="#4f86c6" stroke-width="1" fill="none"/><path d="M585 434.5 q3 -5 6 0 q3 -5 6 0 q3 -5 6 0" stroke="#4f86c6" stroke-width="1" fill="none"/><path d="M595 444.0 q3 -5 6 0 q3 -5 6 0 q3 -5 6 0" stroke="#4f86c6" stroke-width="1" fill="none"/><path d="M605 453.5 q3 -5 6 0 q3 -5 6 0 q3 -5 6 0" stroke="#4f86c6" stroke-width="1" fill="none"/><path d="M585 463.0 q3 -5 6 0 q3 -5 6 0 q3 -5 6 0" stroke="#4f86c6" stroke-width="1" fill="none"/><path d="M595 472.5 q3 -5 6 0 q3 -5 6 0 q3 -5 6 0" stroke="#4f86c6" stroke-width="1" fill="none"/><path d="M605 482.0 q3 -5 6 0 q3 -5 6 0 q3 -5 6 0" stroke="#4f86c6" stroke-width="1" fill="none"/><path d="M585 491.5 q3 -5 6 0 q3 -5 6 0 q3 -5 6 0" stroke="#4f86c6" stroke-width="1" fill="none"/><path d="M595 501.0 q3 -5 6 0 q3 -5 6 0 q3 -5 6 0" stroke="#4f86c6" stroke-width="1" fill="none"/><path d="M605 510.5 q3 -5 6 0 q3 -5 6 0 q3 -5 6 0" stroke="#4f86c6" stroke-width="1" fill="none"/><path d="M585 520.0 q3 -5 6 0 q3 -5 6 0 q3 -5 6 0" stroke="#4f86c6" stroke-width="1" fill="none"/><path d="M595 529.5 q3 -5 6 0 q3 -5 6 0 q3 -5 6 0" stroke="#4f86c6" stroke-width="1" fill="none"/><path d="M605 539.0 q3 -5 6 0 q3 -5 6 0 q3 -5 6 0" stroke="#4f86c6" stroke-width="1" fill="none"/><path d="M585 548.5 q3 -5 6 0 q3 -5 6 0 q3 -5 6 0" stroke="#4f86c6" stroke-width="1" fill="none"/><path d="M648.7 564 V590 q5 4 0 8 q-5 4 0 8 q5 4 0 8 q-5 4 0 8 q5 4 0 8 q-5 4 0 8  V634" stroke="#4f86c6" stroke-width="1.1" fill="none"/><path d="M652.7 570 V634" stroke="#4f86c6" stroke-width="1" fill="none"/><path d="M661.25 564 V634" stroke="#4f86c6" stroke-width="1.1" fill="none"/><path d="M665.25 570 V634" stroke="#4f86c6" stroke-width="1" fill="none"/><path d="M673.8000000000001 564 V590 q5 4 0 8 q-5 4 0 8 q5 4 0 8 q-5 4 0 8 q5 4 0 8 q-5 4 0 8  V634" stroke="#4f86c6" stroke-width="1.1" fill="none"/><path d="M677.8000000000001 570 V634" stroke="#4f86c6" stroke-width="1" fill="none"/><path d="M686.35 564 V634" stroke="#4f86c6" stroke-width="1.1" fill="none"/><path d="M690.35 570 V634" stroke="#4f86c6" stroke-width="1" fill="none"/><path d="M698.9000000000001 564 V590 q5 4 0 8 q-5 4 0 8 q5 4 0 8 q-5 4 0 8 q5 4 0 8 q-5 4 0 8  V634" stroke="#4f86c6" stroke-width="1.1" fill="none"/><path d="M702.9000000000001 570 V634" stroke="#4f86c6" stroke-width="1" fill="none"/><path d="M711.45 564 V634" stroke="#4f86c6" stroke-width="1.1" fill="none"/><path d="M715.45 570 V634" stroke="#4f86c6" stroke-width="1" fill="none"/><path d="M724.0 564 V590 q5 4 0 8 q-5 4 0 8 q5 4 0 8 q-5 4 0 8 q5 4 0 8 q-5 4 0 8  V634" stroke="#4f86c6" stroke-width="1.1" fill="none"/><path d="M728.0 570 V634" stroke="#4f86c6" stroke-width="1" fill="none"/><path d="M736.5500000000001 564 V634" stroke="#4f86c6" stroke-width="1.1" fill="none"/><path d="M740.5500000000001 570 V634" stroke="#4f86c6" stroke-width="1" fill="none"/><path d="M749.1 564 V590 q5 4 0 8 q-5 4 0 8 q5 4 0 8 q-5 4 0 8 q5 4 0 8 q-5 4 0 8  V634" stroke="#4f86c6" stroke-width="1.1" fill="none"/><path d="M753.1 570 V634" stroke="#4f86c6" stroke-width="1" fill="none"/><path d="M761.6500000000001 564 V634" stroke="#4f86c6" stroke-width="1.1" fill="none"/><path d="M765.6500000000001 570 V634" stroke="#4f86c6" stroke-width="1" fill="none"/><path d="M774.2 564 V590 q5 4 0 8 q-5 4 0 8 q5 4 0 8 q-5 4 0 8 q5 4 0 8 q-5 4 0 8  V634" stroke="#4f86c6" stroke-width="1.1" fill="none"/><path d="M778.2 570 V634" stroke="#4f86c6" stroke-width="1" fill="none"/><path d="M786.75 564 V634" stroke="#4f86c6" stroke-width="1.1" fill="none"/><path d="M790.75 570 V634" stroke="#4f86c6" stroke-width="1" fill="none"/><path d="M799.3000000000001 564 V590 q5 4 0 8 q-5 4 0 8 q5 4 0 8 q-5 4 0 8 q5 4 0 8 q-5 4 0 8  V634" stroke="#4f86c6" stroke-width="1.1" fill="none"/><path d="M803.3000000000001 570 V634" stroke="#4f86c6" stroke-width="1" fill="none"/><path d="M811.85 564 V634" stroke="#4f86c6" stroke-width="1.1" fill="none"/><path d="M815.85 570 V634" stroke="#4f86c6" stroke-width="1" fill="none"/><path d="M824.4000000000001 564 V590 q5 4 0 8 q-5 4 0 8 q5 4 0 8 q-5 4 0 8 q5 4 0 8 q-5 4 0 8  V634" stroke="#4f86c6" stroke-width="1.1" fill="none"/><path d="M828.4000000000001 570 V634" stroke="#4f86c6" stroke-width="1" fill="none"/><path d="M836.95 564 V634" stroke="#4f86c6" stroke-width="1.1" fill="none"/><path d="M840.95 570 V634" stroke="#4f86c6" stroke-width="1" fill="none"/><path d="M849.5 564 V590 q5 4 0 8 q-5 4 0 8 q5 4 0 8 q-5 4 0 8 q5 4 0 8 q-5 4 0 8  V634" stroke="#4f86c6" stroke-width="1.1" fill="none"/><path d="M853.5 570 V634" stroke="#4f86c6" stroke-width="1" fill="none"/><path d="M862.0500000000001 564 V634" stroke="#4f86c6" stroke-width="1.1" fill="none"/><path d="M866.0500000000001 570 V634" stroke="#4f86c6" stroke-width="1" fill="none"/><path d="M874.6 564 V590 q5 4 0 8 q-5 4 0 8 q5 4 0 8 q-5 4 0 8 q5 4 0 8 q-5 4 0 8  V634" stroke="#4f86c6" stroke-width="1.1" fill="none"/><path d="M878.6 570 V634" stroke="#4f86c6" stroke-width="1" fill="none"/><path d="M887.1500000000001 564 V634" stroke="#4f86c6" stroke-width="1.1" fill="none"/><path d="M891.1500000000001 570 V634" stroke="#4f86c6" stroke-width="1" fill="none"/><path d="M899.7 564 V590 q5 4 0 8 q-5 4 0 8 q5 4 0 8 q-5 4 0 8 q5 4 0 8 q-5 4 0 8  V634" stroke="#4f86c6" stroke-width="1.1" fill="none"/><path d="M903.7 570 V634" stroke="#4f86c6" stroke-width="1" fill="none"/><path d="M912.25 564 V634" stroke="#4f86c6" stroke-width="1.1" fill="none"/><path d="M916.25 570 V634" stroke="#4f86c6" stroke-width="1" fill="none"/><path d="M924.8000000000001 564 V590 q5 4 0 8 q-5 4 0 8 q5 4 0 8 q-5 4 0 8 q5 4 0 8 q-5 4 0 8  V634" stroke="#4f86c6" stroke-width="1.1" fill="none"/><path d="M928.8000000000001 570 V634" stroke="#4f86c6" stroke-width="1" fill="none"/><path d="M937.3500000000001 564 V634" stroke="#4f86c6" stroke-width="1.1" fill="none"/><path d="M941.3500000000001 570 V634" stroke="#4f86c6" stroke-width="1" fill="none"/><path d="M949.9000000000001 564 V590 q5 4 0 8 q-5 4 0 8 q5 4 0 8 q-5 4 0 8 q5 4 0 8 q-5 4 0 8  V634" stroke="#4f86c6" stroke-width="1.1" fill="none"/><path d="M953.9000000000001 570 V634" stroke="#4f86c6" stroke-width="1" fill="none"/><path d="M962.45 564 V634" stroke="#4f86c6" stroke-width="1.1" fill="none"/><path d="M966.45 570 V634" stroke="#4f86c6" stroke-width="1" fill="none"/><path d="M660 580 V595 L615 634" stroke="#4f86c6" stroke-width="1.1" fill="none"/><path d="M674 580 V595 L629 634" stroke="#4f86c6" stroke-width="1.1" fill="none"/><path d="M688 580 V595 L643 634" stroke="#4f86c6" stroke-width="1.1" fill="none"/><path d="M702 580 V595 L657 634" stroke="#4f86c6" stroke-width="1.1" fill="none"/><path d="M716 580 V595 L671 634" stroke="#4f86c6" stroke-width="1.1" fill="none"/><path d="M730 580 V595 L685 634" stroke="#4f86c6" stroke-width="1.1" fill="none"/><path d="M744 580 V595 L699 634" stroke="#4f86c6" stroke-width="1.1" fill="none"/><path d="M758 580 V595 L713 634" stroke="#4f86c6" stroke-width="1.1" fill="none"/><path d="M772 580 V595 L727 634" stroke="#4f86c6" stroke-width="1.1" fill="none"/><path d="M786 580 V595 L741 634" stroke="#4f86c6" stroke-width="1.1" fill="none"/><path d="M976 262 H1110" stroke="#b0443a" stroke-width="1.6"/><path d="M976 270 H1110" stroke="#b0443a" stroke-width="1.6"/><path d="M976 300 H1110" stroke="#b0443a" stroke-width="1.6"/><path d="M976 320 H1110" stroke="#b0443a" stroke-width="1.6"/><path d="M976 342 H1110" stroke="#b0443a" stroke-width="1.6"/><path d="M976 325 H1100" stroke="#4f86c6" stroke-width="1.1"/><path d="M976 337 H1100" stroke="#4f86c6" stroke-width="1.1"/><path d="M976 355 H1100" stroke="#4f86c6" stroke-width="1.1"/><path d="M976 362 H1100" stroke="#4f86c6" stroke-width="1.1"/><rect x="635.5" y="236.5" width="340.5" height="340" fill="none" stroke="#dfe6c8" stroke-width="2.2"/><path d="M718 150 V380" stroke="#9a4a3c" stroke-width="2.5" opacity="0.8"/><path d="M780 134 V380" stroke="#9a4a3c" stroke-width="2.5" opacity="0.8"/><path d="M844 134 V380" stroke="#9a4a3c" stroke-width="2.5" opacity="0.8"/><path d="M735 134 L718 150" stroke="#9a4a3c" stroke-width="2.5" opacity="0.8"/><path d="M749.1 375.5 V450.8" stroke="#c8c878" stroke-width="1"/><path d="M761.6500000000001 375.5 V450.8" stroke="#c8c878" stroke-width="1"/><path d="M774.2 375.5 V450.8" stroke="#c8c878" stroke-width="1"/><path d="M786.75 375.5 V450.8" stroke="#c8c878" stroke-width="1"/><path d="M799.3000000000001 375.5 V450.8" stroke="#c8c878" stroke-width="1"/><path d="M811.85 375.5 V450.8" stroke="#c8c878" stroke-width="1"/><path d="M824.4000000000001 375.5 V450.8" stroke="#c8c878" stroke-width="1"/><path d="M836.95 375.5 V450.8" stroke="#c8c878" stroke-width="1"/><path d="M849.5 375.5 V450.8" stroke="#c8c878" stroke-width="1"/><path d="M862.0500000000001 375.5 V450.8" stroke="#c8c878" stroke-width="1"/><path d="M698.9000000000001 369.225 H912.25" stroke="#93d08e" stroke-width="0.9"/><path d="M698.9000000000001 457.07500000000005 H912.25" stroke="#93d08e" stroke-width="0.9"/><rect x="725.4750000000001" y="251.47499999999997" width="9.6" height="9.6" fill="#4f85bf" stroke="#2f5c98" stroke-width="0.9"/><circle cx="730.2750000000001" cy="256.275" r="2.3" fill="#d8c470"/><rect x="738.0250000000001" y="251.47499999999997" width="9.6" height="9.6" fill="#4f85bf" stroke="#2f5c98" stroke-width="0.9"/><circle cx="742.825" cy="256.275" r="2.3" fill="#d8c470"/><rect x="750.575" y="251.47499999999997" width="9.6" height="9.6" fill="#4f85bf" stroke="#2f5c98" stroke-width="0.9"/><circle cx="755.375" cy="256.275" r="2.3" fill="#d8c470"/><rect x="763.1250000000001" y="251.47499999999997" width="9.6" height="9.6" fill="#4f85bf" stroke="#2f5c98" stroke-width="0.9"/><circle cx="767.9250000000001" cy="256.275" r="2.3" fill="#d8c470"/><rect x="775.6750000000001" y="251.47499999999997" width="9.6" height="9.6" fill="#4f85bf" stroke="#2f5c98" stroke-width="0.9"/><circle cx="780.475" cy="256.275" r="2.3" fill="#d8c470"/><rect x="788.2250000000001" y="251.47499999999997" width="9.6" height="9.6" fill="#4f85bf" stroke="#2f5c98" stroke-width="0.9"/><circle cx="793.0250000000001" cy="256.275" r="2.3" fill="#d8c470"/><rect x="800.7750000000001" y="251.47499999999997" width="9.6" height="9.6" fill="#4f85bf" stroke="#2f5c98" stroke-width="0.9"/><circle cx="805.575" cy="256.275" r="2.3" fill="#d8c470"/><rect x="813.325" y="251.47499999999997" width="9.6" height="9.6" fill="#4f85bf" stroke="#2f5c98" stroke-width="0.9"/><circle cx="818.125" cy="256.275" r="2.3" fill="#d8c470"/><rect x="825.8750000000001" y="251.47499999999997" width="9.6" height="9.6" fill="#4f85bf" stroke="#2f5c98" stroke-width="0.9"/><circle cx="830.6750000000001" cy="256.275" r="2.3" fill="#d8c470"/><rect x="838.4250000000001" y="251.47499999999997" width="9.6" height="9.6" fill="#4f85bf" stroke="#2f5c98" stroke-width="0.9"/><circle cx="843.225" cy="256.275" r="2.3" fill="#d8c470"/><rect x="850.9750000000001" y="251.47499999999997" width="9.6" height="9.6" fill="#4f85bf" stroke="#2f5c98" stroke-width="0.9"/><circle cx="855.7750000000001" cy="256.275" r="2.3" fill="#d8c470"/><rect x="863.5250000000001" y="251.47499999999997" width="9.6" height="9.6" fill="#4f85bf" stroke="#2f5c98" stroke-width="0.9"/><circle cx="868.325" cy="256.275" r="2.3" fill="#d8c470"/><rect x="876.075" y="251.47499999999997" width="9.6" height="9.6" fill="#4f85bf" stroke="#2f5c98" stroke-width="0.9"/><circle cx="880.875" cy="256.275" r="2.3" fill="#d8c470"/><rect x="888.6250000000001" y="251.47499999999997" width="9.6" height="9.6" fill="#4f85bf" stroke="#2f5c98" stroke-width="0.9"/><circle cx="893.4250000000001" cy="256.275" r="2.3" fill="#d8c470"/><rect x="901.1750000000002" y="251.47499999999997" width="9.6" height="9.6" fill="#4f85bf" stroke="#2f5c98" stroke-width="0.9"/><circle cx="905.9750000000001" cy="256.275" r="2.3" fill="#d8c470"/><rect x="725.4750000000001" y="264.025" width="9.6" height="9.6" fill="#4f85bf" stroke="#2f5c98" stroke-width="0.9"/><circle cx="730.2750000000001" cy="268.825" r="2.3" fill="#d8c470"/><rect x="738.0250000000001" y="264.025" width="9.6" height="9.6" fill="#4f85bf" stroke="#2f5c98" stroke-width="0.9"/><circle cx="742.825" cy="268.825" r="2.3" fill="#d8c470"/><rect x="750.575" y="264.025" width="9.6" height="9.6" fill="#4f85bf" stroke="#2f5c98" stroke-width="0.9"/><circle cx="755.375" cy="268.825" r="2.3" fill="#d8c470"/><rect x="763.1250000000001" y="264.025" width="9.6" height="9.6" fill="#4f85bf" stroke="#2f5c98" stroke-width="0.9"/><circle cx="767.9250000000001" cy="268.825" r="2.3" fill="#d8c470"/><rect x="775.6750000000001" y="264.025" width="9.6" height="9.6" fill="#4f85bf" stroke="#2f5c98" stroke-width="0.9"/><circle cx="780.475" cy="268.825" r="2.3" fill="#d8c470"/><rect x="788.2250000000001" y="264.025" width="9.6" height="9.6" fill="#4f85bf" stroke="#2f5c98" stroke-width="0.9"/><circle cx="793.0250000000001" cy="268.825" r="2.3" fill="#d8c470"/><rect x="800.7750000000001" y="264.025" width="9.6" height="9.6" fill="#4f85bf" stroke="#2f5c98" stroke-width="0.9"/><circle cx="805.575" cy="268.825" r="2.3" fill="#d8c470"/><rect x="813.325" y="264.025" width="9.6" height="9.6" fill="#4f85bf" stroke="#2f5c98" stroke-width="0.9"/><circle cx="818.125" cy="268.825" r="2.3" fill="#d8c470"/><rect x="825.8750000000001" y="264.025" width="9.6" height="9.6" fill="#4f85bf" stroke="#2f5c98" stroke-width="0.9"/><circle cx="830.6750000000001" cy="268.825" r="2.3" fill="#d8c470"/><rect x="838.4250000000001" y="264.025" width="9.6" height="9.6" fill="#4f85bf" stroke="#2f5c98" stroke-width="0.9"/><circle cx="843.225" cy="268.825" r="2.3" fill="#d8c470"/><rect x="850.9750000000001" y="264.025" width="9.6" height="9.6" fill="#4f85bf" stroke="#2f5c98" stroke-width="0.9"/><circle cx="855.7750000000001" cy="268.825" r="2.3" fill="#d8c470"/><rect x="863.5250000000001" y="264.025" width="9.6" height="9.6" fill="#4f85bf" stroke="#2f5c98" stroke-width="0.9"/><circle cx="868.325" cy="268.825" r="2.3" fill="#d8c470"/><rect x="876.075" y="264.025" width="9.6" height="9.6" fill="#4f85bf" stroke="#2f5c98" stroke-width="0.9"/><circle cx="880.875" cy="268.825" r="2.3" fill="#d8c470"/><rect x="888.6250000000001" y="264.025" width="9.6" height="9.6" fill="#4f85bf" stroke="#2f5c98" stroke-width="0.9"/><circle cx="893.4250000000001" cy="268.825" r="2.3" fill="#d8c470"/><rect x="901.1750000000002" y="264.025" width="9.6" height="9.6" fill="#4f85bf" stroke="#2f5c98" stroke-width="0.9"/><circle cx="905.9750000000001" cy="268.825" r="2.3" fill="#d8c470"/><rect x="645.3000000000001" y="247.0" width="6.8" height="6" rx="1" fill="#d43a32"/><rect x="708.0500000000001" y="247.0" width="6.8" height="6" rx="1" fill="#d43a32"/><rect x="733.1500000000001" y="247.0" width="6.8" height="6" rx="1" fill="#d43a32"/><rect x="745.7" y="247.0" width="6.8" height="6" rx="1" fill="#d43a32"/><rect x="758.2500000000001" y="247.0" width="6.8" height="6" rx="1" fill="#d43a32"/><rect x="783.35" y="247.0" width="6.8" height="6" rx="1" fill="#d43a32"/><rect x="795.9000000000001" y="247.0" width="6.8" height="6" rx="1" fill="#d43a32"/><rect x="808.45" y="247.0" width="6.8" height="6" rx="1" fill="#d43a32"/><rect x="833.5500000000001" y="247.0" width="6.8" height="6" rx="1" fill="#d43a32"/><rect x="846.1" y="247.0" width="6.8" height="6" rx="1" fill="#d43a32"/><rect x="858.6500000000001" y="247.0" width="6.8" height="6" rx="1" fill="#d43a32"/><rect x="871.2" y="247.0" width="6.8" height="6" rx="1" fill="#d43a32"/><rect x="883.7500000000001" y="247.0" width="6.8" height="6" rx="1" fill="#d43a32"/><rect x="896.3000000000001" y="247.0" width="6.8" height="6" rx="1" fill="#d43a32"/><rect x="959.0500000000001" y="247.0" width="6.8" height="6" rx="1" fill="#d43a32"/><rect x="657.85" y="259.55" width="6.8" height="6" rx="1" fill="#d43a32"/><rect x="708.0500000000001" y="259.55" width="6.8" height="6" rx="1" fill="#d43a32"/><rect x="733.1500000000001" y="259.55" width="6.8" height="6" rx="1" fill="#d43a32"/><rect x="745.7" y="259.55" width="6.8" height="6" rx="1" fill="#d43a32"/><rect x="758.2500000000001" y="259.55" width="6.8" height="6" rx="1" fill="#d43a32"/><rect x="783.35" y="259.55" width="6.8" height="6" rx="1" fill="#d43a32"/><rect x="795.9000000000001" y="259.55" width="6.8" height="6" rx="1" fill="#d43a32"/><rect x="808.45" y="259.55" width="6.8" height="6" rx="1" fill="#d43a32"/><rect x="833.5500000000001" y="259.55" width="6.8" height="6" rx="1" fill="#d43a32"/><rect x="846.1" y="259.55" width="6.8" height="6" rx="1" fill="#d43a32"/><rect x="858.6500000000001" y="259.55" width="6.8" height="6" rx="1" fill="#d43a32"/><rect x="871.2" y="259.55" width="6.8" height="6" rx="1" fill="#d43a32"/><rect x="883.7500000000001" y="259.55" width="6.8" height="6" rx="1" fill="#d43a32"/><rect x="896.3000000000001" y="259.55" width="6.8" height="6" rx="1" fill="#d43a32"/><rect x="645.3000000000001" y="272.1" width="6.8" height="6" rx="1" fill="#d43a32"/><rect x="657.85" y="272.1" width="6.8" height="6" rx="1" fill="#d43a32"/><rect x="670.4000000000001" y="272.1" width="6.8" height="6" rx="1" fill="#d43a32"/><rect x="933.9500000000002" y="272.1" width="6.8" height="6" rx="1" fill="#d43a32"/><rect x="946.5000000000001" y="272.1" width="6.8" height="6" rx="1" fill="#d43a32"/><rect x="959.0500000000001" y="272.1" width="6.8" height="6" rx="1" fill="#d43a32"/><rect x="645.3000000000001" y="284.65" width="6.8" height="6" rx="1" fill="#d43a32"/><rect x="657.85" y="284.65" width="6.8" height="6" rx="1" fill="#d43a32"/><rect x="682.95" y="284.65" width="6.8" height="6" rx="1" fill="#d43a32"/><rect x="946.5000000000001" y="284.65" width="6.8" height="6" rx="1" fill="#d43a32"/><rect x="959.0500000000001" y="284.65" width="6.8" height="6" rx="1" fill="#d43a32"/><rect x="645.3000000000001" y="297.2" width="6.8" height="6" rx="1" fill="#d43a32"/><rect x="657.85" y="297.2" width="6.8" height="6" rx="1" fill="#d43a32"/><rect x="682.95" y="297.2" width="6.8" height="6" rx="1" fill="#d43a32"/><rect x="921.4000000000001" y="297.2" width="6.8" height="6" rx="1" fill="#d43a32"/><rect x="933.9500000000002" y="297.2" width="6.8" height="6" rx="1" fill="#d43a32"/><rect x="946.5000000000001" y="297.2" width="6.8" height="6" rx="1" fill="#d43a32"/><rect x="959.0500000000001" y="297.2" width="6.8" height="6" rx="1" fill="#d43a32"/><rect x="645.3000000000001" y="309.75" width="6.8" height="6" rx="1" fill="#d43a32"/><rect x="657.85" y="309.75" width="6.8" height="6" rx="1" fill="#d43a32"/><rect x="670.4000000000001" y="309.75" width="6.8" height="6" rx="1" fill="#d43a32"/><rect x="682.95" y="309.75" width="6.8" height="6" rx="1" fill="#d43a32"/><rect x="708.0500000000001" y="309.75" width="6.8" height="6" rx="1" fill="#d43a32"/><rect x="733.1500000000001" y="309.75" width="6.8" height="6" rx="1" fill="#d43a32"/><rect x="745.7" y="309.75" width="6.8" height="6" rx="1" fill="#d43a32"/><rect x="758.2500000000001" y="309.75" width="6.8" height="6" rx="1" fill="#d43a32"/><rect x="783.35" y="309.75" width="6.8" height="6" rx="1" fill="#d43a32"/><rect x="795.9000000000001" y="309.75" width="6.8" height="6" rx="1" fill="#d43a32"/><rect x="808.45" y="309.75" width="6.8" height="6" rx="1" fill="#d43a32"/><rect x="833.5500000000001" y="309.75" width="6.8" height="6" rx="1" fill="#d43a32"/><rect x="846.1" y="309.75" width="6.8" height="6" rx="1" fill="#d43a32"/><rect x="858.6500000000001" y="309.75" width="6.8" height="6" rx="1" fill="#d43a32"/><rect x="871.2" y="309.75" width="6.8" height="6" rx="1" fill="#d43a32"/><rect x="883.7500000000001" y="309.75" width="6.8" height="6" rx="1" fill="#d43a32"/><rect x="896.3000000000001" y="309.75" width="6.8" height="6" rx="1" fill="#d43a32"/><rect x="946.5000000000001" y="309.75" width="6.8" height="6" rx="1" fill="#d43a32"/><rect x="959.0500000000001" y="309.75" width="6.8" height="6" rx="1" fill="#d43a32"/><rect x="645.3000000000001" y="322.3" width="6.8" height="6" rx="1" fill="#d43a32"/><rect x="657.85" y="322.3" width="6.8" height="6" rx="1" fill="#d43a32"/><rect x="670.4000000000001" y="322.3" width="6.8" height="6" rx="1" fill="#d43a32"/><rect x="682.95" y="322.3" width="6.8" height="6" rx="1" fill="#d43a32"/><rect x="708.0500000000001" y="322.3" width="6.8" height="6" rx="1" fill="#d43a32"/><rect x="733.1500000000001" y="322.3" width="6.8" height="6" rx="1" fill="#d43a32"/><rect x="745.7" y="322.3" width="6.8" height="6" rx="1" fill="#d43a32"/><rect x="758.2500000000001" y="322.3" width="6.8" height="6" rx="1" fill="#d43a32"/><rect x="783.35" y="322.3" width="6.8" height="6" rx="1" fill="#d43a32"/><rect x="795.9000000000001" y="322.3" width="6.8" height="6" rx="1" fill="#d43a32"/><rect x="833.5500000000001" y="322.3" width="6.8" height="6" rx="1" fill="#d43a32"/><rect x="846.1" y="322.3" width="6.8" height="6" rx="1" fill="#d43a32"/><rect x="858.6500000000001" y="322.3" width="6.8" height="6" rx="1" fill="#d43a32"/><rect x="871.2" y="322.3" width="6.8" height="6" rx="1" fill="#d43a32"/><rect x="883.7500000000001" y="322.3" width="6.8" height="6" rx="1" fill="#d43a32"/><rect x="896.3000000000001" y="322.3" width="6.8" height="6" rx="1" fill="#d43a32"/><rect x="946.5000000000001" y="322.3" width="6.8" height="6" rx="1" fill="#d43a32"/><rect x="959.0500000000001" y="322.3" width="6.8" height="6" rx="1" fill="#d43a32"/><rect x="946.5000000000001" y="334.85" width="6.8" height="6" rx="1" fill="#d43a32"/><rect x="959.0500000000001" y="334.85" width="6.8" height="6" rx="1" fill="#d43a32"/><rect x="645.3000000000001" y="347.4" width="6.8" height="6" rx="1" fill="#d43a32"/><rect x="657.85" y="347.4" width="6.8" height="6" rx="1" fill="#d43a32"/><rect x="670.4000000000001" y="347.4" width="6.8" height="6" rx="1" fill="#d43a32"/><rect x="682.95" y="347.4" width="6.8" height="6" rx="1" fill="#d43a32"/><rect x="959.0500000000001" y="347.4" width="6.8" height="6" rx="1" fill="#d43a32"/><rect x="959.0500000000001" y="359.95" width="6.8" height="6" rx="1" fill="#d43a32"/><rect x="645.3000000000001" y="372.5" width="6.8" height="6" rx="1" fill="#d43a32"/><rect x="657.85" y="372.5" width="6.8" height="6" rx="1" fill="#d43a32"/><rect x="670.4000000000001" y="372.5" width="6.8" height="6" rx="1" fill="#d43a32"/><rect x="682.95" y="372.5" width="6.8" height="6" rx="1" fill="#d43a32"/><rect x="946.5000000000001" y="372.5" width="6.8" height="6" rx="1" fill="#d43a32"/><rect x="959.0500000000001" y="372.5" width="6.8" height="6" rx="1" fill="#d43a32"/><rect x="645.3000000000001" y="385.05" width="6.8" height="6" rx="1" fill="#d43a32"/><rect x="657.85" y="385.05" width="6.8" height="6" rx="1" fill="#d43a32"/><rect x="670.4000000000001" y="385.05" width="6.8" height="6" rx="1" fill="#d43a32"/><rect x="682.95" y="385.05" width="6.8" height="6" rx="1" fill="#d43a32"/><rect x="946.5000000000001" y="385.05" width="6.8" height="6" rx="1" fill="#d43a32"/><rect x="959.0500000000001" y="385.05" width="6.8" height="6" rx="1" fill="#d43a32"/><rect x="745.7" y="460.35" width="6.8" height="6" rx="1" fill="#d43a32"/><rect x="758.2500000000001" y="460.35" width="6.8" height="6" rx="1" fill="#d43a32"/><rect x="770.8000000000001" y="460.35" width="6.8" height="6" rx="1" fill="#d43a32"/><rect x="783.35" y="460.35" width="6.8" height="6" rx="1" fill="#d43a32"/><rect x="795.9000000000001" y="460.35" width="6.8" height="6" rx="1" fill="#d43a32"/><rect x="808.45" y="460.35" width="6.8" height="6" rx="1" fill="#d43a32"/><rect x="682.95" y="472.9" width="6.8" height="6" rx="1" fill="#d43a32"/><rect x="921.4000000000001" y="472.9" width="6.8" height="6" rx="1" fill="#d43a32"/><rect x="682.95" y="485.45000000000005" width="6.8" height="6" rx="1" fill="#d43a32"/><rect x="921.4000000000001" y="485.45000000000005" width="6.8" height="6" rx="1" fill="#d43a32"/><rect x="670.4000000000001" y="523.1" width="6.8" height="6" rx="1" fill="#d43a32"/><rect x="720.6" y="523.1" width="6.8" height="6" rx="1" fill="#d43a32"/><rect x="783.35" y="523.1" width="6.8" height="6" rx="1" fill="#d43a32"/><rect x="670.4000000000001" y="535.6500000000001" width="6.8" height="6" rx="1" fill="#d43a32"/><rect x="720.6" y="535.6500000000001" width="6.8" height="6" rx="1" fill="#d43a32"/><rect x="833.5500000000001" y="535.6500000000001" width="6.8" height="6" rx="1" fill="#d43a32"/><rect x="858.6500000000001" y="535.6500000000001" width="6.8" height="6" rx="1" fill="#d43a32"/><rect x="908.85" y="535.6500000000001" width="6.8" height="6" rx="1" fill="#d43a32"/><rect x="645.3000000000001" y="560.75" width="6.8" height="6" rx="1" fill="#d43a32"/><rect x="694.1000000000001" y="245.2" width="9.6" height="9.6" fill="#4f85bf" stroke="#2f5c98" stroke-width="0.9"/><rect x="945.1000000000001" y="245.2" width="9.6" height="9.6" fill="#4f85bf" stroke="#2f5c98" stroke-width="0.9"/><rect x="694.1000000000001" y="257.75" width="9.6" height="9.6" fill="#4f85bf" stroke="#2f5c98" stroke-width="0.9"/><rect x="920.0000000000001" y="257.75" width="9.6" height="9.6" fill="#4f85bf" stroke="#2f5c98" stroke-width="0.9"/><rect x="945.1000000000001" y="257.75" width="9.6" height="9.6" fill="#4f85bf" stroke="#2f5c98" stroke-width="0.9"/><rect x="957.6500000000001" y="257.75" width="9.6" height="9.6" fill="#4f85bf" stroke="#2f5c98" stroke-width="0.9"/><rect x="694.1000000000001" y="270.3" width="9.6" height="9.6" fill="#4f85bf" stroke="#2f5c98" stroke-width="0.9"/><rect x="706.6500000000001" y="270.3" width="9.6" height="9.6" fill="#4f85bf" stroke="#2f5c98" stroke-width="0.9"/><rect x="907.45" y="270.3" width="9.6" height="9.6" fill="#4f85bf" stroke="#2f5c98" stroke-width="0.9"/><rect x="920.0000000000001" y="270.3" width="9.6" height="9.6" fill="#4f85bf" stroke="#2f5c98" stroke-width="0.9"/><rect x="669.0000000000001" y="282.84999999999997" width="9.6" height="9.6" fill="#4f85bf" stroke="#2f5c98" stroke-width="0.9"/><rect x="706.6500000000001" y="282.84999999999997" width="9.6" height="9.6" fill="#4f85bf" stroke="#2f5c98" stroke-width="0.9"/><rect x="719.2" y="282.84999999999997" width="9.6" height="9.6" fill="#4f85bf" stroke="#2f5c98" stroke-width="0.9"/><rect x="731.7500000000001" y="282.84999999999997" width="9.6" height="9.6" fill="#4f85bf" stroke="#2f5c98" stroke-width="0.9"/><rect x="744.3000000000001" y="282.84999999999997" width="9.6" height="9.6" fill="#4f85bf" stroke="#2f5c98" stroke-width="0.9"/><rect x="756.8500000000001" y="282.84999999999997" width="9.6" height="9.6" fill="#4f85bf" stroke="#2f5c98" stroke-width="0.9"/><rect x="769.4000000000001" y="282.84999999999997" width="9.6" height="9.6" fill="#4f85bf" stroke="#2f5c98" stroke-width="0.9"/><rect x="781.95" y="282.84999999999997" width="9.6" height="9.6" fill="#4f85bf" stroke="#2f5c98" stroke-width="0.9"/><rect x="794.5000000000001" y="282.84999999999997" width="9.6" height="9.6" fill="#4f85bf" stroke="#2f5c98" stroke-width="0.9"/><rect x="807.0500000000001" y="282.84999999999997" width="9.6" height="9.6" fill="#4f85bf" stroke="#2f5c98" stroke-width="0.9"/><rect x="819.6000000000001" y="282.84999999999997" width="9.6" height="9.6" fill="#4f85bf" stroke="#2f5c98" stroke-width="0.9"/><rect x="832.1500000000001" y="282.84999999999997" width="9.6" height="9.6" fill="#4f85bf" stroke="#2f5c98" stroke-width="0.9"/><rect x="844.7" y="282.84999999999997" width="9.6" height="9.6" fill="#4f85bf" stroke="#2f5c98" stroke-width="0.9"/><rect x="857.2500000000001" y="282.84999999999997" width="9.6" height="9.6" fill="#4f85bf" stroke="#2f5c98" stroke-width="0.9"/><rect x="869.8000000000001" y="282.84999999999997" width="9.6" height="9.6" fill="#4f85bf" stroke="#2f5c98" stroke-width="0.9"/><rect x="882.3500000000001" y="282.84999999999997" width="9.6" height="9.6" fill="#4f85bf" stroke="#2f5c98" stroke-width="0.9"/><rect x="894.9000000000001" y="282.84999999999997" width="9.6" height="9.6" fill="#4f85bf" stroke="#2f5c98" stroke-width="0.9"/><rect x="907.45" y="282.84999999999997" width="9.6" height="9.6" fill="#4f85bf" stroke="#2f5c98" stroke-width="0.9"/><rect x="920.0000000000001" y="282.84999999999997" width="9.6" height="9.6" fill="#4f85bf" stroke="#2f5c98" stroke-width="0.9"/><rect x="932.5500000000002" y="282.84999999999997" width="9.6" height="9.6" fill="#4f85bf" stroke="#2f5c98" stroke-width="0.9"/><rect x="669.0000000000001" y="295.4" width="9.6" height="9.6" fill="#4f85bf" stroke="#2f5c98" stroke-width="0.9"/><rect x="706.6500000000001" y="295.4" width="9.6" height="9.6" fill="#4f85bf" stroke="#2f5c98" stroke-width="0.9"/><rect x="719.2" y="295.4" width="9.6" height="9.6" fill="#4f85bf" stroke="#2f5c98" stroke-width="0.9"/><rect x="731.7500000000001" y="295.4" width="9.6" height="9.6" fill="#4f85bf" stroke="#2f5c98" stroke-width="0.9"/><rect x="744.3000000000001" y="295.4" width="9.6" height="9.6" fill="#4f85bf" stroke="#2f5c98" stroke-width="0.9"/><rect x="756.8500000000001" y="295.4" width="9.6" height="9.6" fill="#4f85bf" stroke="#2f5c98" stroke-width="0.9"/><rect x="769.4000000000001" y="295.4" width="9.6" height="9.6" fill="#4f85bf" stroke="#2f5c98" stroke-width="0.9"/><rect x="781.95" y="295.4" width="9.6" height="9.6" fill="#4f85bf" stroke="#2f5c98" stroke-width="0.9"/><rect x="794.5000000000001" y="295.4" width="9.6" height="9.6" fill="#4f85bf" stroke="#2f5c98" stroke-width="0.9"/><rect x="807.0500000000001" y="295.4" width="9.6" height="9.6" fill="#4f85bf" stroke="#2f5c98" stroke-width="0.9"/><rect x="819.6000000000001" y="295.4" width="9.6" height="9.6" fill="#4f85bf" stroke="#2f5c98" stroke-width="0.9"/><rect x="832.1500000000001" y="295.4" width="9.6" height="9.6" fill="#4f85bf" stroke="#2f5c98" stroke-width="0.9"/><rect x="844.7" y="295.4" width="9.6" height="9.6" fill="#4f85bf" stroke="#2f5c98" stroke-width="0.9"/><rect x="857.2500000000001" y="295.4" width="9.6" height="9.6" fill="#4f85bf" stroke="#2f5c98" stroke-width="0.9"/><rect x="869.8000000000001" y="295.4" width="9.6" height="9.6" fill="#4f85bf" stroke="#2f5c98" stroke-width="0.9"/><rect x="882.3500000000001" y="295.4" width="9.6" height="9.6" fill="#4f85bf" stroke="#2f5c98" stroke-width="0.9"/><rect x="894.9000000000001" y="295.4" width="9.6" height="9.6" fill="#4f85bf" stroke="#2f5c98" stroke-width="0.9"/><rect x="920.0000000000001" y="307.95" width="9.6" height="9.6" fill="#4f85bf" stroke="#2f5c98" stroke-width="0.9"/><rect x="932.5500000000002" y="307.95" width="9.6" height="9.6" fill="#4f85bf" stroke="#2f5c98" stroke-width="0.9"/><rect x="719.2" y="320.5" width="9.6" height="9.6" fill="#4f85bf" stroke="#2f5c98" stroke-width="0.9"/><rect x="769.4000000000001" y="320.5" width="9.6" height="9.6" fill="#4f85bf" stroke="#2f5c98" stroke-width="0.9"/><rect x="807.0500000000001" y="320.5" width="9.6" height="9.6" fill="#4f85bf" stroke="#2f5c98" stroke-width="0.9"/><rect x="819.6000000000001" y="320.5" width="9.6" height="9.6" fill="#4f85bf" stroke="#2f5c98" stroke-width="0.9"/><rect x="920.0000000000001" y="320.5" width="9.6" height="9.6" fill="#4f85bf" stroke="#2f5c98" stroke-width="0.9"/><rect x="932.5500000000002" y="320.5" width="9.6" height="9.6" fill="#4f85bf" stroke="#2f5c98" stroke-width="0.9"/><rect x="694.1000000000001" y="333.05" width="9.6" height="9.6" fill="#4f85bf" stroke="#2f5c98" stroke-width="0.9"/><rect x="706.6500000000001" y="333.05" width="9.6" height="9.6" fill="#4f85bf" stroke="#2f5c98" stroke-width="0.9"/><rect x="719.2" y="333.05" width="9.6" height="9.6" fill="#4f85bf" stroke="#2f5c98" stroke-width="0.9"/><rect x="769.4000000000001" y="333.05" width="9.6" height="9.6" fill="#4f85bf" stroke="#2f5c98" stroke-width="0.9"/><rect x="819.6000000000001" y="333.05" width="9.6" height="9.6" fill="#4f85bf" stroke="#2f5c98" stroke-width="0.9"/><rect x="920.0000000000001" y="333.05" width="9.6" height="9.6" fill="#4f85bf" stroke="#2f5c98" stroke-width="0.9"/><rect x="932.5500000000002" y="333.05" width="9.6" height="9.6" fill="#4f85bf" stroke="#2f5c98" stroke-width="0.9"/><rect x="694.1000000000001" y="345.59999999999997" width="9.6" height="9.6" fill="#4f85bf" stroke="#2f5c98" stroke-width="0.9"/><rect x="706.6500000000001" y="345.59999999999997" width="9.6" height="9.6" fill="#4f85bf" stroke="#2f5c98" stroke-width="0.9"/><rect x="719.2" y="345.59999999999997" width="9.6" height="9.6" fill="#4f85bf" stroke="#2f5c98" stroke-width="0.9"/><rect x="731.7500000000001" y="345.59999999999997" width="9.6" height="9.6" fill="#4f85bf" stroke="#2f5c98" stroke-width="0.9"/><rect x="744.3000000000001" y="345.59999999999997" width="9.6" height="9.6" fill="#4f85bf" stroke="#2f5c98" stroke-width="0.9"/><rect x="756.8500000000001" y="345.59999999999997" width="9.6" height="9.6" fill="#4f85bf" stroke="#2f5c98" stroke-width="0.9"/><rect x="769.4000000000001" y="345.59999999999997" width="9.6" height="9.6" fill="#4f85bf" stroke="#2f5c98" stroke-width="0.9"/><rect x="781.95" y="345.59999999999997" width="9.6" height="9.6" fill="#4f85bf" stroke="#2f5c98" stroke-width="0.9"/><rect x="794.5000000000001" y="345.59999999999997" width="9.6" height="9.6" fill="#4f85bf" stroke="#2f5c98" stroke-width="0.9"/><rect x="807.0500000000001" y="345.59999999999997" width="9.6" height="9.6" fill="#4f85bf" stroke="#2f5c98" stroke-width="0.9"/><rect x="819.6000000000001" y="345.59999999999997" width="9.6" height="9.6" fill="#4f85bf" stroke="#2f5c98" stroke-width="0.9"/><rect x="832.1500000000001" y="345.59999999999997" width="9.6" height="9.6" fill="#4f85bf" stroke="#2f5c98" stroke-width="0.9"/><rect x="844.7" y="345.59999999999997" width="9.6" height="9.6" fill="#4f85bf" stroke="#2f5c98" stroke-width="0.9"/><rect x="857.2500000000001" y="345.59999999999997" width="9.6" height="9.6" fill="#4f85bf" stroke="#2f5c98" stroke-width="0.9"/><rect x="869.8000000000001" y="345.59999999999997" width="9.6" height="9.6" fill="#4f85bf" stroke="#2f5c98" stroke-width="0.9"/><rect x="882.3500000000001" y="345.59999999999997" width="9.6" height="9.6" fill="#4f85bf" stroke="#2f5c98" stroke-width="0.9"/><rect x="894.9000000000001" y="345.59999999999997" width="9.6" height="9.6" fill="#4f85bf" stroke="#2f5c98" stroke-width="0.9"/><rect x="920.0000000000001" y="345.59999999999997" width="9.6" height="9.6" fill="#4f85bf" stroke="#2f5c98" stroke-width="0.9"/><rect x="932.5500000000002" y="345.59999999999997" width="9.6" height="9.6" fill="#4f85bf" stroke="#2f5c98" stroke-width="0.9"/><rect x="719.2" y="358.15" width="9.6" height="9.6" fill="#4f85bf" stroke="#2f5c98" stroke-width="0.9"/><rect x="731.7500000000001" y="358.15" width="9.6" height="9.6" fill="#4f85bf" stroke="#2f5c98" stroke-width="0.9"/><rect x="744.3000000000001" y="358.15" width="9.6" height="9.6" fill="#4f85bf" stroke="#2f5c98" stroke-width="0.9"/><rect x="756.8500000000001" y="358.15" width="9.6" height="9.6" fill="#4f85bf" stroke="#2f5c98" stroke-width="0.9"/><rect x="769.4000000000001" y="358.15" width="9.6" height="9.6" fill="#4f85bf" stroke="#2f5c98" stroke-width="0.9"/><rect x="781.95" y="358.15" width="9.6" height="9.6" fill="#4f85bf" stroke="#2f5c98" stroke-width="0.9"/><rect x="794.5000000000001" y="358.15" width="9.6" height="9.6" fill="#4f85bf" stroke="#2f5c98" stroke-width="0.9"/><rect x="807.0500000000001" y="358.15" width="9.6" height="9.6" fill="#4f85bf" stroke="#2f5c98" stroke-width="0.9"/><rect x="819.6000000000001" y="358.15" width="9.6" height="9.6" fill="#4f85bf" stroke="#2f5c98" stroke-width="0.9"/><rect x="832.1500000000001" y="358.15" width="9.6" height="9.6" fill="#4f85bf" stroke="#2f5c98" stroke-width="0.9"/><rect x="844.7" y="358.15" width="9.6" height="9.6" fill="#4f85bf" stroke="#2f5c98" stroke-width="0.9"/><rect x="857.2500000000001" y="358.15" width="9.6" height="9.6" fill="#4f85bf" stroke="#2f5c98" stroke-width="0.9"/><rect x="869.8000000000001" y="358.15" width="9.6" height="9.6" fill="#4f85bf" stroke="#2f5c98" stroke-width="0.9"/><rect x="882.3500000000001" y="358.15" width="9.6" height="9.6" fill="#4f85bf" stroke="#2f5c98" stroke-width="0.9"/><rect x="894.9000000000001" y="358.15" width="9.6" height="9.6" fill="#4f85bf" stroke="#2f5c98" stroke-width="0.9"/><rect x="920.0000000000001" y="358.15" width="9.6" height="9.6" fill="#4f85bf" stroke="#2f5c98" stroke-width="0.9"/><rect x="932.5500000000002" y="358.15" width="9.6" height="9.6" fill="#4f85bf" stroke="#2f5c98" stroke-width="0.9"/><rect x="694.1000000000001" y="370.7" width="9.6" height="9.6" fill="#4f85bf" stroke="#2f5c98" stroke-width="0.9"/><rect x="706.6500000000001" y="370.7" width="9.6" height="9.6" fill="#4f85bf" stroke="#2f5c98" stroke-width="0.9"/><rect x="719.2" y="370.7" width="9.6" height="9.6" fill="#4f85bf" stroke="#2f5c98" stroke-width="0.9"/><rect x="731.7500000000001" y="370.7" width="9.6" height="9.6" fill="#4f85bf" stroke="#2f5c98" stroke-width="0.9"/><rect x="869.8000000000001" y="370.7" width="9.6" height="9.6" fill="#4f85bf" stroke="#2f5c98" stroke-width="0.9"/><rect x="882.3500000000001" y="370.7" width="9.6" height="9.6" fill="#4f85bf" stroke="#2f5c98" stroke-width="0.9"/><rect x="920.0000000000001" y="370.7" width="9.6" height="9.6" fill="#4f85bf" stroke="#2f5c98" stroke-width="0.9"/><rect x="932.5500000000002" y="370.7" width="9.6" height="9.6" fill="#4f85bf" stroke="#2f5c98" stroke-width="0.9"/><rect x="694.1000000000001" y="383.25" width="9.6" height="9.6" fill="#4f85bf" stroke="#2f5c98" stroke-width="0.9"/><rect x="706.6500000000001" y="383.25" width="9.6" height="9.6" fill="#4f85bf" stroke="#2f5c98" stroke-width="0.9"/><rect x="719.2" y="383.25" width="9.6" height="9.6" fill="#4f85bf" stroke="#2f5c98" stroke-width="0.9"/><rect x="731.7500000000001" y="383.25" width="9.6" height="9.6" fill="#4f85bf" stroke="#2f5c98" stroke-width="0.9"/><rect x="869.8000000000001" y="383.25" width="9.6" height="9.6" fill="#4f85bf" stroke="#2f5c98" stroke-width="0.9"/><rect x="882.3500000000001" y="383.25" width="9.6" height="9.6" fill="#4f85bf" stroke="#2f5c98" stroke-width="0.9"/><rect x="907.45" y="383.25" width="9.6" height="9.6" fill="#4f85bf" stroke="#2f5c98" stroke-width="0.9"/><rect x="920.0000000000001" y="383.25" width="9.6" height="9.6" fill="#4f85bf" stroke="#2f5c98" stroke-width="0.9"/><rect x="932.5500000000002" y="383.25" width="9.6" height="9.6" fill="#4f85bf" stroke="#2f5c98" stroke-width="0.9"/><rect x="694.1000000000001" y="395.8" width="9.6" height="9.6" fill="#4f85bf" stroke="#2f5c98" stroke-width="0.9"/><rect x="706.6500000000001" y="395.8" width="9.6" height="9.6" fill="#4f85bf" stroke="#2f5c98" stroke-width="0.9"/><rect x="719.2" y="395.8" width="9.6" height="9.6" fill="#4f85bf" stroke="#2f5c98" stroke-width="0.9"/><rect x="731.7500000000001" y="395.8" width="9.6" height="9.6" fill="#4f85bf" stroke="#2f5c98" stroke-width="0.9"/><rect x="869.8000000000001" y="395.8" width="9.6" height="9.6" fill="#4f85bf" stroke="#2f5c98" stroke-width="0.9"/><rect x="882.3500000000001" y="395.8" width="9.6" height="9.6" fill="#4f85bf" stroke="#2f5c98" stroke-width="0.9"/><rect x="920.0000000000001" y="395.8" width="9.6" height="9.6" fill="#4f85bf" stroke="#2f5c98" stroke-width="0.9"/><rect x="932.5500000000002" y="395.8" width="9.6" height="9.6" fill="#4f85bf" stroke="#2f5c98" stroke-width="0.9"/><rect x="669.0000000000001" y="408.34999999999997" width="9.6" height="9.6" fill="#4f85bf" stroke="#2f5c98" stroke-width="0.9"/><rect x="681.5500000000001" y="408.34999999999997" width="9.6" height="9.6" fill="#4f85bf" stroke="#2f5c98" stroke-width="0.9"/><rect x="694.1000000000001" y="408.34999999999997" width="9.6" height="9.6" fill="#4f85bf" stroke="#2f5c98" stroke-width="0.9"/><rect x="706.6500000000001" y="408.34999999999997" width="9.6" height="9.6" fill="#4f85bf" stroke="#2f5c98" stroke-width="0.9"/><rect x="719.2" y="408.34999999999997" width="9.6" height="9.6" fill="#4f85bf" stroke="#2f5c98" stroke-width="0.9"/><rect x="731.7500000000001" y="408.34999999999997" width="9.6" height="9.6" fill="#4f85bf" stroke="#2f5c98" stroke-width="0.9"/><rect x="869.8000000000001" y="408.34999999999997" width="9.6" height="9.6" fill="#4f85bf" stroke="#2f5c98" stroke-width="0.9"/><rect x="882.3500000000001" y="408.34999999999997" width="9.6" height="9.6" fill="#4f85bf" stroke="#2f5c98" stroke-width="0.9"/><rect x="907.45" y="408.34999999999997" width="9.6" height="9.6" fill="#4f85bf" stroke="#2f5c98" stroke-width="0.9"/><rect x="920.0000000000001" y="408.34999999999997" width="9.6" height="9.6" fill="#4f85bf" stroke="#2f5c98" stroke-width="0.9"/><rect x="932.5500000000002" y="408.34999999999997" width="9.6" height="9.6" fill="#4f85bf" stroke="#2f5c98" stroke-width="0.9"/><rect x="669.0000000000001" y="420.90000000000003" width="9.6" height="9.6" fill="#4f85bf" stroke="#2f5c98" stroke-width="0.9"/><rect x="681.5500000000001" y="420.90000000000003" width="9.6" height="9.6" fill="#4f85bf" stroke="#2f5c98" stroke-width="0.9"/><rect x="719.2" y="420.90000000000003" width="9.6" height="9.6" fill="#4f85bf" stroke="#2f5c98" stroke-width="0.9"/><rect x="731.7500000000001" y="420.90000000000003" width="9.6" height="9.6" fill="#4f85bf" stroke="#2f5c98" stroke-width="0.9"/><rect x="869.8000000000001" y="420.90000000000003" width="9.6" height="9.6" fill="#4f85bf" stroke="#2f5c98" stroke-width="0.9"/><rect x="882.3500000000001" y="420.90000000000003" width="9.6" height="9.6" fill="#4f85bf" stroke="#2f5c98" stroke-width="0.9"/><rect x="907.45" y="420.90000000000003" width="9.6" height="9.6" fill="#4f85bf" stroke="#2f5c98" stroke-width="0.9"/><rect x="920.0000000000001" y="420.90000000000003" width="9.6" height="9.6" fill="#4f85bf" stroke="#2f5c98" stroke-width="0.9"/><rect x="932.5500000000002" y="420.90000000000003" width="9.6" height="9.6" fill="#4f85bf" stroke="#2f5c98" stroke-width="0.9"/><rect x="669.0000000000001" y="433.45" width="9.6" height="9.6" fill="#4f85bf" stroke="#2f5c98" stroke-width="0.9"/><rect x="681.5500000000001" y="433.45" width="9.6" height="9.6" fill="#4f85bf" stroke="#2f5c98" stroke-width="0.9"/><rect x="694.1000000000001" y="433.45" width="9.6" height="9.6" fill="#4f85bf" stroke="#2f5c98" stroke-width="0.9"/><rect x="719.2" y="433.45" width="9.6" height="9.6" fill="#4f85bf" stroke="#2f5c98" stroke-width="0.9"/><rect x="731.7500000000001" y="433.45" width="9.6" height="9.6" fill="#4f85bf" stroke="#2f5c98" stroke-width="0.9"/><rect x="869.8000000000001" y="433.45" width="9.6" height="9.6" fill="#4f85bf" stroke="#2f5c98" stroke-width="0.9"/><rect x="882.3500000000001" y="433.45" width="9.6" height="9.6" fill="#4f85bf" stroke="#2f5c98" stroke-width="0.9"/><rect x="907.45" y="433.45" width="9.6" height="9.6" fill="#4f85bf" stroke="#2f5c98" stroke-width="0.9"/><rect x="920.0000000000001" y="433.45" width="9.6" height="9.6" fill="#4f85bf" stroke="#2f5c98" stroke-width="0.9"/><rect x="932.5500000000002" y="433.45" width="9.6" height="9.6" fill="#4f85bf" stroke="#2f5c98" stroke-width="0.9"/><rect x="669.0000000000001" y="446.0" width="9.6" height="9.6" fill="#4f85bf" stroke="#2f5c98" stroke-width="0.9"/><rect x="681.5500000000001" y="446.0" width="9.6" height="9.6" fill="#4f85bf" stroke="#2f5c98" stroke-width="0.9"/><rect x="694.1000000000001" y="446.0" width="9.6" height="9.6" fill="#4f85bf" stroke="#2f5c98" stroke-width="0.9"/><rect x="719.2" y="446.0" width="9.6" height="9.6" fill="#4f85bf" stroke="#2f5c98" stroke-width="0.9"/><rect x="731.7500000000001" y="446.0" width="9.6" height="9.6" fill="#4f85bf" stroke="#2f5c98" stroke-width="0.9"/><rect x="769.4000000000001" y="446.0" width="9.6" height="9.6" fill="#4f85bf" stroke="#2f5c98" stroke-width="0.9"/><rect x="781.95" y="446.0" width="9.6" height="9.6" fill="#4f85bf" stroke="#2f5c98" stroke-width="0.9"/><rect x="819.6000000000001" y="446.0" width="9.6" height="9.6" fill="#4f85bf" stroke="#2f5c98" stroke-width="0.9"/><rect x="832.1500000000001" y="446.0" width="9.6" height="9.6" fill="#4f85bf" stroke="#2f5c98" stroke-width="0.9"/><rect x="844.7" y="446.0" width="9.6" height="9.6" fill="#4f85bf" stroke="#2f5c98" stroke-width="0.9"/><rect x="857.2500000000001" y="446.0" width="9.6" height="9.6" fill="#4f85bf" stroke="#2f5c98" stroke-width="0.9"/><rect x="869.8000000000001" y="446.0" width="9.6" height="9.6" fill="#4f85bf" stroke="#2f5c98" stroke-width="0.9"/><rect x="882.3500000000001" y="446.0" width="9.6" height="9.6" fill="#4f85bf" stroke="#2f5c98" stroke-width="0.9"/><rect x="907.45" y="446.0" width="9.6" height="9.6" fill="#4f85bf" stroke="#2f5c98" stroke-width="0.9"/><rect x="920.0000000000001" y="446.0" width="9.6" height="9.6" fill="#4f85bf" stroke="#2f5c98" stroke-width="0.9"/><rect x="932.5500000000002" y="446.0" width="9.6" height="9.6" fill="#4f85bf" stroke="#2f5c98" stroke-width="0.9"/><rect x="669.0000000000001" y="458.55" width="9.6" height="9.6" fill="#4f85bf" stroke="#2f5c98" stroke-width="0.9"/><rect x="694.1000000000001" y="458.55" width="9.6" height="9.6" fill="#4f85bf" stroke="#2f5c98" stroke-width="0.9"/><rect x="731.7500000000001" y="458.55" width="9.6" height="9.6" fill="#4f85bf" stroke="#2f5c98" stroke-width="0.9"/><rect x="819.6000000000001" y="458.55" width="9.6" height="9.6" fill="#4f85bf" stroke="#2f5c98" stroke-width="0.9"/><rect x="832.1500000000001" y="458.55" width="9.6" height="9.6" fill="#4f85bf" stroke="#2f5c98" stroke-width="0.9"/><rect x="844.7" y="458.55" width="9.6" height="9.6" fill="#4f85bf" stroke="#2f5c98" stroke-width="0.9"/><rect x="857.2500000000001" y="458.55" width="9.6" height="9.6" fill="#4f85bf" stroke="#2f5c98" stroke-width="0.9"/><rect x="869.8000000000001" y="458.55" width="9.6" height="9.6" fill="#4f85bf" stroke="#2f5c98" stroke-width="0.9"/><rect x="882.3500000000001" y="458.55" width="9.6" height="9.6" fill="#4f85bf" stroke="#2f5c98" stroke-width="0.9"/><rect x="907.45" y="458.55" width="9.6" height="9.6" fill="#4f85bf" stroke="#2f5c98" stroke-width="0.9"/><rect x="932.5500000000002" y="458.55" width="9.6" height="9.6" fill="#4f85bf" stroke="#2f5c98" stroke-width="0.9"/><rect x="669.0000000000001" y="471.09999999999997" width="9.6" height="9.6" fill="#4f85bf" stroke="#2f5c98" stroke-width="0.9"/><rect x="694.1000000000001" y="471.09999999999997" width="9.6" height="9.6" fill="#4f85bf" stroke="#2f5c98" stroke-width="0.9"/><rect x="719.2" y="471.09999999999997" width="9.6" height="9.6" fill="#4f85bf" stroke="#2f5c98" stroke-width="0.9"/><rect x="744.3000000000001" y="471.09999999999997" width="9.6" height="9.6" fill="#4f85bf" stroke="#2f5c98" stroke-width="0.9"/><rect x="769.4000000000001" y="471.09999999999997" width="9.6" height="9.6" fill="#4f85bf" stroke="#2f5c98" stroke-width="0.9"/><rect x="781.95" y="471.09999999999997" width="9.6" height="9.6" fill="#4f85bf" stroke="#2f5c98" stroke-width="0.9"/><rect x="794.5000000000001" y="471.09999999999997" width="9.6" height="9.6" fill="#4f85bf" stroke="#2f5c98" stroke-width="0.9"/><rect x="907.45" y="471.09999999999997" width="9.6" height="9.6" fill="#4f85bf" stroke="#2f5c98" stroke-width="0.9"/><rect x="932.5500000000002" y="471.09999999999997" width="9.6" height="9.6" fill="#4f85bf" stroke="#2f5c98" stroke-width="0.9"/><rect x="694.1000000000001" y="483.65000000000003" width="9.6" height="9.6" fill="#4f85bf" stroke="#2f5c98" stroke-width="0.9"/><rect x="706.6500000000001" y="483.65000000000003" width="9.6" height="9.6" fill="#4f85bf" stroke="#2f5c98" stroke-width="0.9"/><rect x="744.3000000000001" y="483.65000000000003" width="9.6" height="9.6" fill="#4f85bf" stroke="#2f5c98" stroke-width="0.9"/><rect x="794.5000000000001" y="483.65000000000003" width="9.6" height="9.6" fill="#4f85bf" stroke="#2f5c98" stroke-width="0.9"/><rect x="832.1500000000001" y="483.65000000000003" width="9.6" height="9.6" fill="#4f85bf" stroke="#2f5c98" stroke-width="0.9"/><rect x="844.7" y="483.65000000000003" width="9.6" height="9.6" fill="#4f85bf" stroke="#2f5c98" stroke-width="0.9"/><rect x="857.2500000000001" y="483.65000000000003" width="9.6" height="9.6" fill="#4f85bf" stroke="#2f5c98" stroke-width="0.9"/><rect x="869.8000000000001" y="483.65000000000003" width="9.6" height="9.6" fill="#4f85bf" stroke="#2f5c98" stroke-width="0.9"/><rect x="894.9000000000001" y="483.65000000000003" width="9.6" height="9.6" fill="#4f85bf" stroke="#2f5c98" stroke-width="0.9"/><rect x="907.45" y="483.65000000000003" width="9.6" height="9.6" fill="#4f85bf" stroke="#2f5c98" stroke-width="0.9"/><rect x="669.0000000000001" y="496.2" width="9.6" height="9.6" fill="#4f85bf" stroke="#2f5c98" stroke-width="0.9"/><rect x="744.3000000000001" y="496.2" width="9.6" height="9.6" fill="#4f85bf" stroke="#2f5c98" stroke-width="0.9"/><rect x="756.8500000000001" y="496.2" width="9.6" height="9.6" fill="#4f85bf" stroke="#2f5c98" stroke-width="0.9"/><rect x="769.4000000000001" y="496.2" width="9.6" height="9.6" fill="#4f85bf" stroke="#2f5c98" stroke-width="0.9"/><rect x="781.95" y="496.2" width="9.6" height="9.6" fill="#4f85bf" stroke="#2f5c98" stroke-width="0.9"/><rect x="832.1500000000001" y="496.2" width="9.6" height="9.6" fill="#4f85bf" stroke="#2f5c98" stroke-width="0.9"/><rect x="844.7" y="496.2" width="9.6" height="9.6" fill="#4f85bf" stroke="#2f5c98" stroke-width="0.9"/><rect x="857.2500000000001" y="496.2" width="9.6" height="9.6" fill="#4f85bf" stroke="#2f5c98" stroke-width="0.9"/><rect x="869.8000000000001" y="496.2" width="9.6" height="9.6" fill="#4f85bf" stroke="#2f5c98" stroke-width="0.9"/><rect x="932.5500000000002" y="496.2" width="9.6" height="9.6" fill="#4f85bf" stroke="#2f5c98" stroke-width="0.9"/><rect x="669.0000000000001" y="508.74999999999994" width="9.6" height="9.6" fill="#4f85bf" stroke="#2f5c98" stroke-width="0.9"/><rect x="706.6500000000001" y="508.74999999999994" width="9.6" height="9.6" fill="#4f85bf" stroke="#2f5c98" stroke-width="0.9"/><rect x="744.3000000000001" y="508.74999999999994" width="9.6" height="9.6" fill="#4f85bf" stroke="#2f5c98" stroke-width="0.9"/><rect x="756.8500000000001" y="508.74999999999994" width="9.6" height="9.6" fill="#4f85bf" stroke="#2f5c98" stroke-width="0.9"/><rect x="769.4000000000001" y="508.74999999999994" width="9.6" height="9.6" fill="#4f85bf" stroke="#2f5c98" stroke-width="0.9"/><rect x="819.6000000000001" y="508.74999999999994" width="9.6" height="9.6" fill="#4f85bf" stroke="#2f5c98" stroke-width="0.9"/><rect x="857.2500000000001" y="508.74999999999994" width="9.6" height="9.6" fill="#4f85bf" stroke="#2f5c98" stroke-width="0.9"/><rect x="894.9000000000001" y="508.74999999999994" width="9.6" height="9.6" fill="#4f85bf" stroke="#2f5c98" stroke-width="0.9"/><rect x="907.45" y="508.74999999999994" width="9.6" height="9.6" fill="#4f85bf" stroke="#2f5c98" stroke-width="0.9"/><rect x="920.0000000000001" y="508.74999999999994" width="9.6" height="9.6" fill="#4f85bf" stroke="#2f5c98" stroke-width="0.9"/><rect x="932.5500000000002" y="508.74999999999994" width="9.6" height="9.6" fill="#4f85bf" stroke="#2f5c98" stroke-width="0.9"/><rect x="681.5500000000001" y="521.3000000000001" width="9.6" height="9.6" fill="#4f85bf" stroke="#2f5c98" stroke-width="0.9"/><rect x="694.1000000000001" y="521.3000000000001" width="9.6" height="9.6" fill="#4f85bf" stroke="#2f5c98" stroke-width="0.9"/><rect x="706.6500000000001" y="521.3000000000001" width="9.6" height="9.6" fill="#4f85bf" stroke="#2f5c98" stroke-width="0.9"/><rect x="731.7500000000001" y="521.3000000000001" width="9.6" height="9.6" fill="#4f85bf" stroke="#2f5c98" stroke-width="0.9"/><rect x="744.3000000000001" y="521.3000000000001" width="9.6" height="9.6" fill="#4f85bf" stroke="#2f5c98" stroke-width="0.9"/><rect x="756.8500000000001" y="521.3000000000001" width="9.6" height="9.6" fill="#4f85bf" stroke="#2f5c98" stroke-width="0.9"/><rect x="794.5000000000001" y="521.3000000000001" width="9.6" height="9.6" fill="#4f85bf" stroke="#2f5c98" stroke-width="0.9"/><rect x="807.0500000000001" y="521.3000000000001" width="9.6" height="9.6" fill="#4f85bf" stroke="#2f5c98" stroke-width="0.9"/><rect x="819.6000000000001" y="521.3000000000001" width="9.6" height="9.6" fill="#4f85bf" stroke="#2f5c98" stroke-width="0.9"/><rect x="832.1500000000001" y="521.3000000000001" width="9.6" height="9.6" fill="#4f85bf" stroke="#2f5c98" stroke-width="0.9"/><rect x="844.7" y="521.3000000000001" width="9.6" height="9.6" fill="#4f85bf" stroke="#2f5c98" stroke-width="0.9"/><rect x="857.2500000000001" y="521.3000000000001" width="9.6" height="9.6" fill="#4f85bf" stroke="#2f5c98" stroke-width="0.9"/><rect x="869.8000000000001" y="521.3000000000001" width="9.6" height="9.6" fill="#4f85bf" stroke="#2f5c98" stroke-width="0.9"/><rect x="882.3500000000001" y="521.3000000000001" width="9.6" height="9.6" fill="#4f85bf" stroke="#2f5c98" stroke-width="0.9"/><rect x="932.5500000000002" y="521.3000000000001" width="9.6" height="9.6" fill="#4f85bf" stroke="#2f5c98" stroke-width="0.9"/><rect x="681.5500000000001" y="533.8500000000001" width="9.6" height="9.6" fill="#4f85bf" stroke="#2f5c98" stroke-width="0.9"/><rect x="694.1000000000001" y="533.8500000000001" width="9.6" height="9.6" fill="#4f85bf" stroke="#2f5c98" stroke-width="0.9"/><rect x="706.6500000000001" y="533.8500000000001" width="9.6" height="9.6" fill="#4f85bf" stroke="#2f5c98" stroke-width="0.9"/><rect x="731.7500000000001" y="533.8500000000001" width="9.6" height="9.6" fill="#4f85bf" stroke="#2f5c98" stroke-width="0.9"/><rect x="744.3000000000001" y="533.8500000000001" width="9.6" height="9.6" fill="#4f85bf" stroke="#2f5c98" stroke-width="0.9"/><rect x="756.8500000000001" y="533.8500000000001" width="9.6" height="9.6" fill="#4f85bf" stroke="#2f5c98" stroke-width="0.9"/><rect x="769.4000000000001" y="533.8500000000001" width="9.6" height="9.6" fill="#4f85bf" stroke="#2f5c98" stroke-width="0.9"/><rect x="781.95" y="533.8500000000001" width="9.6" height="9.6" fill="#4f85bf" stroke="#2f5c98" stroke-width="0.9"/><rect x="819.6000000000001" y="533.8500000000001" width="9.6" height="9.6" fill="#4f85bf" stroke="#2f5c98" stroke-width="0.9"/><rect x="844.7" y="533.8500000000001" width="9.6" height="9.6" fill="#4f85bf" stroke="#2f5c98" stroke-width="0.9"/><rect x="882.3500000000001" y="533.8500000000001" width="9.6" height="9.6" fill="#4f85bf" stroke="#2f5c98" stroke-width="0.9"/><rect x="894.9000000000001" y="533.8500000000001" width="9.6" height="9.6" fill="#4f85bf" stroke="#2f5c98" stroke-width="0.9"/><rect x="920.0000000000001" y="533.8500000000001" width="9.6" height="9.6" fill="#4f85bf" stroke="#2f5c98" stroke-width="0.9"/><rect x="932.5500000000002" y="533.8500000000001" width="9.6" height="9.6" fill="#4f85bf" stroke="#2f5c98" stroke-width="0.9"/><rect x="957.6500000000001" y="546.4000000000001" width="9.6" height="9.6" fill="#4f85bf" stroke="#2f5c98" stroke-width="0.9"/><rect x="957.6500000000001" y="558.95" width="9.6" height="9.6" fill="#4f85bf" stroke="#2f5c98" stroke-width="0.9"/><path d="M692.9000000000001 256.25 h12" stroke="#b070c0" stroke-width="0.8"/><circle cx="698.9000000000001" cy="250.0" r="2.4" fill="#d8c470"/><path d="M943.9000000000001 256.25 h12" stroke="#b070c0" stroke-width="0.8"/><circle cx="949.9000000000001" cy="250.0" r="2.4" fill="#d8c470"/><path d="M692.9000000000001 268.8 h12" stroke="#b070c0" stroke-width="0.8"/><circle cx="698.9000000000001" cy="262.55" r="2.4" fill="#d8c470"/><path d="M918.8000000000001 268.8 h12" stroke="#b070c0" stroke-width="0.8"/><circle cx="924.8000000000001" cy="262.55" r="2.4" fill="#d8c470"/><path d="M943.9000000000001 268.8 h12" stroke="#b070c0" stroke-width="0.8"/><circle cx="949.9000000000001" cy="262.55" r="2.4" fill="#d8c470"/><path d="M956.45 268.8 h12" stroke="#b070c0" stroke-width="0.8"/><circle cx="962.45" cy="262.55" r="2.4" fill="#d8c470"/><path d="M692.9000000000001 281.35 h12" stroke="#b070c0" stroke-width="0.8"/><circle cx="698.9000000000001" cy="275.1" r="2.4" fill="#d8c470"/><path d="M705.45 281.35 h12" stroke="#b070c0" stroke-width="0.8"/><circle cx="711.45" cy="275.1" r="2.4" fill="#d8c470"/><path d="M906.25 281.35 h12" stroke="#b070c0" stroke-width="0.8"/><circle cx="912.25" cy="275.1" r="2.4" fill="#d8c470"/><path d="M918.8000000000001 281.35 h12" stroke="#b070c0" stroke-width="0.8"/><circle cx="924.8000000000001" cy="275.1" r="2.4" fill="#d8c470"/><path d="M667.8000000000001 293.9 h12" stroke="#b070c0" stroke-width="0.8"/><circle cx="673.8000000000001" cy="287.65" r="2.4" fill="#d8c470"/><path d="M705.45 293.9 h12" stroke="#b070c0" stroke-width="0.8"/><circle cx="711.45" cy="287.65" r="2.4" fill="#d8c470"/><path d="M718.0 293.9 h12" stroke="#b070c0" stroke-width="0.8"/><circle cx="724.0" cy="287.65" r="2.4" fill="#d8c470"/><path d="M730.5500000000001 293.9 h12" stroke="#b070c0" stroke-width="0.8"/><circle cx="736.5500000000001" cy="287.65" r="2.4" fill="#d8c470"/><path d="M743.1 293.9 h12" stroke="#b070c0" stroke-width="0.8"/><circle cx="749.1" cy="287.65" r="2.4" fill="#d8c470"/><path d="M755.6500000000001 293.9 h12" stroke="#b070c0" stroke-width="0.8"/><circle cx="761.6500000000001" cy="287.65" r="2.4" fill="#d8c470"/><path d="M768.2 293.9 h12" stroke="#b070c0" stroke-width="0.8"/><circle cx="774.2" cy="287.65" r="2.4" fill="#d8c470"/><path d="M780.75 293.9 h12" stroke="#b070c0" stroke-width="0.8"/><circle cx="786.75" cy="287.65" r="2.4" fill="#d8c470"/><path d="M793.3000000000001 293.9 h12" stroke="#b070c0" stroke-width="0.8"/><circle cx="799.3000000000001" cy="287.65" r="2.4" fill="#d8c470"/><path d="M805.85 293.9 h12" stroke="#b070c0" stroke-width="0.8"/><circle cx="811.85" cy="287.65" r="2.4" fill="#d8c470"/><path d="M818.4000000000001 293.9 h12" stroke="#b070c0" stroke-width="0.8"/><circle cx="824.4000000000001" cy="287.65" r="2.4" fill="#d8c470"/><path d="M830.95 293.9 h12" stroke="#b070c0" stroke-width="0.8"/><circle cx="836.95" cy="287.65" r="2.4" fill="#d8c470"/><path d="M843.5 293.9 h12" stroke="#b070c0" stroke-width="0.8"/><circle cx="849.5" cy="287.65" r="2.4" fill="#d8c470"/><path d="M856.0500000000001 293.9 h12" stroke="#b070c0" stroke-width="0.8"/><circle cx="862.0500000000001" cy="287.65" r="2.4" fill="#d8c470"/><path d="M868.6 293.9 h12" stroke="#b070c0" stroke-width="0.8"/><circle cx="874.6" cy="287.65" r="2.4" fill="#d8c470"/><path d="M881.1500000000001 293.9 h12" stroke="#b070c0" stroke-width="0.8"/><circle cx="887.1500000000001" cy="287.65" r="2.4" fill="#d8c470"/><path d="M893.7 293.9 h12" stroke="#b070c0" stroke-width="0.8"/><circle cx="899.7" cy="287.65" r="2.4" fill="#d8c470"/><path d="M906.25 293.9 h12" stroke="#b070c0" stroke-width="0.8"/><circle cx="912.25" cy="287.65" r="2.4" fill="#d8c470"/><path d="M918.8000000000001 293.9 h12" stroke="#b070c0" stroke-width="0.8"/><circle cx="924.8000000000001" cy="287.65" r="2.4" fill="#d8c470"/><path d="M931.3500000000001 293.9 h12" stroke="#b070c0" stroke-width="0.8"/><circle cx="937.3500000000001" cy="287.65" r="2.4" fill="#d8c470"/><path d="M667.8000000000001 306.45 h12" stroke="#b070c0" stroke-width="0.8"/><circle cx="673.8000000000001" cy="300.2" r="2.4" fill="#d8c470"/><path d="M705.45 306.45 h12" stroke="#b070c0" stroke-width="0.8"/><circle cx="711.45" cy="300.2" r="2.4" fill="#d8c470"/><path d="M718.0 306.45 h12" stroke="#b070c0" stroke-width="0.8"/><circle cx="724.0" cy="300.2" r="2.4" fill="#d8c470"/><path d="M730.5500000000001 306.45 h12" stroke="#b070c0" stroke-width="0.8"/><circle cx="736.5500000000001" cy="300.2" r="2.4" fill="#d8c470"/><path d="M743.1 306.45 h12" stroke="#b070c0" stroke-width="0.8"/><circle cx="749.1" cy="300.2" r="2.4" fill="#d8c470"/><path d="M755.6500000000001 306.45 h12" stroke="#b070c0" stroke-width="0.8"/><circle cx="761.6500000000001" cy="300.2" r="2.4" fill="#d8c470"/><path d="M768.2 306.45 h12" stroke="#b070c0" stroke-width="0.8"/><circle cx="774.2" cy="300.2" r="2.4" fill="#d8c470"/><path d="M780.75 306.45 h12" stroke="#b070c0" stroke-width="0.8"/><circle cx="786.75" cy="300.2" r="2.4" fill="#d8c470"/><path d="M793.3000000000001 306.45 h12" stroke="#b070c0" stroke-width="0.8"/><circle cx="799.3000000000001" cy="300.2" r="2.4" fill="#d8c470"/><path d="M805.85 306.45 h12" stroke="#b070c0" stroke-width="0.8"/><circle cx="811.85" cy="300.2" r="2.4" fill="#d8c470"/><path d="M818.4000000000001 306.45 h12" stroke="#b070c0" stroke-width="0.8"/><circle cx="824.4000000000001" cy="300.2" r="2.4" fill="#d8c470"/><path d="M830.95 306.45 h12" stroke="#b070c0" stroke-width="0.8"/><circle cx="836.95" cy="300.2" r="2.4" fill="#d8c470"/><path d="M843.5 306.45 h12" stroke="#b070c0" stroke-width="0.8"/><circle cx="849.5" cy="300.2" r="2.4" fill="#d8c470"/><path d="M856.0500000000001 306.45 h12" stroke="#b070c0" stroke-width="0.8"/><circle cx="862.0500000000001" cy="300.2" r="2.4" fill="#d8c470"/><path d="M868.6 306.45 h12" stroke="#b070c0" stroke-width="0.8"/><circle cx="874.6" cy="300.2" r="2.4" fill="#d8c470"/><path d="M881.1500000000001 306.45 h12" stroke="#b070c0" stroke-width="0.8"/><circle cx="887.1500000000001" cy="300.2" r="2.4" fill="#d8c470"/><path d="M893.7 306.45 h12" stroke="#b070c0" stroke-width="0.8"/><circle cx="899.7" cy="300.2" r="2.4" fill="#d8c470"/><path d="M918.8000000000001 319.0 h12" stroke="#b070c0" stroke-width="0.8"/><circle cx="924.8000000000001" cy="312.75" r="2.4" fill="#d8c470"/><path d="M931.3500000000001 319.0 h12" stroke="#b070c0" stroke-width="0.8"/><circle cx="937.3500000000001" cy="312.75" r="2.4" fill="#d8c470"/><path d="M718.0 331.55 h12" stroke="#b070c0" stroke-width="0.8"/><circle cx="724.0" cy="325.3" r="2.4" fill="#d8c470"/><path d="M768.2 331.55 h12" stroke="#b070c0" stroke-width="0.8"/><circle cx="774.2" cy="325.3" r="2.4" fill="#d8c470"/><path d="M805.85 331.55 h12" stroke="#b070c0" stroke-width="0.8"/><circle cx="811.85" cy="325.3" r="2.4" fill="#d8c470"/><path d="M818.4000000000001 331.55 h12" stroke="#b070c0" stroke-width="0.8"/><circle cx="824.4000000000001" cy="325.3" r="2.4" fill="#d8c470"/><path d="M918.8000000000001 331.55 h12" stroke="#b070c0" stroke-width="0.8"/><circle cx="924.8000000000001" cy="325.3" r="2.4" fill="#d8c470"/><path d="M931.3500000000001 331.55 h12" stroke="#b070c0" stroke-width="0.8"/><circle cx="937.3500000000001" cy="325.3" r="2.4" fill="#d8c470"/><path d="M692.9000000000001 344.1 h12" stroke="#b070c0" stroke-width="0.8"/><circle cx="698.9000000000001" cy="337.85" r="2.4" fill="#d8c470"/><path d="M705.45 344.1 h12" stroke="#b070c0" stroke-width="0.8"/><circle cx="711.45" cy="337.85" r="2.4" fill="#d8c470"/><path d="M718.0 344.1 h12" stroke="#b070c0" stroke-width="0.8"/><circle cx="724.0" cy="337.85" r="2.4" fill="#d8c470"/><path d="M768.2 344.1 h12" stroke="#b070c0" stroke-width="0.8"/><circle cx="774.2" cy="337.85" r="2.4" fill="#d8c470"/><path d="M818.4000000000001 344.1 h12" stroke="#b070c0" stroke-width="0.8"/><circle cx="824.4000000000001" cy="337.85" r="2.4" fill="#d8c470"/><path d="M918.8000000000001 344.1 h12" stroke="#b070c0" stroke-width="0.8"/><circle cx="924.8000000000001" cy="337.85" r="2.4" fill="#d8c470"/><path d="M931.3500000000001 344.1 h12" stroke="#b070c0" stroke-width="0.8"/><circle cx="937.3500000000001" cy="337.85" r="2.4" fill="#d8c470"/><path d="M692.9000000000001 356.65 h12" stroke="#b070c0" stroke-width="0.8"/><circle cx="698.9000000000001" cy="350.4" r="2.4" fill="#d8c470"/><path d="M705.45 356.65 h12" stroke="#b070c0" stroke-width="0.8"/><circle cx="711.45" cy="350.4" r="2.4" fill="#d8c470"/><path d="M718.0 356.65 h12" stroke="#b070c0" stroke-width="0.8"/><circle cx="724.0" cy="350.4" r="2.4" fill="#d8c470"/><path d="M730.5500000000001 356.65 h12" stroke="#b070c0" stroke-width="0.8"/><circle cx="736.5500000000001" cy="350.4" r="2.4" fill="#d8c470"/><path d="M743.1 356.65 h12" stroke="#b070c0" stroke-width="0.8"/><circle cx="749.1" cy="350.4" r="2.4" fill="#d8c470"/><path d="M755.6500000000001 356.65 h12" stroke="#b070c0" stroke-width="0.8"/><circle cx="761.6500000000001" cy="350.4" r="2.4" fill="#d8c470"/><path d="M768.2 356.65 h12" stroke="#b070c0" stroke-width="0.8"/><circle cx="774.2" cy="350.4" r="2.4" fill="#d8c470"/><path d="M780.75 356.65 h12" stroke="#b070c0" stroke-width="0.8"/><circle cx="786.75" cy="350.4" r="2.4" fill="#d8c470"/><path d="M793.3000000000001 356.65 h12" stroke="#b070c0" stroke-width="0.8"/><circle cx="799.3000000000001" cy="350.4" r="2.4" fill="#d8c470"/><path d="M805.85 356.65 h12" stroke="#b070c0" stroke-width="0.8"/><circle cx="811.85" cy="350.4" r="2.4" fill="#d8c470"/><path d="M818.4000000000001 356.65 h12" stroke="#b070c0" stroke-width="0.8"/><circle cx="824.4000000000001" cy="350.4" r="2.4" fill="#d8c470"/><path d="M830.95 356.65 h12" stroke="#b070c0" stroke-width="0.8"/><circle cx="836.95" cy="350.4" r="2.4" fill="#d8c470"/><path d="M843.5 356.65 h12" stroke="#b070c0" stroke-width="0.8"/><circle cx="849.5" cy="350.4" r="2.4" fill="#d8c470"/><path d="M856.0500000000001 356.65 h12" stroke="#b070c0" stroke-width="0.8"/><circle cx="862.0500000000001" cy="350.4" r="2.4" fill="#d8c470"/><path d="M868.6 356.65 h12" stroke="#b070c0" stroke-width="0.8"/><circle cx="874.6" cy="350.4" r="2.4" fill="#d8c470"/><path d="M881.1500000000001 356.65 h12" stroke="#b070c0" stroke-width="0.8"/><circle cx="887.1500000000001" cy="350.4" r="2.4" fill="#d8c470"/><path d="M893.7 356.65 h12" stroke="#b070c0" stroke-width="0.8"/><circle cx="899.7" cy="350.4" r="2.4" fill="#d8c470"/><path d="M918.8000000000001 356.65 h12" stroke="#b070c0" stroke-width="0.8"/><circle cx="924.8000000000001" cy="350.4" r="2.4" fill="#d8c470"/><path d="M931.3500000000001 356.65 h12" stroke="#b070c0" stroke-width="0.8"/><circle cx="937.3500000000001" cy="350.4" r="2.4" fill="#d8c470"/><path d="M718.0 369.2 h12" stroke="#b070c0" stroke-width="0.8"/><circle cx="724.0" cy="362.95" r="2.4" fill="#d8c470"/><path d="M730.5500000000001 369.2 h12" stroke="#b070c0" stroke-width="0.8"/><circle cx="736.5500000000001" cy="362.95" r="2.4" fill="#d8c470"/><path d="M743.1 369.2 h12" stroke="#b070c0" stroke-width="0.8"/><circle cx="749.1" cy="362.95" r="2.4" fill="#d8c470"/><path d="M755.6500000000001 369.2 h12" stroke="#b070c0" stroke-width="0.8"/><circle cx="761.6500000000001" cy="362.95" r="2.4" fill="#d8c470"/><path d="M768.2 369.2 h12" stroke="#b070c0" stroke-width="0.8"/><circle cx="774.2" cy="362.95" r="2.4" fill="#d8c470"/><path d="M780.75 369.2 h12" stroke="#b070c0" stroke-width="0.8"/><circle cx="786.75" cy="362.95" r="2.4" fill="#d8c470"/><path d="M793.3000000000001 369.2 h12" stroke="#b070c0" stroke-width="0.8"/><circle cx="799.3000000000001" cy="362.95" r="2.4" fill="#d8c470"/><path d="M805.85 369.2 h12" stroke="#b070c0" stroke-width="0.8"/><circle cx="811.85" cy="362.95" r="2.4" fill="#d8c470"/><path d="M818.4000000000001 369.2 h12" stroke="#b070c0" stroke-width="0.8"/><circle cx="824.4000000000001" cy="362.95" r="2.4" fill="#d8c470"/><path d="M830.95 369.2 h12" stroke="#b070c0" stroke-width="0.8"/><circle cx="836.95" cy="362.95" r="2.4" fill="#d8c470"/><path d="M843.5 369.2 h12" stroke="#b070c0" stroke-width="0.8"/><circle cx="849.5" cy="362.95" r="2.4" fill="#d8c470"/><path d="M856.0500000000001 369.2 h12" stroke="#b070c0" stroke-width="0.8"/><circle cx="862.0500000000001" cy="362.95" r="2.4" fill="#d8c470"/><path d="M868.6 369.2 h12" stroke="#b070c0" stroke-width="0.8"/><circle cx="874.6" cy="362.95" r="2.4" fill="#d8c470"/><path d="M881.1500000000001 369.2 h12" stroke="#b070c0" stroke-width="0.8"/><circle cx="887.1500000000001" cy="362.95" r="2.4" fill="#d8c470"/><path d="M893.7 369.2 h12" stroke="#b070c0" stroke-width="0.8"/><circle cx="899.7" cy="362.95" r="2.4" fill="#d8c470"/><path d="M918.8000000000001 369.2 h12" stroke="#b070c0" stroke-width="0.8"/><circle cx="924.8000000000001" cy="362.95" r="2.4" fill="#d8c470"/><path d="M931.3500000000001 369.2 h12" stroke="#b070c0" stroke-width="0.8"/><circle cx="937.3500000000001" cy="362.95" r="2.4" fill="#d8c470"/><path d="M692.9000000000001 381.75 h12" stroke="#b070c0" stroke-width="0.8"/><circle cx="698.9000000000001" cy="375.5" r="2.4" fill="#d8c470"/><path d="M705.45 381.75 h12" stroke="#b070c0" stroke-width="0.8"/><circle cx="711.45" cy="375.5" r="2.4" fill="#d8c470"/><path d="M718.0 381.75 h12" stroke="#b070c0" stroke-width="0.8"/><circle cx="724.0" cy="375.5" r="2.4" fill="#d8c470"/><path d="M730.5500000000001 381.75 h12" stroke="#b070c0" stroke-width="0.8"/><circle cx="736.5500000000001" cy="375.5" r="2.4" fill="#d8c470"/><path d="M868.6 381.75 h12" stroke="#b070c0" stroke-width="0.8"/><circle cx="874.6" cy="375.5" r="2.4" fill="#d8c470"/><path d="M881.1500000000001 381.75 h12" stroke="#b070c0" stroke-width="0.8"/><circle cx="887.1500000000001" cy="375.5" r="2.4" fill="#d8c470"/><path d="M918.8000000000001 381.75 h12" stroke="#b070c0" stroke-width="0.8"/><circle cx="924.8000000000001" cy="375.5" r="2.4" fill="#d8c470"/><path d="M931.3500000000001 381.75 h12" stroke="#b070c0" stroke-width="0.8"/><circle cx="937.3500000000001" cy="375.5" r="2.4" fill="#d8c470"/><path d="M692.9000000000001 394.3 h12" stroke="#b070c0" stroke-width="0.8"/><circle cx="698.9000000000001" cy="388.05" r="2.4" fill="#d8c470"/><path d="M705.45 394.3 h12" stroke="#b070c0" stroke-width="0.8"/><circle cx="711.45" cy="388.05" r="2.4" fill="#d8c470"/><path d="M718.0 394.3 h12" stroke="#b070c0" stroke-width="0.8"/><circle cx="724.0" cy="388.05" r="2.4" fill="#d8c470"/><path d="M730.5500000000001 394.3 h12" stroke="#b070c0" stroke-width="0.8"/><circle cx="736.5500000000001" cy="388.05" r="2.4" fill="#d8c470"/><path d="M868.6 394.3 h12" stroke="#b070c0" stroke-width="0.8"/><circle cx="874.6" cy="388.05" r="2.4" fill="#d8c470"/><path d="M881.1500000000001 394.3 h12" stroke="#b070c0" stroke-width="0.8"/><circle cx="887.1500000000001" cy="388.05" r="2.4" fill="#d8c470"/><path d="M906.25 394.3 h12" stroke="#b070c0" stroke-width="0.8"/><circle cx="912.25" cy="388.05" r="2.4" fill="#d8c470"/><path d="M918.8000000000001 394.3 h12" stroke="#b070c0" stroke-width="0.8"/><circle cx="924.8000000000001" cy="388.05" r="2.4" fill="#d8c470"/><path d="M931.3500000000001 394.3 h12" stroke="#b070c0" stroke-width="0.8"/><circle cx="937.3500000000001" cy="388.05" r="2.4" fill="#d8c470"/><path d="M692.9000000000001 406.85 h12" stroke="#b070c0" stroke-width="0.8"/><circle cx="698.9000000000001" cy="400.6" r="2.4" fill="#d8c470"/><path d="M705.45 406.85 h12" stroke="#b070c0" stroke-width="0.8"/><circle cx="711.45" cy="400.6" r="2.4" fill="#d8c470"/><path d="M718.0 406.85 h12" stroke="#b070c0" stroke-width="0.8"/><circle cx="724.0" cy="400.6" r="2.4" fill="#d8c470"/><path d="M730.5500000000001 406.85 h12" stroke="#b070c0" stroke-width="0.8"/><circle cx="736.5500000000001" cy="400.6" r="2.4" fill="#d8c470"/><path d="M868.6 406.85 h12" stroke="#b070c0" stroke-width="0.8"/><circle cx="874.6" cy="400.6" r="2.4" fill="#d8c470"/><path d="M881.1500000000001 406.85 h12" stroke="#b070c0" stroke-width="0.8"/><circle cx="887.1500000000001" cy="400.6" r="2.4" fill="#d8c470"/><path d="M918.8000000000001 406.85 h12" stroke="#b070c0" stroke-width="0.8"/><circle cx="924.8000000000001" cy="400.6" r="2.4" fill="#d8c470"/><path d="M931.3500000000001 406.85 h12" stroke="#b070c0" stroke-width="0.8"/><circle cx="937.3500000000001" cy="400.6" r="2.4" fill="#d8c470"/><path d="M667.8000000000001 419.4 h12" stroke="#b070c0" stroke-width="0.8"/><circle cx="673.8000000000001" cy="413.15" r="2.4" fill="#d8c470"/><path d="M680.35 419.4 h12" stroke="#b070c0" stroke-width="0.8"/><circle cx="686.35" cy="413.15" r="2.4" fill="#d8c470"/><path d="M692.9000000000001 419.4 h12" stroke="#b070c0" stroke-width="0.8"/><circle cx="698.9000000000001" cy="413.15" r="2.4" fill="#d8c470"/><path d="M705.45 419.4 h12" stroke="#b070c0" stroke-width="0.8"/><circle cx="711.45" cy="413.15" r="2.4" fill="#d8c470"/><path d="M718.0 419.4 h12" stroke="#b070c0" stroke-width="0.8"/><circle cx="724.0" cy="413.15" r="2.4" fill="#d8c470"/><path d="M730.5500000000001 419.4 h12" stroke="#b070c0" stroke-width="0.8"/><circle cx="736.5500000000001" cy="413.15" r="2.4" fill="#d8c470"/><path d="M868.6 419.4 h12" stroke="#b070c0" stroke-width="0.8"/><circle cx="874.6" cy="413.15" r="2.4" fill="#d8c470"/><path d="M881.1500000000001 419.4 h12" stroke="#b070c0" stroke-width="0.8"/><circle cx="887.1500000000001" cy="413.15" r="2.4" fill="#d8c470"/><path d="M906.25 419.4 h12" stroke="#b070c0" stroke-width="0.8"/><circle cx="912.25" cy="413.15" r="2.4" fill="#d8c470"/><path d="M918.8000000000001 419.4 h12" stroke="#b070c0" stroke-width="0.8"/><circle cx="924.8000000000001" cy="413.15" r="2.4" fill="#d8c470"/><path d="M931.3500000000001 419.4 h12" stroke="#b070c0" stroke-width="0.8"/><circle cx="937.3500000000001" cy="413.15" r="2.4" fill="#d8c470"/><path d="M667.8000000000001 431.95000000000005 h12" stroke="#b070c0" stroke-width="0.8"/><circle cx="673.8000000000001" cy="425.70000000000005" r="2.4" fill="#d8c470"/><path d="M680.35 431.95000000000005 h12" stroke="#b070c0" stroke-width="0.8"/><circle cx="686.35" cy="425.70000000000005" r="2.4" fill="#d8c470"/><path d="M718.0 431.95000000000005 h12" stroke="#b070c0" stroke-width="0.8"/><circle cx="724.0" cy="425.70000000000005" r="2.4" fill="#d8c470"/><path d="M730.5500000000001 431.95000000000005 h12" stroke="#b070c0" stroke-width="0.8"/><circle cx="736.5500000000001" cy="425.70000000000005" r="2.4" fill="#d8c470"/><path d="M868.6 431.95000000000005 h12" stroke="#b070c0" stroke-width="0.8"/><circle cx="874.6" cy="425.70000000000005" r="2.4" fill="#d8c470"/><path d="M881.1500000000001 431.95000000000005 h12" stroke="#b070c0" stroke-width="0.8"/><circle cx="887.1500000000001" cy="425.70000000000005" r="2.4" fill="#d8c470"/><path d="M906.25 431.95000000000005 h12" stroke="#b070c0" stroke-width="0.8"/><circle cx="912.25" cy="425.70000000000005" r="2.4" fill="#d8c470"/><path d="M918.8000000000001 431.95000000000005 h12" stroke="#b070c0" stroke-width="0.8"/><circle cx="924.8000000000001" cy="425.70000000000005" r="2.4" fill="#d8c470"/><path d="M931.3500000000001 431.95000000000005 h12" stroke="#b070c0" stroke-width="0.8"/><circle cx="937.3500000000001" cy="425.70000000000005" r="2.4" fill="#d8c470"/><path d="M667.8000000000001 444.5 h12" stroke="#b070c0" stroke-width="0.8"/><circle cx="673.8000000000001" cy="438.25" r="2.4" fill="#d8c470"/><path d="M680.35 444.5 h12" stroke="#b070c0" stroke-width="0.8"/><circle cx="686.35" cy="438.25" r="2.4" fill="#d8c470"/><path d="M692.9000000000001 444.5 h12" stroke="#b070c0" stroke-width="0.8"/><circle cx="698.9000000000001" cy="438.25" r="2.4" fill="#d8c470"/><path d="M718.0 444.5 h12" stroke="#b070c0" stroke-width="0.8"/><circle cx="724.0" cy="438.25" r="2.4" fill="#d8c470"/><path d="M730.5500000000001 444.5 h12" stroke="#b070c0" stroke-width="0.8"/><circle cx="736.5500000000001" cy="438.25" r="2.4" fill="#d8c470"/><path d="M868.6 444.5 h12" stroke="#b070c0" stroke-width="0.8"/><circle cx="874.6" cy="438.25" r="2.4" fill="#d8c470"/><path d="M881.1500000000001 444.5 h12" stroke="#b070c0" stroke-width="0.8"/><circle cx="887.1500000000001" cy="438.25" r="2.4" fill="#d8c470"/><path d="M906.25 444.5 h12" stroke="#b070c0" stroke-width="0.8"/><circle cx="912.25" cy="438.25" r="2.4" fill="#d8c470"/><path d="M918.8000000000001 444.5 h12" stroke="#b070c0" stroke-width="0.8"/><circle cx="924.8000000000001" cy="438.25" r="2.4" fill="#d8c470"/><path d="M931.3500000000001 444.5 h12" stroke="#b070c0" stroke-width="0.8"/><circle cx="937.3500000000001" cy="438.25" r="2.4" fill="#d8c470"/><path d="M667.8000000000001 457.05 h12" stroke="#b070c0" stroke-width="0.8"/><circle cx="673.8000000000001" cy="450.8" r="2.4" fill="#d8c470"/><path d="M680.35 457.05 h12" stroke="#b070c0" stroke-width="0.8"/><circle cx="686.35" cy="450.8" r="2.4" fill="#d8c470"/><path d="M692.9000000000001 457.05 h12" stroke="#b070c0" stroke-width="0.8"/><circle cx="698.9000000000001" cy="450.8" r="2.4" fill="#d8c470"/><path d="M718.0 457.05 h12" stroke="#b070c0" stroke-width="0.8"/><circle cx="724.0" cy="450.8" r="2.4" fill="#d8c470"/><path d="M730.5500000000001 457.05 h12" stroke="#b070c0" stroke-width="0.8"/><circle cx="736.5500000000001" cy="450.8" r="2.4" fill="#d8c470"/><path d="M768.2 457.05 h12" stroke="#b070c0" stroke-width="0.8"/><circle cx="774.2" cy="450.8" r="2.4" fill="#d8c470"/><path d="M780.75 457.05 h12" stroke="#b070c0" stroke-width="0.8"/><circle cx="786.75" cy="450.8" r="2.4" fill="#d8c470"/><path d="M818.4000000000001 457.05 h12" stroke="#b070c0" stroke-width="0.8"/><circle cx="824.4000000000001" cy="450.8" r="2.4" fill="#d8c470"/><path d="M830.95 457.05 h12" stroke="#b070c0" stroke-width="0.8"/><circle cx="836.95" cy="450.8" r="2.4" fill="#d8c470"/><path d="M843.5 457.05 h12" stroke="#b070c0" stroke-width="0.8"/><circle cx="849.5" cy="450.8" r="2.4" fill="#d8c470"/><path d="M856.0500000000001 457.05 h12" stroke="#b070c0" stroke-width="0.8"/><circle cx="862.0500000000001" cy="450.8" r="2.4" fill="#d8c470"/><path d="M868.6 457.05 h12" stroke="#b070c0" stroke-width="0.8"/><circle cx="874.6" cy="450.8" r="2.4" fill="#d8c470"/><path d="M881.1500000000001 457.05 h12" stroke="#b070c0" stroke-width="0.8"/><circle cx="887.1500000000001" cy="450.8" r="2.4" fill="#d8c470"/><path d="M906.25 457.05 h12" stroke="#b070c0" stroke-width="0.8"/><circle cx="912.25" cy="450.8" r="2.4" fill="#d8c470"/><path d="M918.8000000000001 457.05 h12" stroke="#b070c0" stroke-width="0.8"/><circle cx="924.8000000000001" cy="450.8" r="2.4" fill="#d8c470"/><path d="M931.3500000000001 457.05 h12" stroke="#b070c0" stroke-width="0.8"/><circle cx="937.3500000000001" cy="450.8" r="2.4" fill="#d8c470"/><path d="M667.8000000000001 469.6 h12" stroke="#b070c0" stroke-width="0.8"/><circle cx="673.8000000000001" cy="463.35" r="2.4" fill="#d8c470"/><path d="M692.9000000000001 469.6 h12" stroke="#b070c0" stroke-width="0.8"/><circle cx="698.9000000000001" cy="463.35" r="2.4" fill="#d8c470"/><path d="M730.5500000000001 469.6 h12" stroke="#b070c0" stroke-width="0.8"/><circle cx="736.5500000000001" cy="463.35" r="2.4" fill="#d8c470"/><path d="M818.4000000000001 469.6 h12" stroke="#b070c0" stroke-width="0.8"/><circle cx="824.4000000000001" cy="463.35" r="2.4" fill="#d8c470"/><path d="M830.95 469.6 h12" stroke="#b070c0" stroke-width="0.8"/><circle cx="836.95" cy="463.35" r="2.4" fill="#d8c470"/><path d="M843.5 469.6 h12" stroke="#b070c0" stroke-width="0.8"/><circle cx="849.5" cy="463.35" r="2.4" fill="#d8c470"/><path d="M856.0500000000001 469.6 h12" stroke="#b070c0" stroke-width="0.8"/><circle cx="862.0500000000001" cy="463.35" r="2.4" fill="#d8c470"/><path d="M868.6 469.6 h12" stroke="#b070c0" stroke-width="0.8"/><circle cx="874.6" cy="463.35" r="2.4" fill="#d8c470"/><path d="M881.1500000000001 469.6 h12" stroke="#b070c0" stroke-width="0.8"/><circle cx="887.1500000000001" cy="463.35" r="2.4" fill="#d8c470"/><path d="M906.25 469.6 h12" stroke="#b070c0" stroke-width="0.8"/><circle cx="912.25" cy="463.35" r="2.4" fill="#d8c470"/><path d="M931.3500000000001 469.6 h12" stroke="#b070c0" stroke-width="0.8"/><circle cx="937.3500000000001" cy="463.35" r="2.4" fill="#d8c470"/><path d="M667.8000000000001 482.15 h12" stroke="#b070c0" stroke-width="0.8"/><circle cx="673.8000000000001" cy="475.9" r="2.4" fill="#d8c470"/><path d="M692.9000000000001 482.15 h12" stroke="#b070c0" stroke-width="0.8"/><circle cx="698.9000000000001" cy="475.9" r="2.4" fill="#d8c470"/><path d="M718.0 482.15 h12" stroke="#b070c0" stroke-width="0.8"/><circle cx="724.0" cy="475.9" r="2.4" fill="#d8c470"/><path d="M743.1 482.15 h12" stroke="#b070c0" stroke-width="0.8"/><circle cx="749.1" cy="475.9" r="2.4" fill="#d8c470"/><path d="M768.2 482.15 h12" stroke="#b070c0" stroke-width="0.8"/><circle cx="774.2" cy="475.9" r="2.4" fill="#d8c470"/><path d="M780.75 482.15 h12" stroke="#b070c0" stroke-width="0.8"/><circle cx="786.75" cy="475.9" r="2.4" fill="#d8c470"/><path d="M793.3000000000001 482.15 h12" stroke="#b070c0" stroke-width="0.8"/><circle cx="799.3000000000001" cy="475.9" r="2.4" fill="#d8c470"/><path d="M906.25 482.15 h12" stroke="#b070c0" stroke-width="0.8"/><circle cx="912.25" cy="475.9" r="2.4" fill="#d8c470"/><path d="M931.3500000000001 482.15 h12" stroke="#b070c0" stroke-width="0.8"/><circle cx="937.3500000000001" cy="475.9" r="2.4" fill="#d8c470"/><path d="M692.9000000000001 494.70000000000005 h12" stroke="#b070c0" stroke-width="0.8"/><circle cx="698.9000000000001" cy="488.45000000000005" r="2.4" fill="#d8c470"/><path d="M705.45 494.70000000000005 h12" stroke="#b070c0" stroke-width="0.8"/><circle cx="711.45" cy="488.45000000000005" r="2.4" fill="#d8c470"/><path d="M743.1 494.70000000000005 h12" stroke="#b070c0" stroke-width="0.8"/><circle cx="749.1" cy="488.45000000000005" r="2.4" fill="#d8c470"/><path d="M793.3000000000001 494.70000000000005 h12" stroke="#b070c0" stroke-width="0.8"/><circle cx="799.3000000000001" cy="488.45000000000005" r="2.4" fill="#d8c470"/><path d="M830.95 494.70000000000005 h12" stroke="#b070c0" stroke-width="0.8"/><circle cx="836.95" cy="488.45000000000005" r="2.4" fill="#d8c470"/><path d="M843.5 494.70000000000005 h12" stroke="#b070c0" stroke-width="0.8"/><circle cx="849.5" cy="488.45000000000005" r="2.4" fill="#d8c470"/><path d="M856.0500000000001 494.70000000000005 h12" stroke="#b070c0" stroke-width="0.8"/><circle cx="862.0500000000001" cy="488.45000000000005" r="2.4" fill="#d8c470"/><path d="M868.6 494.70000000000005 h12" stroke="#b070c0" stroke-width="0.8"/><circle cx="874.6" cy="488.45000000000005" r="2.4" fill="#d8c470"/><path d="M893.7 494.70000000000005 h12" stroke="#b070c0" stroke-width="0.8"/><circle cx="899.7" cy="488.45000000000005" r="2.4" fill="#d8c470"/><path d="M906.25 494.70000000000005 h12" stroke="#b070c0" stroke-width="0.8"/><circle cx="912.25" cy="488.45000000000005" r="2.4" fill="#d8c470"/><path d="M667.8000000000001 507.25 h12" stroke="#b070c0" stroke-width="0.8"/><circle cx="673.8000000000001" cy="501.0" r="2.4" fill="#d8c470"/><path d="M743.1 507.25 h12" stroke="#b070c0" stroke-width="0.8"/><circle cx="749.1" cy="501.0" r="2.4" fill="#d8c470"/><path d="M755.6500000000001 507.25 h12" stroke="#b070c0" stroke-width="0.8"/><circle cx="761.6500000000001" cy="501.0" r="2.4" fill="#d8c470"/><path d="M768.2 507.25 h12" stroke="#b070c0" stroke-width="0.8"/><circle cx="774.2" cy="501.0" r="2.4" fill="#d8c470"/><path d="M780.75 507.25 h12" stroke="#b070c0" stroke-width="0.8"/><circle cx="786.75" cy="501.0" r="2.4" fill="#d8c470"/><path d="M830.95 507.25 h12" stroke="#b070c0" stroke-width="0.8"/><circle cx="836.95" cy="501.0" r="2.4" fill="#d8c470"/><path d="M843.5 507.25 h12" stroke="#b070c0" stroke-width="0.8"/><circle cx="849.5" cy="501.0" r="2.4" fill="#d8c470"/><path d="M856.0500000000001 507.25 h12" stroke="#b070c0" stroke-width="0.8"/><circle cx="862.0500000000001" cy="501.0" r="2.4" fill="#d8c470"/><path d="M868.6 507.25 h12" stroke="#b070c0" stroke-width="0.8"/><circle cx="874.6" cy="501.0" r="2.4" fill="#d8c470"/><path d="M931.3500000000001 507.25 h12" stroke="#b070c0" stroke-width="0.8"/><circle cx="937.3500000000001" cy="501.0" r="2.4" fill="#d8c470"/><path d="M667.8000000000001 519.8 h12" stroke="#b070c0" stroke-width="0.8"/><circle cx="673.8000000000001" cy="513.55" r="2.4" fill="#d8c470"/><path d="M705.45 519.8 h12" stroke="#b070c0" stroke-width="0.8"/><circle cx="711.45" cy="513.55" r="2.4" fill="#d8c470"/><path d="M743.1 519.8 h12" stroke="#b070c0" stroke-width="0.8"/><circle cx="749.1" cy="513.55" r="2.4" fill="#d8c470"/><path d="M755.6500000000001 519.8 h12" stroke="#b070c0" stroke-width="0.8"/><circle cx="761.6500000000001" cy="513.55" r="2.4" fill="#d8c470"/><path d="M768.2 519.8 h12" stroke="#b070c0" stroke-width="0.8"/><circle cx="774.2" cy="513.55" r="2.4" fill="#d8c470"/><path d="M818.4000000000001 519.8 h12" stroke="#b070c0" stroke-width="0.8"/><circle cx="824.4000000000001" cy="513.55" r="2.4" fill="#d8c470"/><path d="M856.0500000000001 519.8 h12" stroke="#b070c0" stroke-width="0.8"/><circle cx="862.0500000000001" cy="513.55" r="2.4" fill="#d8c470"/><path d="M893.7 519.8 h12" stroke="#b070c0" stroke-width="0.8"/><circle cx="899.7" cy="513.55" r="2.4" fill="#d8c470"/><path d="M906.25 519.8 h12" stroke="#b070c0" stroke-width="0.8"/><circle cx="912.25" cy="513.55" r="2.4" fill="#d8c470"/><path d="M918.8000000000001 519.8 h12" stroke="#b070c0" stroke-width="0.8"/><circle cx="924.8000000000001" cy="513.55" r="2.4" fill="#d8c470"/><path d="M931.3500000000001 519.8 h12" stroke="#b070c0" stroke-width="0.8"/><circle cx="937.3500000000001" cy="513.55" r="2.4" fill="#d8c470"/><path d="M680.35 532.35 h12" stroke="#b070c0" stroke-width="0.8"/><circle cx="686.35" cy="526.1" r="2.4" fill="#d8c470"/><path d="M692.9000000000001 532.35 h12" stroke="#b070c0" stroke-width="0.8"/><circle cx="698.9000000000001" cy="526.1" r="2.4" fill="#d8c470"/><path d="M705.45 532.35 h12" stroke="#b070c0" stroke-width="0.8"/><circle cx="711.45" cy="526.1" r="2.4" fill="#d8c470"/><path d="M730.5500000000001 532.35 h12" stroke="#b070c0" stroke-width="0.8"/><circle cx="736.5500000000001" cy="526.1" r="2.4" fill="#d8c470"/><path d="M743.1 532.35 h12" stroke="#b070c0" stroke-width="0.8"/><circle cx="749.1" cy="526.1" r="2.4" fill="#d8c470"/><path d="M755.6500000000001 532.35 h12" stroke="#b070c0" stroke-width="0.8"/><circle cx="761.6500000000001" cy="526.1" r="2.4" fill="#d8c470"/><path d="M793.3000000000001 532.35 h12" stroke="#b070c0" stroke-width="0.8"/><circle cx="799.3000000000001" cy="526.1" r="2.4" fill="#d8c470"/><path d="M805.85 532.35 h12" stroke="#b070c0" stroke-width="0.8"/><circle cx="811.85" cy="526.1" r="2.4" fill="#d8c470"/><path d="M818.4000000000001 532.35 h12" stroke="#b070c0" stroke-width="0.8"/><circle cx="824.4000000000001" cy="526.1" r="2.4" fill="#d8c470"/><path d="M830.95 532.35 h12" stroke="#b070c0" stroke-width="0.8"/><circle cx="836.95" cy="526.1" r="2.4" fill="#d8c470"/><path d="M843.5 532.35 h12" stroke="#b070c0" stroke-width="0.8"/><circle cx="849.5" cy="526.1" r="2.4" fill="#d8c470"/><path d="M856.0500000000001 532.35 h12" stroke="#b070c0" stroke-width="0.8"/><circle cx="862.0500000000001" cy="526.1" r="2.4" fill="#d8c470"/><path d="M868.6 532.35 h12" stroke="#b070c0" stroke-width="0.8"/><circle cx="874.6" cy="526.1" r="2.4" fill="#d8c470"/><path d="M881.1500000000001 532.35 h12" stroke="#b070c0" stroke-width="0.8"/><circle cx="887.1500000000001" cy="526.1" r="2.4" fill="#d8c470"/><path d="M931.3500000000001 532.35 h12" stroke="#b070c0" stroke-width="0.8"/><circle cx="937.3500000000001" cy="526.1" r="2.4" fill="#d8c470"/><path d="M680.35 544.9000000000001 h12" stroke="#b070c0" stroke-width="0.8"/><circle cx="686.35" cy="538.6500000000001" r="2.4" fill="#d8c470"/><path d="M692.9000000000001 544.9000000000001 h12" stroke="#b070c0" stroke-width="0.8"/><circle cx="698.9000000000001" cy="538.6500000000001" r="2.4" fill="#d8c470"/><path d="M705.45 544.9000000000001 h12" stroke="#b070c0" stroke-width="0.8"/><circle cx="711.45" cy="538.6500000000001" r="2.4" fill="#d8c470"/><path d="M730.5500000000001 544.9000000000001 h12" stroke="#b070c0" stroke-width="0.8"/><circle cx="736.5500000000001" cy="538.6500000000001" r="2.4" fill="#d8c470"/><path d="M743.1 544.9000000000001 h12" stroke="#b070c0" stroke-width="0.8"/><circle cx="749.1" cy="538.6500000000001" r="2.4" fill="#d8c470"/><path d="M755.6500000000001 544.9000000000001 h12" stroke="#b070c0" stroke-width="0.8"/><circle cx="761.6500000000001" cy="538.6500000000001" r="2.4" fill="#d8c470"/><path d="M768.2 544.9000000000001 h12" stroke="#b070c0" stroke-width="0.8"/><circle cx="774.2" cy="538.6500000000001" r="2.4" fill="#d8c470"/><path d="M780.75 544.9000000000001 h12" stroke="#b070c0" stroke-width="0.8"/><circle cx="786.75" cy="538.6500000000001" r="2.4" fill="#d8c470"/><path d="M818.4000000000001 544.9000000000001 h12" stroke="#b070c0" stroke-width="0.8"/><circle cx="824.4000000000001" cy="538.6500000000001" r="2.4" fill="#d8c470"/><path d="M843.5 544.9000000000001 h12" stroke="#b070c0" stroke-width="0.8"/><circle cx="849.5" cy="538.6500000000001" r="2.4" fill="#d8c470"/><path d="M881.1500000000001 544.9000000000001 h12" stroke="#b070c0" stroke-width="0.8"/><circle cx="887.1500000000001" cy="538.6500000000001" r="2.4" fill="#d8c470"/><path d="M893.7 544.9000000000001 h12" stroke="#b070c0" stroke-width="0.8"/><circle cx="899.7" cy="538.6500000000001" r="2.4" fill="#d8c470"/><path d="M918.8000000000001 544.9000000000001 h12" stroke="#b070c0" stroke-width="0.8"/><circle cx="924.8000000000001" cy="538.6500000000001" r="2.4" fill="#d8c470"/><path d="M931.3500000000001 544.9000000000001 h12" stroke="#b070c0" stroke-width="0.8"/><circle cx="937.3500000000001" cy="538.6500000000001" r="2.4" fill="#d8c470"/><path d="M956.45 557.45 h12" stroke="#b070c0" stroke-width="0.8"/><circle cx="962.45" cy="551.2" r="2.4" fill="#d8c470"/><path d="M956.45 570.0 h12" stroke="#b070c0" stroke-width="0.8"/><circle cx="962.45" cy="563.75" r="2.4" fill="#d8c470"/><circle cx="661.25" cy="250.0" r="3.4" fill="#b8502c"/><circle cx="661.25" cy="250.0" r="2.6" fill="#e99648"/><circle cx="673.8000000000001" cy="250.0" r="3.4" fill="#b8502c"/><circle cx="673.8000000000001" cy="250.0" r="2.6" fill="#e99648"/><circle cx="686.35" cy="250.0" r="3.4" fill="#b8502c"/><circle cx="686.35" cy="250.0" r="2.6" fill="#e99648"/><circle cx="724.0" cy="250.0" r="3.4" fill="#b8502c"/><circle cx="724.0" cy="250.0" r="2.6" fill="#e99648"/><circle cx="774.2" cy="250.0" r="3.4" fill="#b8502c"/><circle cx="774.2" cy="250.0" r="2.6" fill="#e99648"/><circle cx="824.4000000000001" cy="250.0" r="3.4" fill="#b8502c"/><circle cx="824.4000000000001" cy="250.0" r="2.6" fill="#e99648"/><circle cx="912.25" cy="250.0" r="3.4" fill="#b8502c"/><circle cx="912.25" cy="250.0" r="2.6" fill="#e99648"/><circle cx="648.7" cy="262.55" r="3.4" fill="#b8502c"/><circle cx="648.7" cy="262.55" r="2.6" fill="#e99648"/><circle cx="673.8000000000001" cy="262.55" r="3.4" fill="#b8502c"/><circle cx="673.8000000000001" cy="262.55" r="2.6" fill="#e99648"/><circle cx="686.35" cy="262.55" r="3.4" fill="#b8502c"/><circle cx="686.35" cy="262.55" r="2.6" fill="#e99648"/><circle cx="724.0" cy="262.55" r="3.4" fill="#b8502c"/><circle cx="724.0" cy="262.55" r="2.6" fill="#e99648"/><circle cx="774.2" cy="262.55" r="3.4" fill="#b8502c"/><circle cx="774.2" cy="262.55" r="2.6" fill="#e99648"/><circle cx="824.4000000000001" cy="262.55" r="3.4" fill="#b8502c"/><circle cx="824.4000000000001" cy="262.55" r="2.6" fill="#e99648"/><circle cx="912.25" cy="262.55" r="3.4" fill="#b8502c"/><circle cx="912.25" cy="262.55" r="2.6" fill="#e99648"/><circle cx="686.35" cy="275.1" r="3.4" fill="#b8502c"/><circle cx="686.35" cy="275.1" r="2.6" fill="#e99648"/><circle cx="698.9000000000001" cy="287.65" r="3.4" fill="#b8502c"/><circle cx="698.9000000000001" cy="287.65" r="2.6" fill="#e99648"/><circle cx="698.9000000000001" cy="300.2" r="3.4" fill="#b8502c"/><circle cx="698.9000000000001" cy="300.2" r="2.6" fill="#e99648"/><circle cx="698.9000000000001" cy="312.75" r="3.4" fill="#b8502c"/><circle cx="698.9000000000001" cy="312.75" r="2.6" fill="#e99648"/><circle cx="724.0" cy="312.75" r="3.4" fill="#b8502c"/><circle cx="724.0" cy="312.75" r="2.6" fill="#e99648"/><circle cx="774.2" cy="312.75" r="3.4" fill="#b8502c"/><circle cx="774.2" cy="312.75" r="2.6" fill="#e99648"/><circle cx="824.4000000000001" cy="312.75" r="3.4" fill="#b8502c"/><circle cx="824.4000000000001" cy="312.75" r="2.6" fill="#e99648"/><circle cx="698.9000000000001" cy="325.3" r="3.4" fill="#b8502c"/><circle cx="698.9000000000001" cy="325.3" r="2.6" fill="#e99648"/><circle cx="912.25" cy="325.3" r="3.4" fill="#b8502c"/><circle cx="912.25" cy="325.3" r="2.6" fill="#e99648"/><circle cx="912.25" cy="337.85" r="3.4" fill="#b8502c"/><circle cx="912.25" cy="337.85" r="2.6" fill="#e99648"/><circle cx="698.9000000000001" cy="362.95" r="3.4" fill="#b8502c"/><circle cx="698.9000000000001" cy="362.95" r="2.6" fill="#e99648"/><circle cx="711.45" cy="362.95" r="3.4" fill="#b8502c"/><circle cx="711.45" cy="362.95" r="2.6" fill="#e99648"/><circle cx="749.1" cy="375.5" r="3.4" fill="#b8502c"/><circle cx="749.1" cy="375.5" r="2.6" fill="#e99648"/><circle cx="761.6500000000001" cy="375.5" r="3.4" fill="#b8502c"/><circle cx="761.6500000000001" cy="375.5" r="2.6" fill="#e99648"/><circle cx="774.2" cy="375.5" r="3.4" fill="#b8502c"/><circle cx="774.2" cy="375.5" r="2.6" fill="#e99648"/><circle cx="786.75" cy="375.5" r="3.4" fill="#b8502c"/><circle cx="786.75" cy="375.5" r="2.6" fill="#e99648"/><circle cx="799.3000000000001" cy="375.5" r="3.4" fill="#b8502c"/><circle cx="799.3000000000001" cy="375.5" r="2.6" fill="#e99648"/><circle cx="811.85" cy="375.5" r="3.4" fill="#b8502c"/><circle cx="811.85" cy="375.5" r="2.6" fill="#e99648"/><circle cx="824.4000000000001" cy="375.5" r="3.4" fill="#b8502c"/><circle cx="824.4000000000001" cy="375.5" r="2.6" fill="#e99648"/><circle cx="836.95" cy="375.5" r="3.4" fill="#b8502c"/><circle cx="836.95" cy="375.5" r="2.6" fill="#e99648"/><circle cx="849.5" cy="375.5" r="3.4" fill="#b8502c"/><circle cx="849.5" cy="375.5" r="2.6" fill="#e99648"/><circle cx="862.0500000000001" cy="375.5" r="3.4" fill="#b8502c"/><circle cx="862.0500000000001" cy="375.5" r="2.6" fill="#e99648"/><circle cx="912.25" cy="375.5" r="3.4" fill="#b8502c"/><circle cx="912.25" cy="375.5" r="2.6" fill="#e99648"/><circle cx="749.1" cy="388.05" r="3.4" fill="#b8502c"/><circle cx="749.1" cy="388.05" r="2.6" fill="#e99648"/><circle cx="761.6500000000001" cy="388.05" r="3.4" fill="#b8502c"/><circle cx="761.6500000000001" cy="388.05" r="2.6" fill="#e99648"/><circle cx="774.2" cy="388.05" r="3.4" fill="#b8502c"/><circle cx="774.2" cy="388.05" r="2.6" fill="#e99648"/><circle cx="786.75" cy="388.05" r="3.4" fill="#b8502c"/><circle cx="786.75" cy="388.05" r="2.6" fill="#e99648"/><circle cx="799.3000000000001" cy="388.05" r="3.4" fill="#b8502c"/><circle cx="799.3000000000001" cy="388.05" r="2.6" fill="#e99648"/><circle cx="811.85" cy="388.05" r="3.4" fill="#b8502c"/><circle cx="811.85" cy="388.05" r="2.6" fill="#e99648"/><circle cx="824.4000000000001" cy="388.05" r="3.4" fill="#b8502c"/><circle cx="824.4000000000001" cy="388.05" r="2.6" fill="#e99648"/><circle cx="836.95" cy="388.05" r="3.4" fill="#b8502c"/><circle cx="836.95" cy="388.05" r="2.6" fill="#e99648"/><circle cx="849.5" cy="388.05" r="3.4" fill="#b8502c"/><circle cx="849.5" cy="388.05" r="2.6" fill="#e99648"/><circle cx="862.0500000000001" cy="388.05" r="3.4" fill="#b8502c"/><circle cx="862.0500000000001" cy="388.05" r="2.6" fill="#e99648"/><circle cx="673.8000000000001" cy="400.6" r="3.4" fill="#b8502c"/><circle cx="673.8000000000001" cy="400.6" r="2.6" fill="#e99648"/><circle cx="686.35" cy="400.6" r="3.4" fill="#b8502c"/><circle cx="686.35" cy="400.6" r="2.6" fill="#e99648"/><circle cx="749.1" cy="400.6" r="3.4" fill="#b8502c"/><circle cx="749.1" cy="400.6" r="2.6" fill="#e99648"/><circle cx="761.6500000000001" cy="400.6" r="3.4" fill="#b8502c"/><circle cx="761.6500000000001" cy="400.6" r="2.6" fill="#e99648"/><circle cx="774.2" cy="400.6" r="3.4" fill="#b8502c"/><circle cx="774.2" cy="400.6" r="2.6" fill="#e99648"/><circle cx="786.75" cy="400.6" r="3.4" fill="#b8502c"/><circle cx="786.75" cy="400.6" r="2.6" fill="#e99648"/><circle cx="799.3000000000001" cy="400.6" r="3.4" fill="#b8502c"/><circle cx="799.3000000000001" cy="400.6" r="2.6" fill="#e99648"/><circle cx="811.85" cy="400.6" r="3.4" fill="#b8502c"/><circle cx="811.85" cy="400.6" r="2.6" fill="#e99648"/><circle cx="824.4000000000001" cy="400.6" r="3.4" fill="#b8502c"/><circle cx="824.4000000000001" cy="400.6" r="2.6" fill="#e99648"/><circle cx="836.95" cy="400.6" r="3.4" fill="#b8502c"/><circle cx="836.95" cy="400.6" r="2.6" fill="#e99648"/><circle cx="849.5" cy="400.6" r="3.4" fill="#b8502c"/><circle cx="849.5" cy="400.6" r="2.6" fill="#e99648"/><circle cx="862.0500000000001" cy="400.6" r="3.4" fill="#b8502c"/><circle cx="862.0500000000001" cy="400.6" r="2.6" fill="#e99648"/><circle cx="749.1" cy="413.15" r="3.4" fill="#b8502c"/><circle cx="749.1" cy="413.15" r="2.6" fill="#e99648"/><circle cx="761.6500000000001" cy="413.15" r="3.4" fill="#b8502c"/><circle cx="761.6500000000001" cy="413.15" r="2.6" fill="#e99648"/><circle cx="774.2" cy="413.15" r="3.4" fill="#b8502c"/><circle cx="774.2" cy="413.15" r="2.6" fill="#e99648"/><circle cx="786.75" cy="413.15" r="3.4" fill="#b8502c"/><circle cx="786.75" cy="413.15" r="2.6" fill="#e99648"/><circle cx="799.3000000000001" cy="413.15" r="3.4" fill="#b8502c"/><circle cx="799.3000000000001" cy="413.15" r="2.6" fill="#e99648"/><circle cx="811.85" cy="413.15" r="3.4" fill="#b8502c"/><circle cx="811.85" cy="413.15" r="2.6" fill="#e99648"/><circle cx="824.4000000000001" cy="413.15" r="3.4" fill="#b8502c"/><circle cx="824.4000000000001" cy="413.15" r="2.6" fill="#e99648"/><circle cx="836.95" cy="413.15" r="3.4" fill="#b8502c"/><circle cx="836.95" cy="413.15" r="2.6" fill="#e99648"/><circle cx="849.5" cy="413.15" r="3.4" fill="#b8502c"/><circle cx="849.5" cy="413.15" r="2.6" fill="#e99648"/><circle cx="862.0500000000001" cy="413.15" r="3.4" fill="#b8502c"/><circle cx="862.0500000000001" cy="413.15" r="2.6" fill="#e99648"/><circle cx="749.1" cy="425.70000000000005" r="3.4" fill="#b8502c"/><circle cx="749.1" cy="425.70000000000005" r="2.6" fill="#e99648"/><circle cx="761.6500000000001" cy="425.70000000000005" r="3.4" fill="#b8502c"/><circle cx="761.6500000000001" cy="425.70000000000005" r="2.6" fill="#e99648"/><circle cx="774.2" cy="425.70000000000005" r="3.4" fill="#b8502c"/><circle cx="774.2" cy="425.70000000000005" r="2.6" fill="#e99648"/><circle cx="786.75" cy="425.70000000000005" r="3.4" fill="#b8502c"/><circle cx="786.75" cy="425.70000000000005" r="2.6" fill="#e99648"/><circle cx="799.3000000000001" cy="425.70000000000005" r="3.4" fill="#b8502c"/><circle cx="799.3000000000001" cy="425.70000000000005" r="2.6" fill="#e99648"/><circle cx="811.85" cy="425.70000000000005" r="3.4" fill="#b8502c"/><circle cx="811.85" cy="425.70000000000005" r="2.6" fill="#e99648"/><circle cx="824.4000000000001" cy="425.70000000000005" r="3.4" fill="#b8502c"/><circle cx="824.4000000000001" cy="425.70000000000005" r="2.6" fill="#e99648"/><circle cx="836.95" cy="425.70000000000005" r="3.4" fill="#b8502c"/><circle cx="836.95" cy="425.70000000000005" r="2.6" fill="#e99648"/><circle cx="849.5" cy="425.70000000000005" r="3.4" fill="#b8502c"/><circle cx="849.5" cy="425.70000000000005" r="2.6" fill="#e99648"/><circle cx="862.0500000000001" cy="425.70000000000005" r="3.4" fill="#b8502c"/><circle cx="862.0500000000001" cy="425.70000000000005" r="2.6" fill="#e99648"/><circle cx="749.1" cy="438.25" r="3.4" fill="#b8502c"/><circle cx="749.1" cy="438.25" r="2.6" fill="#e99648"/><circle cx="761.6500000000001" cy="438.25" r="3.4" fill="#b8502c"/><circle cx="761.6500000000001" cy="438.25" r="2.6" fill="#e99648"/><circle cx="774.2" cy="438.25" r="3.4" fill="#b8502c"/><circle cx="774.2" cy="438.25" r="2.6" fill="#e99648"/><circle cx="786.75" cy="438.25" r="3.4" fill="#b8502c"/><circle cx="786.75" cy="438.25" r="2.6" fill="#e99648"/><circle cx="799.3000000000001" cy="438.25" r="3.4" fill="#b8502c"/><circle cx="799.3000000000001" cy="438.25" r="2.6" fill="#e99648"/><circle cx="811.85" cy="438.25" r="3.4" fill="#b8502c"/><circle cx="811.85" cy="438.25" r="2.6" fill="#e99648"/><circle cx="824.4000000000001" cy="438.25" r="3.4" fill="#b8502c"/><circle cx="824.4000000000001" cy="438.25" r="2.6" fill="#e99648"/><circle cx="836.95" cy="438.25" r="3.4" fill="#b8502c"/><circle cx="836.95" cy="438.25" r="2.6" fill="#e99648"/><circle cx="849.5" cy="438.25" r="3.4" fill="#b8502c"/><circle cx="849.5" cy="438.25" r="2.6" fill="#e99648"/><circle cx="862.0500000000001" cy="438.25" r="3.4" fill="#b8502c"/><circle cx="862.0500000000001" cy="438.25" r="2.6" fill="#e99648"/><circle cx="749.1" cy="450.8" r="3.4" fill="#b8502c"/><circle cx="749.1" cy="450.8" r="2.6" fill="#e99648"/><circle cx="761.6500000000001" cy="450.8" r="3.4" fill="#b8502c"/><circle cx="761.6500000000001" cy="450.8" r="2.6" fill="#e99648"/><circle cx="799.3000000000001" cy="450.8" r="3.4" fill="#b8502c"/><circle cx="799.3000000000001" cy="450.8" r="2.6" fill="#e99648"/><circle cx="811.85" cy="450.8" r="3.4" fill="#b8502c"/><circle cx="811.85" cy="450.8" r="2.6" fill="#e99648"/><circle cx="724.0" cy="463.35" r="3.4" fill="#b8502c"/><circle cx="724.0" cy="463.35" r="2.6" fill="#e99648"/><circle cx="673.8000000000001" cy="488.45000000000005" r="3.4" fill="#b8502c"/><circle cx="673.8000000000001" cy="488.45000000000005" r="2.6" fill="#e99648"/><circle cx="937.3500000000001" cy="488.45000000000005" r="3.4" fill="#b8502c"/><circle cx="937.3500000000001" cy="488.45000000000005" r="2.6" fill="#e99648"/><circle cx="774.2" cy="526.1" r="3.4" fill="#b8502c"/><circle cx="774.2" cy="526.1" r="2.6" fill="#e99648"/><circle cx="799.3000000000001" cy="538.6500000000001" r="3.4" fill="#b8502c"/><circle cx="799.3000000000001" cy="538.6500000000001" r="2.6" fill="#e99648"/><circle cx="811.85" cy="538.6500000000001" r="3.4" fill="#b8502c"/><circle cx="811.85" cy="538.6500000000001" r="2.6" fill="#e99648"/><circle cx="874.6" cy="538.6500000000001" r="3.4" fill="#b8502c"/><circle cx="874.6" cy="538.6500000000001" r="2.6" fill="#e99648"/><circle cx="648.7" cy="551.2" r="3.4" fill="#b8502c"/><circle cx="648.7" cy="551.2" r="2.6" fill="#e99648"/><circle cx="924.8000000000001" cy="250.0" r="4.9" fill="#0c0c0c"/><circle cx="924.8000000000001" cy="250.0" r="3" fill="#e09a58"/><circle cx="937.3500000000001" cy="250.0" r="4.9" fill="#0c0c0c"/><circle cx="937.3500000000001" cy="250.0" r="3" fill="#e09a58"/><circle cx="937.3500000000001" cy="262.55" r="4.9" fill="#0c0c0c"/><circle cx="937.3500000000001" cy="262.55" r="3" fill="#e09a58"/><circle cx="724.0" cy="275.1" r="4.9" fill="#0c0c0c"/><circle cx="724.0" cy="275.1" r="3" fill="#e09a58"/><circle cx="736.5500000000001" cy="275.1" r="4.9" fill="#0c0c0c"/><circle cx="736.5500000000001" cy="275.1" r="3" fill="#e09a58"/><circle cx="749.1" cy="275.1" r="4.9" fill="#0c0c0c"/><circle cx="749.1" cy="275.1" r="3" fill="#e09a58"/><circle cx="761.6500000000001" cy="275.1" r="4.9" fill="#0c0c0c"/><circle cx="761.6500000000001" cy="275.1" r="3" fill="#e09a58"/><circle cx="774.2" cy="275.1" r="4.9" fill="#0c0c0c"/><circle cx="774.2" cy="275.1" r="3" fill="#e09a58"/><circle cx="786.75" cy="275.1" r="4.9" fill="#0c0c0c"/><circle cx="786.75" cy="275.1" r="3" fill="#e09a58"/><circle cx="799.3000000000001" cy="275.1" r="4.9" fill="#0c0c0c"/><circle cx="799.3000000000001" cy="275.1" r="3" fill="#e09a58"/><circle cx="811.85" cy="275.1" r="4.9" fill="#0c0c0c"/><circle cx="811.85" cy="275.1" r="3" fill="#e09a58"/><circle cx="824.4000000000001" cy="275.1" r="4.9" fill="#0c0c0c"/><circle cx="824.4000000000001" cy="275.1" r="3" fill="#e09a58"/><circle cx="836.95" cy="275.1" r="4.9" fill="#0c0c0c"/><circle cx="836.95" cy="275.1" r="3" fill="#e09a58"/><circle cx="849.5" cy="275.1" r="4.9" fill="#0c0c0c"/><circle cx="849.5" cy="275.1" r="3" fill="#e09a58"/><circle cx="862.0500000000001" cy="275.1" r="4.9" fill="#0c0c0c"/><circle cx="862.0500000000001" cy="275.1" r="3" fill="#e09a58"/><circle cx="874.6" cy="275.1" r="4.9" fill="#0c0c0c"/><circle cx="874.6" cy="275.1" r="3" fill="#e09a58"/><circle cx="887.1500000000001" cy="275.1" r="4.9" fill="#0c0c0c"/><circle cx="887.1500000000001" cy="275.1" r="3" fill="#e09a58"/><circle cx="899.7" cy="275.1" r="4.9" fill="#0c0c0c"/><circle cx="899.7" cy="275.1" r="3" fill="#e09a58"/><circle cx="912.25" cy="300.2" r="4.9" fill="#0c0c0c"/><circle cx="912.25" cy="300.2" r="3" fill="#e09a58"/><circle cx="912.25" cy="312.75" r="4.9" fill="#0c0c0c"/><circle cx="912.25" cy="312.75" r="3" fill="#e09a58"/><circle cx="736.5500000000001" cy="337.85" r="4.9" fill="#0c0c0c"/><circle cx="736.5500000000001" cy="337.85" r="3" fill="#e09a58"/><circle cx="749.1" cy="337.85" r="4.9" fill="#0c0c0c"/><circle cx="749.1" cy="337.85" r="3" fill="#e09a58"/><circle cx="761.6500000000001" cy="337.85" r="4.9" fill="#0c0c0c"/><circle cx="761.6500000000001" cy="337.85" r="3" fill="#e09a58"/><circle cx="786.75" cy="337.85" r="4.9" fill="#0c0c0c"/><circle cx="786.75" cy="337.85" r="3" fill="#e09a58"/><circle cx="799.3000000000001" cy="337.85" r="4.9" fill="#0c0c0c"/><circle cx="799.3000000000001" cy="337.85" r="3" fill="#e09a58"/><circle cx="811.85" cy="337.85" r="4.9" fill="#0c0c0c"/><circle cx="811.85" cy="337.85" r="3" fill="#e09a58"/><circle cx="836.95" cy="337.85" r="4.9" fill="#0c0c0c"/><circle cx="836.95" cy="337.85" r="3" fill="#e09a58"/><circle cx="849.5" cy="337.85" r="4.9" fill="#0c0c0c"/><circle cx="849.5" cy="337.85" r="3" fill="#e09a58"/><circle cx="862.0500000000001" cy="337.85" r="4.9" fill="#0c0c0c"/><circle cx="862.0500000000001" cy="337.85" r="3" fill="#e09a58"/><circle cx="874.6" cy="337.85" r="4.9" fill="#0c0c0c"/><circle cx="874.6" cy="337.85" r="3" fill="#e09a58"/><circle cx="887.1500000000001" cy="337.85" r="4.9" fill="#0c0c0c"/><circle cx="887.1500000000001" cy="337.85" r="3" fill="#e09a58"/><circle cx="899.7" cy="337.85" r="4.9" fill="#0c0c0c"/><circle cx="899.7" cy="337.85" r="3" fill="#e09a58"/><circle cx="912.25" cy="350.4" r="4.9" fill="#0c0c0c"/><circle cx="912.25" cy="350.4" r="3" fill="#e09a58"/><circle cx="949.9000000000001" cy="350.4" r="4.9" fill="#0c0c0c"/><circle cx="949.9000000000001" cy="350.4" r="3" fill="#e09a58"/><circle cx="912.25" cy="362.95" r="4.9" fill="#0c0c0c"/><circle cx="912.25" cy="362.95" r="3" fill="#e09a58"/><circle cx="949.9000000000001" cy="362.95" r="4.9" fill="#0c0c0c"/><circle cx="949.9000000000001" cy="362.95" r="3" fill="#e09a58"/><circle cx="899.7" cy="375.5" r="4.9" fill="#0c0c0c"/><circle cx="899.7" cy="375.5" r="3" fill="#e09a58"/><circle cx="899.7" cy="388.05" r="4.9" fill="#0c0c0c"/><circle cx="899.7" cy="388.05" r="3" fill="#e09a58"/><circle cx="648.7" cy="400.6" r="4.9" fill="#0c0c0c"/><circle cx="648.7" cy="400.6" r="3" fill="#e09a58"/><circle cx="661.25" cy="400.6" r="4.9" fill="#0c0c0c"/><circle cx="661.25" cy="400.6" r="3" fill="#e09a58"/><circle cx="899.7" cy="400.6" r="4.9" fill="#0c0c0c"/><circle cx="899.7" cy="400.6" r="3" fill="#e09a58"/><circle cx="912.25" cy="400.6" r="4.9" fill="#0c0c0c"/><circle cx="912.25" cy="400.6" r="3" fill="#e09a58"/><circle cx="949.9000000000001" cy="400.6" r="4.9" fill="#0c0c0c"/><circle cx="949.9000000000001" cy="400.6" r="3" fill="#e09a58"/><circle cx="962.45" cy="400.6" r="4.9" fill="#0c0c0c"/><circle cx="962.45" cy="400.6" r="3" fill="#e09a58"/><circle cx="648.7" cy="413.15" r="4.9" fill="#0c0c0c"/><circle cx="648.7" cy="413.15" r="3" fill="#e09a58"/><circle cx="661.25" cy="413.15" r="4.9" fill="#0c0c0c"/><circle cx="661.25" cy="413.15" r="3" fill="#e09a58"/><circle cx="899.7" cy="413.15" r="4.9" fill="#0c0c0c"/><circle cx="899.7" cy="413.15" r="3" fill="#e09a58"/><circle cx="949.9000000000001" cy="413.15" r="4.9" fill="#0c0c0c"/><circle cx="949.9000000000001" cy="413.15" r="3" fill="#e09a58"/><circle cx="962.45" cy="413.15" r="4.9" fill="#0c0c0c"/><circle cx="962.45" cy="413.15" r="3" fill="#e09a58"/><circle cx="648.7" cy="425.70000000000005" r="4.9" fill="#0c0c0c"/><circle cx="648.7" cy="425.70000000000005" r="3" fill="#e09a58"/><circle cx="661.25" cy="425.70000000000005" r="4.9" fill="#0c0c0c"/><circle cx="661.25" cy="425.70000000000005" r="3" fill="#e09a58"/><circle cx="698.9000000000001" cy="425.70000000000005" r="4.9" fill="#0c0c0c"/><circle cx="698.9000000000001" cy="425.70000000000005" r="3" fill="#e09a58"/><circle cx="711.45" cy="425.70000000000005" r="4.9" fill="#0c0c0c"/><circle cx="711.45" cy="425.70000000000005" r="3" fill="#e09a58"/><circle cx="899.7" cy="425.70000000000005" r="4.9" fill="#0c0c0c"/><circle cx="899.7" cy="425.70000000000005" r="3" fill="#e09a58"/><circle cx="949.9000000000001" cy="425.70000000000005" r="4.9" fill="#0c0c0c"/><circle cx="949.9000000000001" cy="425.70000000000005" r="3" fill="#e09a58"/><circle cx="962.45" cy="425.70000000000005" r="4.9" fill="#0c0c0c"/><circle cx="962.45" cy="425.70000000000005" r="3" fill="#e09a58"/><circle cx="648.7" cy="438.25" r="4.9" fill="#0c0c0c"/><circle cx="648.7" cy="438.25" r="3" fill="#e09a58"/><circle cx="661.25" cy="438.25" r="4.9" fill="#0c0c0c"/><circle cx="661.25" cy="438.25" r="3" fill="#e09a58"/><circle cx="711.45" cy="438.25" r="4.9" fill="#0c0c0c"/><circle cx="711.45" cy="438.25" r="3" fill="#e09a58"/><circle cx="899.7" cy="438.25" r="4.9" fill="#0c0c0c"/><circle cx="899.7" cy="438.25" r="3" fill="#e09a58"/><circle cx="949.9000000000001" cy="438.25" r="4.9" fill="#0c0c0c"/><circle cx="949.9000000000001" cy="438.25" r="3" fill="#e09a58"/><circle cx="962.45" cy="438.25" r="4.9" fill="#0c0c0c"/><circle cx="962.45" cy="438.25" r="3" fill="#e09a58"/><circle cx="648.7" cy="450.8" r="4.9" fill="#0c0c0c"/><circle cx="648.7" cy="450.8" r="3" fill="#e09a58"/><circle cx="661.25" cy="450.8" r="4.9" fill="#0c0c0c"/><circle cx="661.25" cy="450.8" r="3" fill="#e09a58"/><circle cx="711.45" cy="450.8" r="4.9" fill="#0c0c0c"/><circle cx="711.45" cy="450.8" r="3" fill="#e09a58"/><circle cx="899.7" cy="450.8" r="4.9" fill="#0c0c0c"/><circle cx="899.7" cy="450.8" r="3" fill="#e09a58"/><circle cx="949.9000000000001" cy="450.8" r="4.9" fill="#0c0c0c"/><circle cx="949.9000000000001" cy="450.8" r="3" fill="#e09a58"/><circle cx="962.45" cy="450.8" r="4.9" fill="#0c0c0c"/><circle cx="962.45" cy="450.8" r="3" fill="#e09a58"/><circle cx="648.7" cy="463.35" r="4.9" fill="#0c0c0c"/><circle cx="648.7" cy="463.35" r="3" fill="#e09a58"/><circle cx="661.25" cy="463.35" r="4.9" fill="#0c0c0c"/><circle cx="661.25" cy="463.35" r="3" fill="#e09a58"/><circle cx="686.35" cy="463.35" r="4.9" fill="#0c0c0c"/><circle cx="686.35" cy="463.35" r="3" fill="#e09a58"/><circle cx="711.45" cy="463.35" r="4.9" fill="#0c0c0c"/><circle cx="711.45" cy="463.35" r="3" fill="#e09a58"/><circle cx="899.7" cy="463.35" r="4.9" fill="#0c0c0c"/><circle cx="899.7" cy="463.35" r="3" fill="#e09a58"/><circle cx="924.8000000000001" cy="463.35" r="4.9" fill="#0c0c0c"/><circle cx="924.8000000000001" cy="463.35" r="3" fill="#e09a58"/><circle cx="949.9000000000001" cy="463.35" r="4.9" fill="#0c0c0c"/><circle cx="949.9000000000001" cy="463.35" r="3" fill="#e09a58"/><circle cx="962.45" cy="463.35" r="4.9" fill="#0c0c0c"/><circle cx="962.45" cy="463.35" r="3" fill="#e09a58"/><circle cx="648.7" cy="475.9" r="4.9" fill="#0c0c0c"/><circle cx="648.7" cy="475.9" r="3" fill="#e09a58"/><circle cx="661.25" cy="475.9" r="4.9" fill="#0c0c0c"/><circle cx="661.25" cy="475.9" r="3" fill="#e09a58"/><circle cx="711.45" cy="475.9" r="4.9" fill="#0c0c0c"/><circle cx="711.45" cy="475.9" r="3" fill="#e09a58"/><circle cx="736.5500000000001" cy="475.9" r="4.9" fill="#0c0c0c"/><circle cx="736.5500000000001" cy="475.9" r="3" fill="#e09a58"/><circle cx="761.6500000000001" cy="475.9" r="4.9" fill="#0c0c0c"/><circle cx="761.6500000000001" cy="475.9" r="3" fill="#e09a58"/><circle cx="811.85" cy="475.9" r="4.9" fill="#0c0c0c"/><circle cx="811.85" cy="475.9" r="3" fill="#e09a58"/><circle cx="824.4000000000001" cy="475.9" r="4.9" fill="#0c0c0c"/><circle cx="824.4000000000001" cy="475.9" r="3" fill="#e09a58"/><circle cx="836.95" cy="475.9" r="4.9" fill="#0c0c0c"/><circle cx="836.95" cy="475.9" r="3" fill="#e09a58"/><circle cx="849.5" cy="475.9" r="4.9" fill="#0c0c0c"/><circle cx="849.5" cy="475.9" r="3" fill="#e09a58"/><circle cx="862.0500000000001" cy="475.9" r="4.9" fill="#0c0c0c"/><circle cx="862.0500000000001" cy="475.9" r="3" fill="#e09a58"/><circle cx="874.6" cy="475.9" r="4.9" fill="#0c0c0c"/><circle cx="874.6" cy="475.9" r="3" fill="#e09a58"/><circle cx="887.1500000000001" cy="475.9" r="4.9" fill="#0c0c0c"/><circle cx="887.1500000000001" cy="475.9" r="3" fill="#e09a58"/><circle cx="899.7" cy="475.9" r="4.9" fill="#0c0c0c"/><circle cx="899.7" cy="475.9" r="3" fill="#e09a58"/><circle cx="949.9000000000001" cy="475.9" r="4.9" fill="#0c0c0c"/><circle cx="949.9000000000001" cy="475.9" r="3" fill="#e09a58"/><circle cx="962.45" cy="475.9" r="4.9" fill="#0c0c0c"/><circle cx="962.45" cy="475.9" r="3" fill="#e09a58"/><circle cx="648.7" cy="488.45000000000005" r="4.9" fill="#0c0c0c"/><circle cx="648.7" cy="488.45000000000005" r="3" fill="#e09a58"/><circle cx="661.25" cy="488.45000000000005" r="4.9" fill="#0c0c0c"/><circle cx="661.25" cy="488.45000000000005" r="3" fill="#e09a58"/><circle cx="724.0" cy="488.45000000000005" r="4.9" fill="#0c0c0c"/><circle cx="724.0" cy="488.45000000000005" r="3" fill="#e09a58"/><circle cx="736.5500000000001" cy="488.45000000000005" r="4.9" fill="#0c0c0c"/><circle cx="736.5500000000001" cy="488.45000000000005" r="3" fill="#e09a58"/><circle cx="761.6500000000001" cy="488.45000000000005" r="4.9" fill="#0c0c0c"/><circle cx="761.6500000000001" cy="488.45000000000005" r="3" fill="#e09a58"/><circle cx="774.2" cy="488.45000000000005" r="4.9" fill="#0c0c0c"/><circle cx="774.2" cy="488.45000000000005" r="3" fill="#e09a58"/><circle cx="786.75" cy="488.45000000000005" r="4.9" fill="#0c0c0c"/><circle cx="786.75" cy="488.45000000000005" r="3" fill="#e09a58"/><circle cx="811.85" cy="488.45000000000005" r="4.9" fill="#0c0c0c"/><circle cx="811.85" cy="488.45000000000005" r="3" fill="#e09a58"/><circle cx="824.4000000000001" cy="488.45000000000005" r="4.9" fill="#0c0c0c"/><circle cx="824.4000000000001" cy="488.45000000000005" r="3" fill="#e09a58"/><circle cx="887.1500000000001" cy="488.45000000000005" r="4.9" fill="#0c0c0c"/><circle cx="887.1500000000001" cy="488.45000000000005" r="3" fill="#e09a58"/><circle cx="949.9000000000001" cy="488.45000000000005" r="4.9" fill="#0c0c0c"/><circle cx="949.9000000000001" cy="488.45000000000005" r="3" fill="#e09a58"/><circle cx="962.45" cy="488.45000000000005" r="4.9" fill="#0c0c0c"/><circle cx="962.45" cy="488.45000000000005" r="3" fill="#e09a58"/><circle cx="648.7" cy="501.0" r="4.9" fill="#0c0c0c"/><circle cx="648.7" cy="501.0" r="3" fill="#e09a58"/><circle cx="661.25" cy="501.0" r="4.9" fill="#0c0c0c"/><circle cx="661.25" cy="501.0" r="3" fill="#e09a58"/><circle cx="686.35" cy="501.0" r="4.9" fill="#0c0c0c"/><circle cx="686.35" cy="501.0" r="3" fill="#e09a58"/><circle cx="698.9000000000001" cy="501.0" r="4.9" fill="#0c0c0c"/><circle cx="698.9000000000001" cy="501.0" r="3" fill="#e09a58"/><circle cx="711.45" cy="501.0" r="4.9" fill="#0c0c0c"/><circle cx="711.45" cy="501.0" r="3" fill="#e09a58"/><circle cx="724.0" cy="501.0" r="4.9" fill="#0c0c0c"/><circle cx="724.0" cy="501.0" r="3" fill="#e09a58"/><circle cx="736.5500000000001" cy="501.0" r="4.9" fill="#0c0c0c"/><circle cx="736.5500000000001" cy="501.0" r="3" fill="#e09a58"/><circle cx="799.3000000000001" cy="501.0" r="4.9" fill="#0c0c0c"/><circle cx="799.3000000000001" cy="501.0" r="3" fill="#e09a58"/><circle cx="811.85" cy="501.0" r="4.9" fill="#0c0c0c"/><circle cx="811.85" cy="501.0" r="3" fill="#e09a58"/><circle cx="824.4000000000001" cy="501.0" r="4.9" fill="#0c0c0c"/><circle cx="824.4000000000001" cy="501.0" r="3" fill="#e09a58"/><circle cx="887.1500000000001" cy="501.0" r="4.9" fill="#0c0c0c"/><circle cx="887.1500000000001" cy="501.0" r="3" fill="#e09a58"/><circle cx="899.7" cy="501.0" r="4.9" fill="#0c0c0c"/><circle cx="899.7" cy="501.0" r="3" fill="#e09a58"/><circle cx="912.25" cy="501.0" r="4.9" fill="#0c0c0c"/><circle cx="912.25" cy="501.0" r="3" fill="#e09a58"/><circle cx="924.8000000000001" cy="501.0" r="4.9" fill="#0c0c0c"/><circle cx="924.8000000000001" cy="501.0" r="3" fill="#e09a58"/><circle cx="949.9000000000001" cy="501.0" r="4.9" fill="#0c0c0c"/><circle cx="949.9000000000001" cy="501.0" r="3" fill="#e09a58"/><circle cx="962.45" cy="501.0" r="4.9" fill="#0c0c0c"/><circle cx="962.45" cy="501.0" r="3" fill="#e09a58"/><circle cx="648.7" cy="513.55" r="4.9" fill="#0c0c0c"/><circle cx="648.7" cy="513.55" r="3" fill="#e09a58"/><circle cx="661.25" cy="513.55" r="4.9" fill="#0c0c0c"/><circle cx="661.25" cy="513.55" r="3" fill="#e09a58"/><circle cx="686.35" cy="513.55" r="4.9" fill="#0c0c0c"/><circle cx="686.35" cy="513.55" r="3" fill="#e09a58"/><circle cx="698.9000000000001" cy="513.55" r="4.9" fill="#0c0c0c"/><circle cx="698.9000000000001" cy="513.55" r="3" fill="#e09a58"/><circle cx="724.0" cy="513.55" r="4.9" fill="#0c0c0c"/><circle cx="724.0" cy="513.55" r="3" fill="#e09a58"/><circle cx="736.5500000000001" cy="513.55" r="4.9" fill="#0c0c0c"/><circle cx="736.5500000000001" cy="513.55" r="3" fill="#e09a58"/><circle cx="786.75" cy="513.55" r="4.9" fill="#0c0c0c"/><circle cx="786.75" cy="513.55" r="3" fill="#e09a58"/><circle cx="799.3000000000001" cy="513.55" r="4.9" fill="#0c0c0c"/><circle cx="799.3000000000001" cy="513.55" r="3" fill="#e09a58"/><circle cx="811.85" cy="513.55" r="4.9" fill="#0c0c0c"/><circle cx="811.85" cy="513.55" r="3" fill="#e09a58"/><circle cx="836.95" cy="513.55" r="4.9" fill="#0c0c0c"/><circle cx="836.95" cy="513.55" r="3" fill="#e09a58"/><circle cx="849.5" cy="513.55" r="4.9" fill="#0c0c0c"/><circle cx="849.5" cy="513.55" r="3" fill="#e09a58"/><circle cx="874.6" cy="513.55" r="4.9" fill="#0c0c0c"/><circle cx="874.6" cy="513.55" r="3" fill="#e09a58"/><circle cx="887.1500000000001" cy="513.55" r="4.9" fill="#0c0c0c"/><circle cx="887.1500000000001" cy="513.55" r="3" fill="#e09a58"/><circle cx="949.9000000000001" cy="513.55" r="4.9" fill="#0c0c0c"/><circle cx="949.9000000000001" cy="513.55" r="3" fill="#e09a58"/><circle cx="962.45" cy="513.55" r="4.9" fill="#0c0c0c"/><circle cx="962.45" cy="513.55" r="3" fill="#e09a58"/><circle cx="648.7" cy="526.1" r="4.9" fill="#0c0c0c"/><circle cx="648.7" cy="526.1" r="3" fill="#e09a58"/><circle cx="661.25" cy="526.1" r="4.9" fill="#0c0c0c"/><circle cx="661.25" cy="526.1" r="3" fill="#e09a58"/><circle cx="899.7" cy="526.1" r="4.9" fill="#0c0c0c"/><circle cx="899.7" cy="526.1" r="3" fill="#e09a58"/><circle cx="912.25" cy="526.1" r="4.9" fill="#0c0c0c"/><circle cx="912.25" cy="526.1" r="3" fill="#e09a58"/><circle cx="924.8000000000001" cy="526.1" r="4.9" fill="#0c0c0c"/><circle cx="924.8000000000001" cy="526.1" r="3" fill="#e09a58"/><circle cx="949.9000000000001" cy="526.1" r="4.9" fill="#0c0c0c"/><circle cx="949.9000000000001" cy="526.1" r="3" fill="#e09a58"/><circle cx="962.45" cy="526.1" r="4.9" fill="#0c0c0c"/><circle cx="962.45" cy="526.1" r="3" fill="#e09a58"/><circle cx="648.7" cy="538.6500000000001" r="4.9" fill="#0c0c0c"/><circle cx="648.7" cy="538.6500000000001" r="3" fill="#e09a58"/><circle cx="661.25" cy="538.6500000000001" r="4.9" fill="#0c0c0c"/><circle cx="661.25" cy="538.6500000000001" r="3" fill="#e09a58"/><circle cx="949.9000000000001" cy="538.6500000000001" r="4.9" fill="#0c0c0c"/><circle cx="949.9000000000001" cy="538.6500000000001" r="3" fill="#e09a58"/><circle cx="962.45" cy="538.6500000000001" r="4.9" fill="#0c0c0c"/><circle cx="962.45" cy="538.6500000000001" r="3" fill="#e09a58"/><circle cx="661.25" cy="551.2" r="4.9" fill="#0c0c0c"/><circle cx="661.25" cy="551.2" r="3" fill="#e09a58"/><circle cx="673.8000000000001" cy="551.2" r="4.9" fill="#0c0c0c"/><circle cx="673.8000000000001" cy="551.2" r="3" fill="#e09a58"/><circle cx="686.35" cy="551.2" r="4.9" fill="#0c0c0c"/><circle cx="686.35" cy="551.2" r="3" fill="#e09a58"/><circle cx="698.9000000000001" cy="551.2" r="4.9" fill="#0c0c0c"/><circle cx="698.9000000000001" cy="551.2" r="3" fill="#e09a58"/><circle cx="711.45" cy="551.2" r="4.9" fill="#0c0c0c"/><circle cx="711.45" cy="551.2" r="3" fill="#e09a58"/><circle cx="724.0" cy="551.2" r="4.9" fill="#0c0c0c"/><circle cx="724.0" cy="551.2" r="3" fill="#e09a58"/><circle cx="736.5500000000001" cy="551.2" r="4.9" fill="#0c0c0c"/><circle cx="736.5500000000001" cy="551.2" r="3" fill="#e09a58"/><circle cx="749.1" cy="551.2" r="4.9" fill="#0c0c0c"/><circle cx="749.1" cy="551.2" r="3" fill="#e09a58"/><circle cx="761.6500000000001" cy="551.2" r="4.9" fill="#0c0c0c"/><circle cx="761.6500000000001" cy="551.2" r="3" fill="#e09a58"/><circle cx="774.2" cy="551.2" r="4.9" fill="#0c0c0c"/><circle cx="774.2" cy="551.2" r="3" fill="#e09a58"/><circle cx="786.75" cy="551.2" r="4.9" fill="#0c0c0c"/><circle cx="786.75" cy="551.2" r="3" fill="#e09a58"/><circle cx="799.3000000000001" cy="551.2" r="4.9" fill="#0c0c0c"/><circle cx="799.3000000000001" cy="551.2" r="3" fill="#e09a58"/><circle cx="811.85" cy="551.2" r="4.9" fill="#0c0c0c"/><circle cx="811.85" cy="551.2" r="3" fill="#e09a58"/><circle cx="824.4000000000001" cy="551.2" r="4.9" fill="#0c0c0c"/><circle cx="824.4000000000001" cy="551.2" r="3" fill="#e09a58"/><circle cx="836.95" cy="551.2" r="4.9" fill="#0c0c0c"/><circle cx="836.95" cy="551.2" r="3" fill="#e09a58"/><circle cx="849.5" cy="551.2" r="4.9" fill="#0c0c0c"/><circle cx="849.5" cy="551.2" r="3" fill="#e09a58"/><circle cx="862.0500000000001" cy="551.2" r="4.9" fill="#0c0c0c"/><circle cx="862.0500000000001" cy="551.2" r="3" fill="#e09a58"/><circle cx="874.6" cy="551.2" r="4.9" fill="#0c0c0c"/><circle cx="874.6" cy="551.2" r="3" fill="#e09a58"/><circle cx="887.1500000000001" cy="551.2" r="4.9" fill="#0c0c0c"/><circle cx="887.1500000000001" cy="551.2" r="3" fill="#e09a58"/><circle cx="899.7" cy="551.2" r="4.9" fill="#0c0c0c"/><circle cx="899.7" cy="551.2" r="3" fill="#e09a58"/><circle cx="912.25" cy="551.2" r="4.9" fill="#0c0c0c"/><circle cx="912.25" cy="551.2" r="3" fill="#e09a58"/><circle cx="924.8000000000001" cy="551.2" r="4.9" fill="#0c0c0c"/><circle cx="924.8000000000001" cy="551.2" r="3" fill="#e09a58"/><circle cx="937.3500000000001" cy="551.2" r="4.9" fill="#0c0c0c"/><circle cx="937.3500000000001" cy="551.2" r="3" fill="#e09a58"/><circle cx="949.9000000000001" cy="551.2" r="4.9" fill="#0c0c0c"/><circle cx="949.9000000000001" cy="551.2" r="3" fill="#e09a58"/><circle cx="661.25" cy="563.75" r="4.9" fill="#0c0c0c"/><circle cx="661.25" cy="563.75" r="3" fill="#e09a58"/><circle cx="673.8000000000001" cy="563.75" r="4.9" fill="#0c0c0c"/><circle cx="673.8000000000001" cy="563.75" r="3" fill="#e09a58"/><circle cx="686.35" cy="563.75" r="4.9" fill="#0c0c0c"/><circle cx="686.35" cy="563.75" r="3" fill="#e09a58"/><circle cx="698.9000000000001" cy="563.75" r="4.9" fill="#0c0c0c"/><circle cx="698.9000000000001" cy="563.75" r="3" fill="#e09a58"/><circle cx="711.45" cy="563.75" r="4.9" fill="#0c0c0c"/><circle cx="711.45" cy="563.75" r="3" fill="#e09a58"/><circle cx="724.0" cy="563.75" r="4.9" fill="#0c0c0c"/><circle cx="724.0" cy="563.75" r="3" fill="#e09a58"/><circle cx="736.5500000000001" cy="563.75" r="4.9" fill="#0c0c0c"/><circle cx="736.5500000000001" cy="563.75" r="3" fill="#e09a58"/><circle cx="749.1" cy="563.75" r="4.9" fill="#0c0c0c"/><circle cx="749.1" cy="563.75" r="3" fill="#e09a58"/><circle cx="761.6500000000001" cy="563.75" r="4.9" fill="#0c0c0c"/><circle cx="761.6500000000001" cy="563.75" r="3" fill="#e09a58"/><circle cx="774.2" cy="563.75" r="4.9" fill="#0c0c0c"/><circle cx="774.2" cy="563.75" r="3" fill="#e09a58"/><circle cx="786.75" cy="563.75" r="4.9" fill="#0c0c0c"/><circle cx="786.75" cy="563.75" r="3" fill="#e09a58"/><circle cx="799.3000000000001" cy="563.75" r="4.9" fill="#0c0c0c"/><circle cx="799.3000000000001" cy="563.75" r="3" fill="#e09a58"/><circle cx="811.85" cy="563.75" r="4.9" fill="#0c0c0c"/><circle cx="811.85" cy="563.75" r="3" fill="#e09a58"/><circle cx="824.4000000000001" cy="563.75" r="4.9" fill="#0c0c0c"/><circle cx="824.4000000000001" cy="563.75" r="3" fill="#e09a58"/><circle cx="836.95" cy="563.75" r="4.9" fill="#0c0c0c"/><circle cx="836.95" cy="563.75" r="3" fill="#e09a58"/><circle cx="849.5" cy="563.75" r="4.9" fill="#0c0c0c"/><circle cx="849.5" cy="563.75" r="3" fill="#e09a58"/><circle cx="862.0500000000001" cy="563.75" r="4.9" fill="#0c0c0c"/><circle cx="862.0500000000001" cy="563.75" r="3" fill="#e09a58"/><circle cx="874.6" cy="563.75" r="4.9" fill="#0c0c0c"/><circle cx="874.6" cy="563.75" r="3" fill="#e09a58"/><circle cx="887.1500000000001" cy="563.75" r="4.9" fill="#0c0c0c"/><circle cx="887.1500000000001" cy="563.75" r="3" fill="#e09a58"/><circle cx="899.7" cy="563.75" r="4.9" fill="#0c0c0c"/><circle cx="899.7" cy="563.75" r="3" fill="#e09a58"/><circle cx="912.25" cy="563.75" r="4.9" fill="#0c0c0c"/><circle cx="912.25" cy="563.75" r="3" fill="#e09a58"/><circle cx="924.8000000000001" cy="563.75" r="4.9" fill="#0c0c0c"/><circle cx="924.8000000000001" cy="563.75" r="3" fill="#e09a58"/><circle cx="937.3500000000001" cy="563.75" r="4.9" fill="#0c0c0c"/><circle cx="937.3500000000001" cy="563.75" r="3" fill="#e09a58"/><circle cx="949.9000000000001" cy="563.75" r="4.9" fill="#0c0c0c"/><circle cx="949.9000000000001" cy="563.75" r="3" fill="#e09a58"/><rect x="648.4" y="309.7" width="12" height="12" fill="#4f85bf" stroke="#2f5c98" stroke-width="0.9"/><circle cx="654.4" cy="315.7" r="2.4" fill="#d8c470"/><path d="M647.4 323.3 h14" stroke="#b070c0" stroke-width="0.8"/><rect x="673.7" y="309.7" width="12" height="12" fill="#4f85bf" stroke="#2f5c98" stroke-width="0.9"/><circle cx="679.7" cy="315.7" r="2.4" fill="#d8c470"/><path d="M672.7 323.3 h14" stroke="#b070c0" stroke-width="0.8"/><rect x="648.4" y="325.3" width="12" height="12" fill="#4f85bf" stroke="#2f5c98" stroke-width="0.9"/><circle cx="654.4" cy="331.3" r="2.4" fill="#d8c470"/><path d="M647.4 338.90000000000003 h14" stroke="#b070c0" stroke-width="0.8"/><rect x="673.7" y="325.3" width="12" height="12" fill="#4f85bf" stroke="#2f5c98" stroke-width="0.9"/><circle cx="679.7" cy="331.3" r="2.4" fill="#d8c470"/><path d="M672.7 338.90000000000003 h14" stroke="#b070c0" stroke-width="0.8"/><rect x="648.4" y="354.4" width="12" height="12" fill="#4f85bf" stroke="#2f5c98" stroke-width="0.9"/><circle cx="654.4" cy="360.4" r="2.4" fill="#d8c470"/><path d="M647.4 368.0 h14" stroke="#b070c0" stroke-width="0.8"/><rect x="673.7" y="354.4" width="12" height="12" fill="#4f85bf" stroke="#2f5c98" stroke-width="0.9"/><circle cx="679.7" cy="360.4" r="2.4" fill="#d8c470"/><path d="M672.7 368.0 h14" stroke="#b070c0" stroke-width="0.8"/><rect x="648.4" y="372.9" width="12" height="12" fill="#4f85bf" stroke="#2f5c98" stroke-width="0.9"/><circle cx="654.4" cy="378.9" r="2.4" fill="#d8c470"/><path d="M647.4 386.5 h14" stroke="#b070c0" stroke-width="0.8"/><rect x="673.7" y="372.9" width="12" height="12" fill="#4f85bf" stroke="#2f5c98" stroke-width="0.9"/><circle cx="679.7" cy="378.9" r="2.4" fill="#d8c470"/><path d="M672.7 386.5 h14" stroke="#b070c0" stroke-width="0.8"/><text x="654" y="462" font-family="Liberation Mono" font-size="10" fill="#eeeeb0">C24</text><text x="654" y="476" font-family="Liberation Mono" font-size="10" fill="#eeeeb0">R56</text><text x="654" y="547" font-family="Liberation Mono" font-size="10" fill="#eeeeb0">R53</text><text x="654" y="562" font-family="Liberation Mono" font-size="10" fill="#eeeeb0">R62</text><text x="930" y="462" font-family="Liberation Mono" font-size="10" fill="#eeeeb0">C24</text><text x="930" y="476" font-family="Liberation Mono" font-size="10" fill="#eeeeb0">R55</text><text transform="translate(697,219) rotate(90)" font-family="Liberation Mono" font-size="10" fill="#eeeeb0">R22</text><rect x="771" y="161" width="8" height="20" rx="3" fill="#d42d2d"/><rect x="771.5" y="167.5" width="7" height="7" fill="#3a1a5a"/><path d="M773.5 167 v8 M776.5 167 v8 M771 171 h8" stroke="#b050d0" stroke-width="0.6"/><path d="M767 178 l16 -13 M767 173 l16 -13 M767 183 l16 -13" stroke="#88b070" stroke-width="0.5"/><rect x="783" y="161" width="8" height="20" rx="3" fill="#d42d2d"/><rect x="783.5" y="167.5" width="7" height="7" fill="#3a1a5a"/><path d="M785.5 167 v8 M788.5 167 v8 M783 171 h8" stroke="#b050d0" stroke-width="0.6"/><path d="M779 178 l16 -13 M779 173 l16 -13 M779 183 l16 -13" stroke="#88b070" stroke-width="0.5"/><rect x="833" y="161" width="8" height="20" rx="3" fill="#d42d2d"/><rect x="833.5" y="167.5" width="7" height="7" fill="#3a1a5a"/><path d="M835.5 167 v8 M838.5 167 v8 M833 171 h8" stroke="#b050d0" stroke-width="0.6"/><path d="M829 178 l16 -13 M829 173 l16 -13 M829 183 l16 -13" stroke="#88b070" stroke-width="0.5"/><rect x="846" y="161" width="8" height="20" rx="3" fill="#d42d2d"/><rect x="846.5" y="167.5" width="7" height="7" fill="#3a1a5a"/><path d="M848.5 167 v8 M851.5 167 v8 M846 171 h8" stroke="#b050d0" stroke-width="0.6"/><path d="M842 178 l16 -13 M842 173 l16 -13 M842 183 l16 -13" stroke="#88b070" stroke-width="0.5"/><rect x="707" y="189" width="8" height="20" rx="3" fill="#d42d2d"/><rect x="707.5" y="195.5" width="7" height="7" fill="#3a1a5a"/><path d="M709.5 195 v8 M712.5 195 v8 M707 199 h8" stroke="#b050d0" stroke-width="0.6"/><path d="M703 206 l16 -13 M703 201 l16 -13 M703 211 l16 -13" stroke="#88b070" stroke-width="0.5"/><rect x="720" y="189" width="8" height="20" rx="3" fill="#d42d2d"/><rect x="720.5" y="195.5" width="7" height="7" fill="#3a1a5a"/><path d="M722.5 195 v8 M725.5 195 v8 M720 199 h8" stroke="#b050d0" stroke-width="0.6"/><path d="M716 206 l16 -13 M716 201 l16 -13 M716 211 l16 -13" stroke="#88b070" stroke-width="0.5"/><rect x="748" y="189" width="8" height="20" rx="3" fill="#d42d2d"/><rect x="748.5" y="195.5" width="7" height="7" fill="#3a1a5a"/><path d="M750.5 195 v8 M753.5 195 v8 M748 199 h8" stroke="#b050d0" stroke-width="0.6"/><path d="M744 206 l16 -13 M744 201 l16 -13 M744 211 l16 -13" stroke="#88b070" stroke-width="0.5"/><rect x="761" y="189" width="8" height="20" rx="3" fill="#d42d2d"/><rect x="761.5" y="195.5" width="7" height="7" fill="#3a1a5a"/><path d="M763.5 195 v8 M766.5 195 v8 M761 199 h8" stroke="#b050d0" stroke-width="0.6"/><path d="M757 206 l16 -13 M757 201 l16 -13 M757 211 l16 -13" stroke="#88b070" stroke-width="0.5"/><rect x="798" y="189" width="8" height="20" rx="3" fill="#d42d2d"/><rect x="798.5" y="195.5" width="7" height="7" fill="#3a1a5a"/><path d="M800.5 195 v8 M803.5 195 v8 M798 199 h8" stroke="#b050d0" stroke-width="0.6"/><path d="M794 206 l16 -13 M794 201 l16 -13 M794 211 l16 -13" stroke="#88b070" stroke-width="0.5"/><rect x="811" y="189" width="8" height="20" rx="3" fill="#d42d2d"/><rect x="811.5" y="195.5" width="7" height="7" fill="#3a1a5a"/><path d="M813.5 195 v8 M816.5 195 v8 M811 199 h8" stroke="#b050d0" stroke-width="0.6"/><path d="M807 206 l16 -13 M807 201 l16 -13 M807 211 l16 -13" stroke="#88b070" stroke-width="0.5"/><rect x="855" y="189" width="8" height="20" rx="3" fill="#d42d2d"/><rect x="855.5" y="195.5" width="7" height="7" fill="#3a1a5a"/><path d="M857.5 195 v8 M860.5 195 v8 M855 199 h8" stroke="#b050d0" stroke-width="0.6"/><path d="M851 206 l16 -13 M851 201 l16 -13 M851 211 l16 -13" stroke="#88b070" stroke-width="0.5"/><rect x="868" y="189" width="8" height="20" rx="3" fill="#d42d2d"/><rect x="868.5" y="195.5" width="7" height="7" fill="#3a1a5a"/><path d="M870.5 195 v8 M873.5 195 v8 M868 199 h8" stroke="#b050d0" stroke-width="0.6"/><path d="M864 206 l16 -13 M864 201 l16 -13 M864 211 l16 -13" stroke="#88b070" stroke-width="0.5"/><path d="M743 192.4 V183.6 H881 V192.4 M774 183.6 V192.4 M793 183.6 V192.4 M825 183.6 V192.4 M850 183.6 V192.4" stroke="#93d08e" stroke-width="0.9" fill="none"/><circle cx="743" cy="192.4" r="2.2" fill="#c9c46a"/><circle cx="774" cy="192.4" r="2.2" fill="#c9c46a"/><circle cx="793" cy="192.4" r="2.2" fill="#c9c46a"/><circle cx="825" cy="192.4" r="2.2" fill="#c9c46a"/><circle cx="850" cy="192.4" r="2.2" fill="#c9c46a"/><circle cx="881" cy="192.4" r="2.2" fill="#c9c46a"/><path d="M757.6 134 V191 M759.8 134 V191 M790 134 L807 153 V191 M792.5 134 L809.5 153 V191 M825 134 L866 174 V192 M827.5 134 L868.5 174 V192" stroke="#4f86c6" stroke-width="1" fill="none"/><path d="M862 134 L879 151 V183" stroke="#93d08e" stroke-width="0.8" fill="none"/><rect x="825" y="212" width="12" height="12" fill="#4d88c6"/><circle cx="831" cy="218" r="2.3" fill="#d8c470"/><rect x="825" y="231" width="12" height="12" fill="#4d88c6"/><circle cx="831" cy="237" r="2.3" fill="#d8c470"/><path d="M831 224 V231 M826 227.5 h10" stroke="#c8d8e8" stroke-width="0.8"/><rect x="906" y="143.4" width="12" height="37.599999999999994" fill="#d42d2d"/><rect x="945" y="143.4" width="12.5" height="37.599999999999994" fill="#d42d2d"/><circle cx="912" cy="148.0" r="1.6" fill="#e9a25a"/><circle cx="912" cy="155.0" r="1.6" fill="#e9a25a"/><circle cx="912" cy="162.0" r="1.6" fill="#e9a25a"/><circle cx="912" cy="169.0" r="1.6" fill="#e9a25a"/><circle cx="912" cy="176.0" r="1.6" fill="#e9a25a"/><circle cx="951" cy="148.0" r="1.6" fill="#e9a25a"/><circle cx="951" cy="155.0" r="1.6" fill="#e9a25a"/><circle cx="951" cy="162.0" r="1.6" fill="#e9a25a"/><circle cx="951" cy="169.0" r="1.6" fill="#e9a25a"/><circle cx="951" cy="176.0" r="1.6" fill="#e9a25a"/><path d="M925.5 134 V249.6 M938 134 V249.6" stroke="#4f86c6" stroke-width="1.2"/><path d="M957 180 L963 186 V230 L976 240" stroke="#93d08e" stroke-width="0.8" fill="none"/><text x="919" y="141" font-family="Liberation Mono" font-size="15.2" fill="#eeeeb0" textLength="25" lengthAdjust="spacingAndGlyphs">C55</text><text x="870.8" y="229.3" font-family="Liberation Mono" font-size="15.6" fill="#eeeeb0" textLength="33.60000000000002" lengthAdjust="spacingAndGlyphs" transform="translate(1775.1999999999998,0) scale(-1,1)">R101</text><text x="958" y="229.3" font-family="Liberation Mono" font-size="15.6" fill="#eeeeb0" textLength="34" lengthAdjust="spacingAndGlyphs" transform="translate(1950,0) scale(-1,1)">R100</text><path d="M886 224 H916" stroke="#d544d5" stroke-width="1"/><rect x="908" y="219" width="10" height="10" fill="#4d88c6"/><circle cx="913" cy="224" r="2" fill="#d8c470"/><rect x="920" y="219" width="10" height="10" fill="#4d88c6"/><circle cx="925" cy="224" r="2" fill="#d8c470"/><rect x="933" y="219" width="10" height="10" fill="#4d88c6"/><circle cx="938" cy="224" r="2" fill="#d8c470"/><rect x="945" y="219" width="10" height="10" fill="#4d88c6"/><circle cx="950" cy="224" r="2" fill="#d8c470"/><rect x="945" y="231" width="10" height="10" fill="#4d88c6"/><circle cx="950" cy="236" r="2" fill="#d8c470"/><rect x="945" y="244" width="10" height="10" fill="#4d88c6"/><circle cx="950" cy="249" r="2" fill="#d8c470"/><path d="M975.6 237 V577" stroke="#dfe6e0" stroke-width="1.6"/><circle cx="1070" cy="215" r="4.6" fill="#0c0c0c"/><circle cx="1070" cy="215" r="2.6" fill="#c9c46a"/><circle cx="987" cy="305" r="4.6" fill="#0c0c0c"/><circle cx="987" cy="305" r="2.6" fill="#c9c46a"/><circle cx="993" cy="313" r="4.6" fill="#0c0c0c"/><circle cx="993" cy="313" r="2.6" fill="#c9c46a"/><circle cx="1013" cy="320" r="4.6" fill="#0c0c0c"/><circle cx="1013" cy="320" r="2.6" fill="#c9c46a"/><circle cx="1030" cy="327" r="4.6" fill="#0c0c0c"/><circle cx="1030" cy="327" r="2.6" fill="#c9c46a"/><circle cx="1035" cy="314" r="4.6" fill="#0c0c0c"/><circle cx="1035" cy="314" r="2.6" fill="#c9c46a"/><circle cx="1050" cy="320" r="4.6" fill="#0c0c0c"/><circle cx="1050" cy="320" r="2.6" fill="#c9c46a"/><circle cx="1080" cy="334" r="4.6" fill="#0c0c0c"/><circle cx="1080" cy="334" r="2.6" fill="#c9c46a"/><circle cx="1005" cy="350" r="4.6" fill="#0c0c0c"/><circle cx="1005" cy="350" r="2.6" fill="#c9c46a"/><circle cx="1018" cy="350" r="4.6" fill="#0c0c0c"/><circle cx="1018" cy="350" r="2.6" fill="#c9c46a"/><circle cx="1056" cy="350" r="4.6" fill="#0c0c0c"/><circle cx="1056" cy="350" r="2.6" fill="#c9c46a"/><circle cx="1103" cy="355" r="4.6" fill="#0c0c0c"/><circle cx="1103" cy="355" r="2.6" fill="#c9c46a"/><circle cx="997" cy="363" r="4.6" fill="#0c0c0c"/><circle cx="997" cy="363" r="2.6" fill="#c9c46a"/><circle cx="1025" cy="363" r="4.6" fill="#0c0c0c"/><circle cx="1025" cy="363" r="2.6" fill="#c9c46a"/><circle cx="1045" cy="363" r="4.6" fill="#0c0c0c"/><circle cx="1045" cy="363" r="2.6" fill="#c9c46a"/><circle cx="1075" cy="363" r="4.6" fill="#0c0c0c"/><circle cx="1075" cy="363" r="2.6" fill="#c9c46a"/><circle cx="1090" cy="365" r="4.6" fill="#0c0c0c"/><circle cx="1090" cy="365" r="2.6" fill="#c9c46a"/><circle cx="1070" cy="372" r="4.6" fill="#0c0c0c"/><circle cx="1070" cy="372" r="2.6" fill="#c9c46a"/><circle cx="1040" cy="380" r="4.6" fill="#0c0c0c"/><circle cx="1040" cy="380" r="2.6" fill="#c9c46a"/><circle cx="1085" cy="377" r="4.6" fill="#0c0c0c"/><circle cx="1085" cy="377" r="2.6" fill="#c9c46a"/><circle cx="1090" cy="430" r="4.6" fill="#0c0c0c"/><circle cx="1090" cy="430" r="2.6" fill="#c9c46a"/><circle cx="1062" cy="446" r="4.6" fill="#0c0c0c"/><circle cx="1062" cy="446" r="2.6" fill="#c9c46a"/><rect x="1064" y="268" width="14" height="12" fill="#d42d2d"/><rect x="1088" y="268" width="12" height="12" fill="#d42d2d"/><rect x="1064" y="282" width="14" height="9" fill="#d42d2d"/><rect x="1088" y="282" width="12" height="9" fill="#d42d2d"/><rect x="1064" y="295" width="13" height="11" fill="#d42d2d"/><rect x="1088" y="295" width="12" height="11" fill="#d42d2d"/><rect x="1022" y="271" width="18" height="6" rx="2" fill="#d42d2d"/><rect x="1028" y="271" width="6" height="6" fill="#2a1a40"/><rect x="1022" y="284" width="18" height="6" rx="2" fill="#d42d2d"/><rect x="1028" y="284" width="6" height="6" fill="#2a1a40"/><path d="M1040 274 H1064 M1040 287 H1064" stroke="#b0443a" stroke-width="1.4"/><path d="M1083 278 q-3 0 -3 6 V318" stroke="#93d08e" stroke-width="1.4" fill="none"/><path d="M1061 264 v-3 h3 M1105 264 v-3 h-3 M1061 308 v3 h3" stroke="#eeeeb0" stroke-width="1" fill="none"/><text x="1021" y="266.4" font-family="Liberation Mono" font-size="14.3" fill="#eeeeb0" textLength="34" lengthAdjust="spacingAndGlyphs">C453</text><text x="1069" y="261" font-family="Liberation Mono" font-size="15.5" fill="#eeeeb0" textLength="26" lengthAdjust="spacingAndGlyphs">U60</text><text x="1022" y="304.7" font-family="Liberation Mono" font-size="15.5" fill="#eeeeb0" textLength="34" lengthAdjust="spacingAndGlyphs">C454</text><text x="1029" y="323.4" font-family="Liberation Mono" font-size="16.5" fill="#eeeeb0" textLength="33" lengthAdjust="spacingAndGlyphs">C452</text><circle cx="1070" cy="318" r="2.6" fill="#e9a25a" stroke="#d42d2d" stroke-width="1.2"/><circle cx="1082" cy="318" r="2.6" fill="#e9a25a" stroke="#d42d2d" stroke-width="1.2"/><path d="M1083 322 L1110 348" stroke="#93d08e" stroke-width="0.8"/><rect x="1054.4" y="380" width="11.599999999999909" height="35" fill="#d42d2d"/><rect x="1094" y="380" width="11" height="35" fill="#d42d2d"/><circle cx="1060" cy="385.0" r="1.6" fill="#e9a25a"/><circle cx="1060" cy="390.2" r="1.6" fill="#e9a25a"/><circle cx="1060" cy="395.4" r="1.6" fill="#e9a25a"/><circle cx="1060" cy="400.6" r="1.6" fill="#e9a25a"/><circle cx="1060" cy="405.8" r="1.6" fill="#e9a25a"/><circle cx="1060" cy="411.0" r="1.6" fill="#e9a25a"/><circle cx="1099.5" cy="385.0" r="1.6" fill="#e9a25a"/><circle cx="1099.5" cy="390.2" r="1.6" fill="#e9a25a"/><circle cx="1099.5" cy="395.4" r="1.6" fill="#e9a25a"/><circle cx="1099.5" cy="400.6" r="1.6" fill="#e9a25a"/><circle cx="1099.5" cy="405.8" r="1.6" fill="#e9a25a"/><circle cx="1099.5" cy="411.0" r="1.6" fill="#e9a25a"/><text transform="translate(1108,384.7) rotate(90)" x="0" y="0" font-family="Liberation Mono" font-size="16.7" fill="#eeeeb0" textLength="25.0" lengthAdjust="spacingAndGlyphs">C56</text><path d="M1080 385 V410 M1075 398 h10" stroke="#a890b8" stroke-width="0.8"/><path d="M1083 322 L1110 348 V400" stroke="#93d08e" stroke-width="0.8" fill="none"/><text transform="translate(989.5,364) rotate(90)" x="0" y="0" font-family="Liberation Mono" font-size="15.9" fill="#eeeeb0" textLength="23.5" lengthAdjust="spacingAndGlyphs">R51</text><path d="M997.5 485 V434.4 H1110.7" stroke="#f0f0a8" stroke-width="2.4" fill="none"/><path d="M998.4 521.6 V573 H1110" stroke="#f0f0a8" stroke-width="2.4" fill="none"/><path d="M1110.7 434.4 L1137 460 V485 M1110 573 L1137 548 V521" stroke="#e9ab90" stroke-width="2.4" fill="none"/><text x="995.4" y="432" font-family="Liberation Mono" font-size="15.9" fill="#eeeeb0" textLength="34.000000000000114" lengthAdjust="spacingAndGlyphs">C408</text><rect x="996" y="493" width="43" height="20.399999999999977" fill="#d42d2d"/><rect x="1094.7" y="493" width="45.299999999999955" height="20.399999999999977" fill="#d42d2d"/><text x="1003" y="510" font-family="Liberation Mono" font-size="9" fill="#f0b0a0">2 GND</text><text x="1106" y="510" font-family="Liberation Mono" font-size="9" fill="#f0b0a0">1 12V0</text><circle cx="1003" cy="497.0" r="1.6" fill="#e9a25a"/><circle cx="1003" cy="509.0" r="1.6" fill="#e9a25a"/><path d="M1063 495 V513 M1058 504 h10" stroke="#a890b8" stroke-width="0.8"/><path d="M990.5 560 V634 M998.4 575 V634" stroke="#b0443a" stroke-width="2"/><path d="M976 535 H960 L990 560 M976 545 L998 570" stroke="#b0443a" stroke-width="2" fill="none"/><path d="M976 570 L1000 548" stroke="#f0f0a8" stroke-width="1.5"/><rect x="1066.4" y="593" width="54.3" height="45" fill="none" stroke="#d544d5" stroke-width="1.8"/><rect x="1078" y="596" width="27" height="10" fill="#d42d2d"/><rect x="1105" y="615" width="13" height="9" fill="#d42d2d"/><circle cx="1099" cy="601" r="1.8" fill="#e9a25a"/><path d="M1110 252 H1330" stroke="#8a4a40" stroke-width="1"/><path d="M1128 270 H1330 M1128 270 V634" stroke="#b0443a" stroke-width="1.2" fill="none"/><path d="M1145 394 V284 H1310" stroke="#e9ab90" stroke-width="0.8" stroke-dasharray="4 2" fill="none"/><path d="M1146 337 H1228 V318 M1228 337 V394" stroke="#4a6a50" stroke-width="1.6" fill="none"/><path d="M1228 394 V318" stroke="#e9ab90" stroke-width="0.7"/><rect x="1130" y="308.5" width="125" height="3" fill="#d42d2d"/><rect x="1130" y="366.5" width="125" height="3" fill="#d42d2d"/><rect x="1189" y="306" width="7" height="8" fill="#d42d2d"/><rect x="1233" y="306" width="20" height="8" fill="#d42d2d"/><rect x="1189" y="364" width="7" height="8" fill="#d42d2d"/><rect x="1233" y="364" width="20" height="8" fill="#d42d2d"/><rect x="1152" y="300" width="37.700000000000045" height="16" fill="#d42d2d"/><rect x="1152" y="360" width="37.700000000000045" height="16" fill="#d42d2d"/><circle cx="1158.0" cy="310" r="1.7" fill="#e9a25a"/><circle cx="1164.3" cy="310" r="1.7" fill="#e9a25a"/><circle cx="1170.6" cy="310" r="1.7" fill="#e9a25a"/><circle cx="1176.9" cy="310" r="1.7" fill="#e9a25a"/><circle cx="1183.2" cy="310" r="1.7" fill="#e9a25a"/><text x="1171" y="307" text-anchor="middle" font-family="Liberation Mono" font-size="6" fill="#f0b0a0">2</text><text x="1171" y="315" text-anchor="middle" font-family="Liberation Mono" font-size="7" fill="#f0b0a0">GND</text><text x="1171" y="366" text-anchor="middle" font-family="Liberation Mono" font-size="6" fill="#f0b0a0">1</text><text x="1171" y="374" text-anchor="middle" font-family="Liberation Mono" font-size="8" fill="#f0b0a0">12V0</text><path d="M1165 344 h12 M1171 338 v12" stroke="#c08878" stroke-width="0.8"/><rect x="1196" y="300" width="37.700000000000045" height="16" fill="#d42d2d"/><rect x="1196" y="360" width="37.700000000000045" height="16" fill="#d42d2d"/><circle cx="1202.0" cy="310" r="1.7" fill="#e9a25a"/><circle cx="1208.3" cy="310" r="1.7" fill="#e9a25a"/><circle cx="1214.6" cy="310" r="1.7" fill="#e9a25a"/><circle cx="1220.9" cy="310" r="1.7" fill="#e9a25a"/><circle cx="1227.2" cy="310" r="1.7" fill="#e9a25a"/><text x="1215" y="307" text-anchor="middle" font-family="Liberation Mono" font-size="6" fill="#f0b0a0">2</text><text x="1215" y="315" text-anchor="middle" font-family="Liberation Mono" font-size="7" fill="#f0b0a0">GND</text><text x="1215" y="366" text-anchor="middle" font-family="Liberation Mono" font-size="6" fill="#f0b0a0">1</text><text x="1215" y="374" text-anchor="middle" font-family="Liberation Mono" font-size="8" fill="#f0b0a0">12V0</text><path d="M1209 344 h12 M1215 338 v12" stroke="#c08878" stroke-width="0.8"/><text x="1162.6" y="298.6" font-family="Liberation Mono" font-size="16.1" fill="#e9ab90" textLength="15.599999999999909" lengthAdjust="spacingAndGlyphs">C1</text><text x="1206" y="298.6" font-family="Liberation Mono" font-size="16.1" fill="#e9ab90" textLength="15.599999999999909" lengthAdjust="spacingAndGlyphs">C2</text><text x="1146.7" y="391" font-family="Liberation Mono" font-size="15.9" fill="#e9ab90" textLength="24.299999999999955" lengthAdjust="spacingAndGlyphs">2V5</text><rect x="1252" y="295" width="17" height="11" fill="#d42d2d"/><circle cx="1260.5" cy="299.5" r="1.6" fill="#e9a25a"/><rect x="1252" y="314" width="17" height="11" fill="#d42d2d"/><circle cx="1260.5" cy="318.5" r="1.6" fill="#e9a25a"/><rect x="1252" y="344" width="17" height="11" fill="#d42d2d"/><circle cx="1260.5" cy="348.5" r="1.6" fill="#e9a25a"/><rect x="1252" y="364" width="17" height="12" fill="#d42d2d"/><circle cx="1260.5" cy="369.0" r="1.6" fill="#e9a25a"/><path d="M1245 396 l12 0 l-12 -12z" fill="none" stroke="#e9ab90" stroke-width="1.6"/><rect x="1284.0" y="294.0" width="11" height="11" fill="#d42d2d"/><circle cx="1289.5" cy="299.5" r="2" fill="#e9a25a"/><rect x="1299.5" y="294.0" width="11" height="11" fill="#d42d2d"/><circle cx="1305" cy="299.5" r="2" fill="#e9a25a"/><rect x="1315.0" y="294.0" width="11" height="11" fill="#d42d2d"/><circle cx="1320.5" cy="299.5" r="2" fill="#e9a25a"/><rect x="1284.0" y="314.0" width="11" height="11" fill="#d42d2d"/><circle cx="1289.5" cy="319.5" r="2" fill="#e9a25a"/><rect x="1299.5" y="314.0" width="11" height="11" fill="#d42d2d"/><circle cx="1305" cy="319.5" r="2" fill="#e9a25a"/><rect x="1315.0" y="314.0" width="11" height="11" fill="#d42d2d"/><circle cx="1320.5" cy="319.5" r="2" fill="#e9a25a"/><rect x="1284.0" y="330.0" width="11" height="11" fill="#d42d2d"/><circle cx="1289.5" cy="335.5" r="2" fill="#e9a25a"/><rect x="1299.5" y="330.0" width="11" height="11" fill="#d42d2d"/><circle cx="1305" cy="335.5" r="2" fill="#e9a25a"/><rect x="1315.0" y="330.0" width="11" height="11" fill="#d42d2d"/><circle cx="1320.5" cy="335.5" r="2" fill="#e9a25a"/><rect x="1284.0" y="344.5" width="11" height="11" fill="#d42d2d"/><circle cx="1289.5" cy="350" r="2" fill="#e9a25a"/><rect x="1299.5" y="344.5" width="11" height="11" fill="#d42d2d"/><circle cx="1305" cy="350" r="2" fill="#e9a25a"/><rect x="1315.0" y="344.5" width="11" height="11" fill="#d42d2d"/><circle cx="1320.5" cy="350" r="2" fill="#e9a25a"/><rect x="1284.5" y="364.5" width="10" height="10" fill="#4d88c6"/><circle cx="1289.5" cy="369.5" r="2" fill="#d8c470"/><rect x="1300" y="364.5" width="10" height="10" fill="#4d88c6"/><circle cx="1305" cy="369.5" r="2" fill="#d8c470"/><rect x="1284.5" y="377" width="10" height="10" fill="#4d88c6"/><circle cx="1289.5" cy="382" r="2" fill="#d8c470"/><rect x="1300" y="377" width="10" height="10" fill="#4d88c6"/><circle cx="1305" cy="382" r="2" fill="#d8c470"/><rect x="1315" y="364" width="11" height="11" fill="#d42d2d"/><path d="M1145 510 V400 H1310" stroke="#e9ab90" stroke-width="0.8" stroke-dasharray="4 2" fill="none"/><path d="M1146 453 H1228 V434 M1228 453 V510" stroke="#4a6a50" stroke-width="1.6" fill="none"/><path d="M1228 510 V434" stroke="#e9ab90" stroke-width="0.7"/><rect x="1130" y="424.5" width="125" height="3" fill="#d42d2d"/><rect x="1130" y="482.5" width="125" height="3" fill="#d42d2d"/><rect x="1189" y="422" width="7" height="8" fill="#d42d2d"/><rect x="1233" y="422" width="20" height="8" fill="#d42d2d"/><rect x="1189" y="480" width="7" height="8" fill="#d42d2d"/><rect x="1233" y="480" width="20" height="8" fill="#d42d2d"/><rect x="1152" y="416" width="37.700000000000045" height="16" fill="#d42d2d"/><rect x="1152" y="476" width="37.700000000000045" height="16" fill="#d42d2d"/><circle cx="1158.0" cy="426" r="1.7" fill="#e9a25a"/><circle cx="1164.3" cy="426" r="1.7" fill="#e9a25a"/><circle cx="1170.6" cy="426" r="1.7" fill="#e9a25a"/><circle cx="1176.9" cy="426" r="1.7" fill="#e9a25a"/><circle cx="1183.2" cy="426" r="1.7" fill="#e9a25a"/><text x="1171" y="423" text-anchor="middle" font-family="Liberation Mono" font-size="6" fill="#f0b0a0">2</text><text x="1171" y="431" text-anchor="middle" font-family="Liberation Mono" font-size="7" fill="#f0b0a0">GND</text><text x="1171" y="482" text-anchor="middle" font-family="Liberation Mono" font-size="6" fill="#f0b0a0">1</text><text x="1171" y="490" text-anchor="middle" font-family="Liberation Mono" font-size="8" fill="#f0b0a0">12V0</text><path d="M1165 460 h12 M1171 454 v12" stroke="#c08878" stroke-width="0.8"/><rect x="1196" y="416" width="37.700000000000045" height="16" fill="#d42d2d"/><rect x="1196" y="476" width="37.700000000000045" height="16" fill="#d42d2d"/><circle cx="1202.0" cy="426" r="1.7" fill="#e9a25a"/><circle cx="1208.3" cy="426" r="1.7" fill="#e9a25a"/><circle cx="1214.6" cy="426" r="1.7" fill="#e9a25a"/><circle cx="1220.9" cy="426" r="1.7" fill="#e9a25a"/><circle cx="1227.2" cy="426" r="1.7" fill="#e9a25a"/><text x="1215" y="423" text-anchor="middle" font-family="Liberation Mono" font-size="6" fill="#f0b0a0">2</text><text x="1215" y="431" text-anchor="middle" font-family="Liberation Mono" font-size="7" fill="#f0b0a0">GND</text><text x="1215" y="482" text-anchor="middle" font-family="Liberation Mono" font-size="6" fill="#f0b0a0">1</text><text x="1215" y="490" text-anchor="middle" font-family="Liberation Mono" font-size="8" fill="#f0b0a0">12V0</text><path d="M1209 460 h12 M1215 454 v12" stroke="#c08878" stroke-width="0.8"/><text x="1162.6" y="414.6" font-family="Liberation Mono" font-size="16.1" fill="#e9ab90" textLength="23.40000000000009" lengthAdjust="spacingAndGlyphs">C12</text><text x="1201.5" y="414.6" font-family="Liberation Mono" font-size="16.1" fill="#e9ab90" textLength="23.40000000000009" lengthAdjust="spacingAndGlyphs">C11</text><text x="1146.7" y="507" font-family="Liberation Mono" font-size="15.9" fill="#e9ab90" textLength="40.5" lengthAdjust="spacingAndGlyphs">1V0_2</text><rect x="1252" y="411" width="17" height="11" fill="#d42d2d"/><circle cx="1260.5" cy="415.5" r="1.6" fill="#e9a25a"/><rect x="1252" y="430" width="17" height="11" fill="#d42d2d"/><circle cx="1260.5" cy="434.5" r="1.6" fill="#e9a25a"/><rect x="1252" y="460" width="17" height="11" fill="#d42d2d"/><circle cx="1260.5" cy="464.5" r="1.6" fill="#e9a25a"/><rect x="1252" y="480" width="17" height="12" fill="#d42d2d"/><circle cx="1260.5" cy="485.0" r="1.6" fill="#e9a25a"/><path d="M1245 512 l12 0 l-12 -12z" fill="none" stroke="#e9ab90" stroke-width="1.6"/><rect x="1284.0" y="410.0" width="11" height="11" fill="#d42d2d"/><circle cx="1289.5" cy="415.5" r="2" fill="#e9a25a"/><rect x="1299.5" y="410.0" width="11" height="11" fill="#d42d2d"/><circle cx="1305" cy="415.5" r="2" fill="#e9a25a"/><rect x="1315.0" y="410.0" width="11" height="11" fill="#d42d2d"/><circle cx="1320.5" cy="415.5" r="2" fill="#e9a25a"/><rect x="1284.0" y="430.0" width="11" height="11" fill="#d42d2d"/><circle cx="1289.5" cy="435.5" r="2" fill="#e9a25a"/><rect x="1299.5" y="430.0" width="11" height="11" fill="#d42d2d"/><circle cx="1305" cy="435.5" r="2" fill="#e9a25a"/><rect x="1315.0" y="430.0" width="11" height="11" fill="#d42d2d"/><circle cx="1320.5" cy="435.5" r="2" fill="#e9a25a"/><rect x="1284.0" y="446.0" width="11" height="11" fill="#d42d2d"/><circle cx="1289.5" cy="451.5" r="2" fill="#e9a25a"/><rect x="1299.5" y="446.0" width="11" height="11" fill="#d42d2d"/><circle cx="1305" cy="451.5" r="2" fill="#e9a25a"/><rect x="1315.0" y="446.0" width="11" height="11" fill="#d42d2d"/><circle cx="1320.5" cy="451.5" r="2" fill="#e9a25a"/><rect x="1284.0" y="460.5" width="11" height="11" fill="#d42d2d"/><circle cx="1289.5" cy="466" r="2" fill="#e9a25a"/><rect x="1299.5" y="460.5" width="11" height="11" fill="#d42d2d"/><circle cx="1305" cy="466" r="2" fill="#e9a25a"/><rect x="1315.0" y="460.5" width="11" height="11" fill="#d42d2d"/><circle cx="1320.5" cy="466" r="2" fill="#e9a25a"/><rect x="1284.5" y="480.5" width="10" height="10" fill="#4d88c6"/><circle cx="1289.5" cy="485.5" r="2" fill="#d8c470"/><rect x="1300" y="480.5" width="10" height="10" fill="#4d88c6"/><circle cx="1305" cy="485.5" r="2" fill="#d8c470"/><rect x="1284.5" y="493" width="10" height="10" fill="#4d88c6"/><circle cx="1289.5" cy="498" r="2" fill="#d8c470"/><rect x="1300" y="493" width="10" height="10" fill="#4d88c6"/><circle cx="1305" cy="498" r="2" fill="#d8c470"/><rect x="1315" y="480" width="11" height="11" fill="#d42d2d"/><path d="M1145 627 V517 H1310" stroke="#e9ab90" stroke-width="0.8" stroke-dasharray="4 2" fill="none"/><path d="M1146 570 H1228 V551 M1228 570 V627" stroke="#4a6a50" stroke-width="1.6" fill="none"/><path d="M1228 627 V551" stroke="#e9ab90" stroke-width="0.7"/><rect x="1130" y="541.5" width="125" height="3" fill="#d42d2d"/><rect x="1130" y="599.5" width="125" height="3" fill="#d42d2d"/><rect x="1189" y="539" width="7" height="8" fill="#d42d2d"/><rect x="1233" y="539" width="20" height="8" fill="#d42d2d"/><rect x="1189" y="597" width="7" height="8" fill="#d42d2d"/><rect x="1233" y="597" width="20" height="8" fill="#d42d2d"/><rect x="1152" y="533" width="37.700000000000045" height="16" fill="#d42d2d"/><rect x="1152" y="593" width="37.700000000000045" height="16" fill="#d42d2d"/><circle cx="1158.0" cy="543" r="1.7" fill="#e9a25a"/><circle cx="1164.3" cy="543" r="1.7" fill="#e9a25a"/><circle cx="1170.6" cy="543" r="1.7" fill="#e9a25a"/><circle cx="1176.9" cy="543" r="1.7" fill="#e9a25a"/><circle cx="1183.2" cy="543" r="1.7" fill="#e9a25a"/><text x="1171" y="540" text-anchor="middle" font-family="Liberation Mono" font-size="6" fill="#f0b0a0">2</text><text x="1171" y="548" text-anchor="middle" font-family="Liberation Mono" font-size="7" fill="#f0b0a0">GND</text><text x="1171" y="599" text-anchor="middle" font-family="Liberation Mono" font-size="6" fill="#f0b0a0">1</text><text x="1171" y="607" text-anchor="middle" font-family="Liberation Mono" font-size="8" fill="#f0b0a0">12V0</text><path d="M1165 577 h12 M1171 571 v12" stroke="#c08878" stroke-width="0.8"/><rect x="1196" y="533" width="37.700000000000045" height="16" fill="#d42d2d"/><rect x="1196" y="593" width="37.700000000000045" height="16" fill="#d42d2d"/><circle cx="1202.0" cy="543" r="1.7" fill="#e9a25a"/><circle cx="1208.3" cy="543" r="1.7" fill="#e9a25a"/><circle cx="1214.6" cy="543" r="1.7" fill="#e9a25a"/><circle cx="1220.9" cy="543" r="1.7" fill="#e9a25a"/><circle cx="1227.2" cy="543" r="1.7" fill="#e9a25a"/><text x="1215" y="540" text-anchor="middle" font-family="Liberation Mono" font-size="6" fill="#f0b0a0">2</text><text x="1215" y="548" text-anchor="middle" font-family="Liberation Mono" font-size="7" fill="#f0b0a0">GND</text><text x="1215" y="599" text-anchor="middle" font-family="Liberation Mono" font-size="6" fill="#f0b0a0">1</text><text x="1215" y="607" text-anchor="middle" font-family="Liberation Mono" font-size="8" fill="#f0b0a0">12V0</text><path d="M1209 577 h12 M1215 571 v12" stroke="#c08878" stroke-width="0.8"/><text x="1162.6" y="531.6" font-family="Liberation Mono" font-size="16.1" fill="#e9ab90" textLength="15.599999999999909" lengthAdjust="spacingAndGlyphs">C7</text><text x="1206" y="531.6" font-family="Liberation Mono" font-size="16.1" fill="#e9ab90" textLength="15.599999999999909" lengthAdjust="spacingAndGlyphs">C6</text><text x="1146.7" y="622" font-family="Liberation Mono" font-size="15.9" fill="#e9ab90" textLength="24.299999999999955" lengthAdjust="spacingAndGlyphs">1V0</text><rect x="1252" y="528" width="17" height="11" fill="#d42d2d"/><circle cx="1260.5" cy="532.5" r="1.6" fill="#e9a25a"/><rect x="1252" y="547" width="17" height="11" fill="#d42d2d"/><circle cx="1260.5" cy="551.5" r="1.6" fill="#e9a25a"/><rect x="1252" y="577" width="17" height="11" fill="#d42d2d"/><circle cx="1260.5" cy="581.5" r="1.6" fill="#e9a25a"/><rect x="1252" y="597" width="17" height="12" fill="#d42d2d"/><circle cx="1260.5" cy="602.0" r="1.6" fill="#e9a25a"/><path d="M1245 629 l12 0 l-12 -12z" fill="none" stroke="#e9ab90" stroke-width="1.6"/><rect x="1284.0" y="527.0" width="11" height="11" fill="#d42d2d"/><circle cx="1289.5" cy="532.5" r="2" fill="#e9a25a"/><rect x="1299.5" y="527.0" width="11" height="11" fill="#d42d2d"/><circle cx="1305" cy="532.5" r="2" fill="#e9a25a"/><rect x="1315.0" y="527.0" width="11" height="11" fill="#d42d2d"/><circle cx="1320.5" cy="532.5" r="2" fill="#e9a25a"/><rect x="1284.0" y="547.0" width="11" height="11" fill="#d42d2d"/><circle cx="1289.5" cy="552.5" r="2" fill="#e9a25a"/><rect x="1299.5" y="547.0" width="11" height="11" fill="#d42d2d"/><circle cx="1305" cy="552.5" r="2" fill="#e9a25a"/><rect x="1315.0" y="547.0" width="11" height="11" fill="#d42d2d"/><circle cx="1320.5" cy="552.5" r="2" fill="#e9a25a"/><rect x="1284.0" y="563.0" width="11" height="11" fill="#d42d2d"/><circle cx="1289.5" cy="568.5" r="2" fill="#e9a25a"/><rect x="1299.5" y="563.0" width="11" height="11" fill="#d42d2d"/><circle cx="1305" cy="568.5" r="2" fill="#e9a25a"/><rect x="1315.0" y="563.0" width="11" height="11" fill="#d42d2d"/><circle cx="1320.5" cy="568.5" r="2" fill="#e9a25a"/><rect x="1284.0" y="577.5" width="11" height="11" fill="#d42d2d"/><circle cx="1289.5" cy="583" r="2" fill="#e9a25a"/><rect x="1299.5" y="577.5" width="11" height="11" fill="#d42d2d"/><circle cx="1305" cy="583" r="2" fill="#e9a25a"/><rect x="1315.0" y="577.5" width="11" height="11" fill="#d42d2d"/><circle cx="1320.5" cy="583" r="2" fill="#e9a25a"/><rect x="1284.5" y="597.5" width="10" height="10" fill="#4d88c6"/><circle cx="1289.5" cy="602.5" r="2" fill="#d8c470"/><rect x="1300" y="597.5" width="10" height="10" fill="#4d88c6"/><circle cx="1305" cy="602.5" r="2" fill="#d8c470"/><rect x="1284.5" y="610" width="10" height="10" fill="#4d88c6"/><circle cx="1289.5" cy="615" r="2" fill="#d8c470"/><rect x="1300" y="610" width="10" height="10" fill="#4d88c6"/><circle cx="1305" cy="615" r="2" fill="#d8c470"/><rect x="1315" y="597" width="11" height="11" fill="#d42d2d"/><path d="M1330 265 H1278.0 L1238 305.0 V634" stroke="#4f86c6" stroke-width="0.9" fill="none"/><path d="M1330 268 H1279.5 L1241 306.5 V634" stroke="#4f86c6" stroke-width="0.9" fill="none"/><path d="M1330 271 H1281.0 L1244 308.0 V634" stroke="#4f86c6" stroke-width="0.9" fill="none"/><path d="M1330 274 H1282.5 L1247 309.5 V634" stroke="#4f86c6" stroke-width="0.9" fill="none"/><path d="M1330 277 H1284.0 L1250 311.0 V634" stroke="#4f86c6" stroke-width="0.9" fill="none"/><path d="M1235 134 L1285 180 H1330" stroke="#93d08e" stroke-width="0.9" fill="none"/><path d="M1240 134 L1290 185 H1330" stroke="#4f86c6" stroke-width="0.9" fill="none"/><path d="M1245 134 L1295 190 H1330" stroke="#93d08e" stroke-width="0.9" fill="none"/><path d="M1250 134 L1300 195 H1330" stroke="#4f86c6" stroke-width="0.9" fill="none"/><text x="1265" y="292" font-family="Liberation Mono" font-size="15.2" fill="#eeeeb0" textLength="25" lengthAdjust="spacingAndGlyphs" transform="translate(2555,0) scale(-1,1)">R21</text><path d="M976 388.0 H1000 L1092.0 480.0 V515 L1211.0 634" stroke="#4f86c6" stroke-width="0.9" fill="none"/><path d="M976 394.5 H1000 L1086.5 481.0 V524 L1196.5 634" stroke="#4f86c6" stroke-width="0.9" fill="none"/><path d="M976 401.0 H1000 L1081.0 482.0 V533 L1182.0 634" stroke="#4f86c6" stroke-width="0.9" fill="none"/><path d="M976 407.5 H1000 L1075.5 483.0 V542 L1167.5 634" stroke="#4f86c6" stroke-width="0.9" fill="none"/><path d="M976 414.0 H1000 L1070.0 484.0 V551 L1153.0 634" stroke="#4f86c6" stroke-width="0.9" fill="none"/><path d="M976 420.5 H1000 L1064.5 485.0 V560 L1138.5 634" stroke="#4f86c6" stroke-width="0.9" fill="none"/><path d="M976 427.0 H1000 L1059.0 486.0 V569 L1124.0 634" stroke="#4f86c6" stroke-width="0.9" fill="none"/><path d="M976 433.5 H1000 L1053.5 487.0 V578 L1109.5 634" stroke="#4f86c6" stroke-width="0.9" fill="none"/><path d="M976 440.0 H1000 L1048.0 488.0 V587 L1095.0 634" stroke="#4f86c6" stroke-width="0.9" fill="none"/><path d="M976 446.5 H1000 L1042.5 489.0 V596 L1080.5 634" stroke="#4f86c6" stroke-width="0.9" fill="none"/><path d="M976 453.0 H1000 L1037.0 490.0 V605 L1066.0 634" stroke="#4f86c6" stroke-width="0.9" fill="none"/><path d="M976 459.5 H1000 L1031.5 491.0 V614 L1051.5 634" stroke="#4f86c6" stroke-width="0.9" fill="none"/><path d="M976 466.0 H1000 L1026.0 492.0 V623 L1037.0 634" stroke="#4f86c6" stroke-width="0.9" fill="none"/><path d="M976 472.5 H1000 L1020.5 493.0 V632 L1022.5 634" stroke="#4f86c6" stroke-width="0.9" fill="none"/></svg>
</body></html>
